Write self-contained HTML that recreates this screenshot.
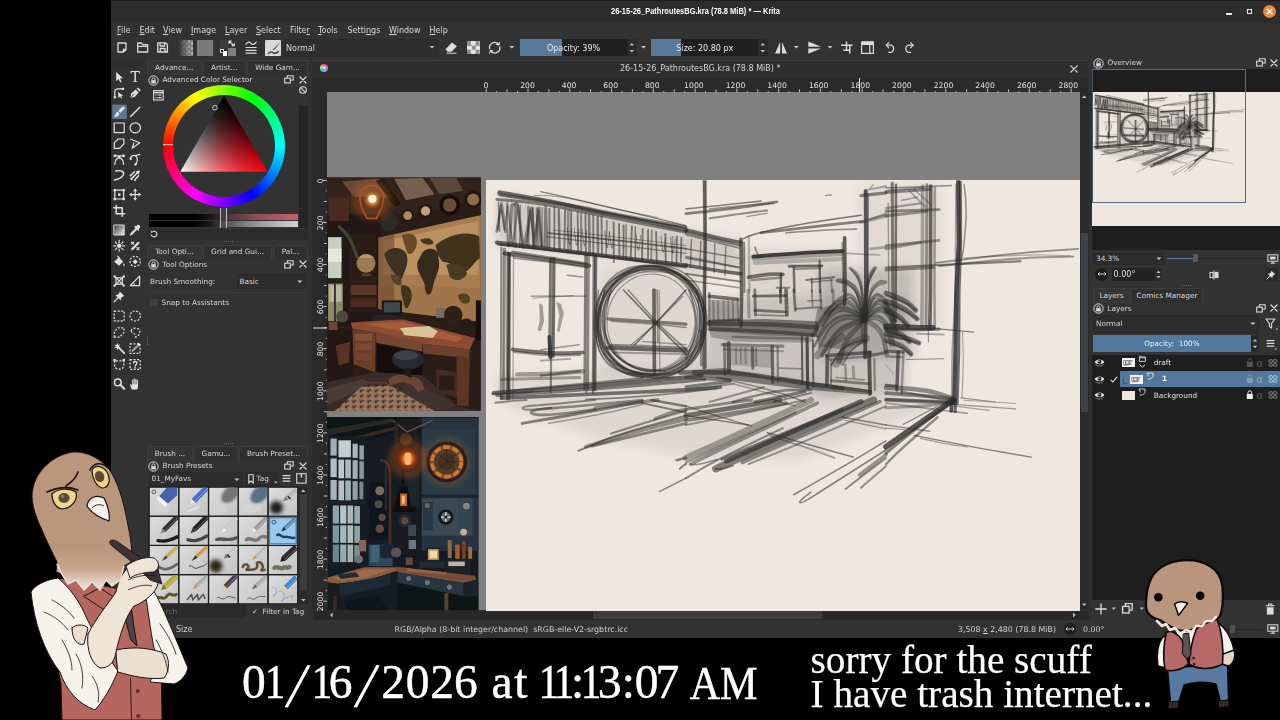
<!DOCTYPE html>
<html lang="en">
<head>
<meta charset="utf-8">
<title>26-15-26_PathroutesBG.kra (78.8 MiB) * — Krita</title>
<style>
*{box-sizing:border-box;margin:0;padding:0}
html,body{width:1280px;height:720px;overflow:hidden;background:#000}
body{position:relative;font-family:"DejaVu Sans","Liberation Sans",sans-serif;font-size:8px;color:#d6d6d6}
.a{position:absolute}
.t{position:absolute;white-space:nowrap;line-height:10px;font-size:8px;color:#d8d8d8}
svg{position:absolute;overflow:visible}
#win{left:0;top:0;width:1280px;height:720px}
.d{font-size:7.3px}
u{text-decoration:underline;text-underline-offset:1px}
</style>
</head>
<body>
<div id="win" class="a">
<div class="a" style="left:111px;top:0;width:1169px;height:638px;background:#323232"></div>
<div class="a" style="left:111px;top:0;width:1169px;height:22.5px;background:#2d2d2d;border-top:1px solid #1a1a1a"></div>
<div class="t" style="left:611.3px;top:6.6px;font-family:'Liberation Sans','DejaVu Sans',sans-serif;font-size:8.2px;font-weight:bold;color:#fff;transform:scaleX(0.915);transform-origin:0 50%">26-15-26_PathroutesBG.kra (78.8 MiB) * — Krita</div>
<!--menu-->
<div class="t" style="left:117px;top:26px"><u>F</u>ile</div>
<div class="t" style="left:139.5px;top:26px"><u>E</u>dit</div>
<div class="t" style="left:163px;top:26px"><u>V</u>iew</div>
<div class="t" style="left:191px;top:26px"><u>I</u>mage</div>
<div class="t" style="left:225px;top:26px"><u>L</u>ayer</div>
<div class="t" style="left:256px;top:26px"><u>S</u>elect</div>
<div class="t" style="left:290px;top:26px">Filte<u>r</u></div>
<div class="t" style="left:318px;top:26px"><u>T</u>ools</div>
<div class="t" style="left:347.5px;top:26px">Setti<u>n</u>gs</div>
<div class="t" style="left:389px;top:26px"><u>W</u>indow</div>
<div class="t" style="left:429.5px;top:26px"><u>H</u>elp</div>
<!-- window buttons -->
<div class="a" style="left:1226px;top:13px;width:6px;height:2px;background:#e8e8e8"></div>
<div class="a" style="left:1247px;top:9px;width:5px;height:5px;border:1.5px solid #e8e8e8"></div>
<div class="a" style="left:1263px;top:5px;width:13px;height:13px;border-radius:50%;background:#e8883a"></div>
<svg style="left:1263px;top:5px" width="13" height="13" viewBox="0 0 13 13"><path d="M4.2 4.2 L8.8 8.8 M8.8 4.2 L4.2 8.8" stroke="#fff" stroke-width="1.5" stroke-linecap="round"/></svg>

<!--toolbar-->
<div class="a" style="left:283px;top:39px;width:155px;height:17.5px;background:#2e2e2e;border:1px solid #2a2a2a;border-radius:2px"></div>
<!-- toolbar icons -->
<svg style="left:111px;top:36px" width="830" height="24" viewBox="111 36 830 24" fill="none" stroke="#dcdcdc" stroke-width="1.3" stroke-linejoin="round" stroke-linecap="round">
  <!-- new -->
  <path d="M118 43 H126 V49.5 L123.5 52 H118 Z M126 49.5 H123.5 V52"/>
  <!-- open -->
  <path d="M137.7 52 V43 H141.5 L142.8 44.6 H147.6 V52 Z M137.7 46.3 H147.6"/>
  <!-- save -->
  <path d="M157.7 42.8 H165.6 L167.4 44.6 V52 H157.7 Z M160 42.8 V46 H164.6 V42.8 M160.2 52 V48.5 H165 V52"/>
  <!-- brush settings -->
  <path d="M246 44.2 C248 41.5 249.5 41.5 251 43.3 S254.5 44.5 256.2 42.2 M246 47.5 H256.2 M246 50.3 H256.2 M246 53.1 H256.2" stroke-width="1.2"/>
  <!-- eraser -->
  <path d="M445.5 49.2 L452 42.6 L456.8 46.2 L451.5 51.8 H447.6 Z" fill="#dcdcdc" stroke="none"/>
  <path d="M447 53.2 H456" stroke-width="1"/>
  <!-- reload -->
  <path d="M489.6 48.6 A5.2 5.2 0 0 1 498.6 44.2 M499.8 46.8 A5.2 5.2 0 0 1 490.8 51.2" stroke-width="1.3"/>
  <path d="M499.6 42.2 L499 45 L496.4 44.4 M489.8 53.2 L490.4 50.4 L493 51" stroke-width="1.1"/>
  <!-- mirror H -->
  <path d="M780.2 42 V53.5 H775 Z M782 42 V53.5 H787 Z" fill="#dcdcdc" stroke="none"/>
  <!-- mirror V -->
  <path d="M808.3 41.6 L821 46.8 H808.3 Z M808.3 48.4 H821 L808.3 53.8 Z" fill="#dcdcdc" stroke="none"/>
  <!-- wrap/crop -->
  <path d="M846.5 41.5 V50.2 M841 45.2 H852.5 M849.8 45.2 V53.6 M843.4 50.2 H849.8" stroke-width="1.4" stroke-linecap="butt"/>
  <!-- table -->
  <path d="M861.6 41.8 H873.4 V53.4 H861.6 Z M861.6 44.4 H873.4 M869.8 44.4 V53.4" stroke-width="1.2"/>
  <path d="M861.6 41.8 H873.4 V44.4 H861.6 Z" fill="#dcdcdc" stroke="none"/>
  <!-- undo -->
  <path d="M886.6 45.2 H890.2 A3.4 3.6 0 0 1 890.2 52.4 H889" stroke-width="1.3"/>
  <path d="M888.8 42.6 L886.2 45.2 L888.8 47.8" stroke-width="1.2"/>
  <!-- redo -->
  <path d="M912.8 45.2 H909.2 A3.4 3.6 0 0 0 909.2 52.4 H910.4" stroke-width="1.3"/>
  <path d="M910.6 42.6 L913.2 45.2 L910.6 47.8" stroke-width="1.2"/>
  <!-- dropdown arrows -->
  <g fill="#c8c8c8" stroke="none">
    <path d="M429.5 46 h5 l-2.5 2.6z"/>
    <path d="M509.3 46 h5 l-2.5 2.6z"/>
    <path d="M641 46 h5 l-2.5 2.6z"/>
    <path d="M793.8 46 h5 l-2.5 2.6z"/>
    <path d="M827.5 46 h5 l-2.5 2.6z"/>
  </g>
</svg>
<!-- pattern (checker fade) -->
<div class="a" style="left:178px;top:39.5px;width:14.5px;height:16px;background:
 linear-gradient(90deg,#2e2e2e 0%,rgba(46,46,46,0.6) 35%,rgba(46,46,46,0) 100%),
 repeating-conic-gradient(#8a8a8a 0% 25%,#b8b8b8 0% 50%) 0 0/5px 5px"></div>
<!-- gradient -->
<div class="a" style="left:196.5px;top:39.5px;width:16px;height:16px;background:#7b7b7b"></div>
<!-- fg/bg -->
<div class="a" style="left:219.5px;top:40px;width:9px;height:8.5px;background:#3c3c3c"></div>
<div class="a" style="left:228px;top:48px;width:7.5px;height:7.5px;background:#7f7f7f"></div>
<div class="a" style="left:222.5px;top:51px;width:4.5px;height:4.5px;background:#fff"></div>
<div class="a" style="left:219.8px;top:48.6px;width:4.6px;height:4.6px;background:#000;border:0.8px solid #ddd"></div>
<svg style="left:228px;top:39px" width="8" height="8" viewBox="0 0 8 8" fill="none" stroke="#e6e6e6" stroke-width="1.1" stroke-linecap="round" stroke-linejoin="round"><path d="M1.2 2.2 L6 7 M1 4.2 V2 H3.2 M4 6.8 H6.2 V4.6"/></svg>
<!-- brush preset thumbnail -->
<div class="a" style="left:265px;top:39.5px;width:16.3px;height:16.2px;background:#d9d9d9;border-radius:1px"></div>
<svg style="left:265px;top:39.5px" width="16.3" height="16.2" viewBox="0 0 16.3 16.2"><path d="M15.8 1.5 L9 8.4 L7.2 10.6 L9.6 9.6 Z" fill="#3a3a3a"/><path d="M3.5 13.4 C5.5 11.4 7 11.8 8 12.6 S11 13.6 13.4 11.6" stroke="#444" stroke-width="1.5" fill="none" stroke-linecap="round"/></svg>
<!-- Normal combobox -->
<div class="t" style="left:286px;top:44px">Normal</div>
<!-- alpha lock checker -->
<div class="a" style="left:467px;top:41px;width:13px;height:13px;background:repeating-conic-gradient(#e6e6e6 0% 25%,#8c8c8c 0% 50%) 0 0/8.67px 8.67px"></div>
<!-- opacity slider -->
<div class="a" style="left:520px;top:39px;width:107px;height:17.3px;background:#1f1f1f"></div>
<div class="a" style="left:520px;top:39px;width:42px;height:17.3px;background:#587a9c"></div>
<div class="t" style="left:520px;top:44px;width:107px;text-align:center;color:#eee">Opacity: 39%</div>
<div class="a" style="left:627px;top:39px;width:9.5px;height:17.3px;background:#2a2a2a"></div>
<svg style="left:627px;top:39px" width="10" height="18" viewBox="0 0 10 18" fill="#bdbdbd"><path d="M2.4 6.6 L4.8 4 L7.2 6.6 Z M2.4 11 L4.8 13.6 L7.2 11 Z"/></svg>
<!-- size slider -->
<div class="a" style="left:651.3px;top:39px;width:107px;height:17.3px;background:#1f1f1f"></div>
<div class="a" style="left:651.3px;top:39px;width:30px;height:17.3px;background:#587a9c"></div>
<div class="t" style="left:651.3px;top:44px;width:107px;text-align:center;color:#eee">Size: 20.80 px</div>
<div class="a" style="left:758.3px;top:39px;width:9.5px;height:17.3px;background:#2a2a2a"></div>
<svg style="left:758.3px;top:39px" width="10" height="18" viewBox="0 0 10 18" fill="#bdbdbd"><path d="M2.4 6.6 L4.8 4 L7.2 6.6 Z M2.4 11 L4.8 13.6 L7.2 11 Z"/></svg>

<!--toolbox-->
<svg style="left:0;top:0" width="160" height="400" viewBox="0 0 160 400" stroke="#e2e2e2" stroke-width="1.2" stroke-linecap="round" stroke-linejoin="round">
<g transform="translate(113.2 71.0)"><path d="M3 1 L3 10.2 L5.4 8 L7 11.4 L8.4 10.8 L6.8 7.4 L9.8 7.2 Z" fill="#e2e2e2" stroke="none"/></g>
<g transform="translate(129.2 71.0)"><text x="6" y="11" text-anchor="middle" font-family="DejaVu Serif,Liberation Serif,serif" font-size="14" fill="#e2e2e2" stroke="none">T</text></g>
<g transform="translate(113.2 87.0)"><path d="M1.6 10 V4.6 C1.6 2.6 3 1.8 5 1.8 H9.6" fill="none"/><rect x="0.6" y="9.2" width="2.2" height="2.2" fill="#e2e2e2" stroke="none"/><rect x="8.6" y="0.8" width="2.2" height="2.2" fill="#e2e2e2" stroke="none"/><path d="M5 5 L5 11 L6.8 9.4 L8 11.6 L9 11 L7.9 9 L10 8.8 Z" fill="#e2e2e2" stroke="none"/></g>
<g transform="translate(129.2 87.0)"><path d="M1 11 L2.2 6.2 L6.4 2.6 L9.4 5.6 L5.8 9.8 Z" fill="#e2e2e2" stroke="none"/><path d="M7.4 1.6 L8.8 0.4 L11.6 3.2 L10.4 4.6 Z" fill="#e2e2e2" stroke="none"/><path d="M1.4 10.6 L5 7" stroke="#323232" stroke-width="0.9"/></g>
<rect x="112.3" y="104.6" width="14.6" height="14.4" fill="#5b7792" stroke="none"/>
<g transform="translate(113.2 105.8)"><path d="M10.8 0.8 C11.8 1.4 11.6 2.6 10.8 3.4 L7 7.2 L5 5.2 L8.8 1.2 C9.4 0.6 10.2 0.4 10.8 0.8 Z" fill="#e2e2e2" stroke="none"/><path d="M4.4 6 L6.2 7.8 C6.2 10 4.2 11.4 0.6 11.2 C2.2 10.2 2 8.6 2.6 7.4 C3 6.6 3.6 6.2 4.4 6 Z" fill="#e2e2e2" stroke="none"/></g>
<g transform="translate(129.2 105.8)"><path d="M1.4 10.6 L10.6 1.4" fill="none" stroke-width="1.4"/></g>
<g transform="translate(113.2 121.8)"><rect x="1" y="1.2" width="10" height="9.6" fill="none"/></g>
<g transform="translate(129.2 121.8)"><ellipse cx="6" cy="6" rx="5.2" ry="5" fill="none"/></g>
<g transform="translate(113.2 137.6)"><path d="M1 10.8 L1.2 5 L5 1.4 L10.8 1.4 L10.6 6.4 L6.4 10.8 Z" fill="none"/></g>
<g transform="translate(129.2 137.6)"><path d="M1.6 1.6 L10.6 5.2 L3 10.6 L4.6 5.4" fill="none"/></g>
<g transform="translate(113.2 153.4)"><path d="M1.6 11 C1.8 6.8 3.4 4.6 6 4.4 C8.6 4.6 10.2 6.8 10.4 11" fill="none"/><path d="M1.6 2.4 H10.4" fill="none"/><rect x="0.4" y="1.2" width="2.4" height="2.4" fill="#e2e2e2" stroke="none"/><rect x="9.2" y="1.2" width="2.4" height="2.4" fill="#e2e2e2" stroke="none"/><circle cx="6" cy="3.6" r="1.3" fill="#e2e2e2" stroke="none"/></g>
<g transform="translate(129.2 153.4)"><path d="M1.4 5.2 C1.4 2.6 4 1.6 6.4 2.2 L10.6 1" fill="none"/><path d="M6.6 2.4 C8.6 4.8 8.4 8 6.4 11.2" fill="none"/><rect x="0.4" y="4.2" width="2.2" height="2.2" fill="#e2e2e2" stroke="none"/><circle cx="6.4" cy="10.8" r="1.2" fill="#e2e2e2" stroke="none"/></g>
<g transform="translate(113.2 169.2)"><path d="M2.4 1.8 C7.6 0.6 11.4 2.4 10.2 5.6 C9 8.6 5 10 1.2 10.8" fill="none" stroke-width="1.4"/></g>
<g transform="translate(129.2 169.2)"><path d="M10.8 1 L6.2 2.2 L9.6 5.6 Z" fill="#e2e2e2" stroke="none"/><path d="M8 3.8 L3.4 8.4 M5.2 2.6 L2.2 5.6 M9.4 6.6 L6.4 9.8" fill="none" stroke-width="1.5"/><circle cx="2.4" cy="9.6" r="1.3" fill="#e2e2e2" stroke="none"/><circle cx="1.4" cy="6.2" r="1" fill="#e2e2e2" stroke="none"/><circle cx="5.8" cy="10.8" r="1" fill="#e2e2e2" stroke="none"/></g>
<g transform="translate(113.2 188.6)"><rect x="1.6" y="1.6" width="8.8" height="8.8" fill="none"/><rect x="0.4" y="0.4" width="2.4" height="2.4" fill="#e2e2e2" stroke="none"/><rect x="9.2" y="0.4" width="2.4" height="2.4" fill="#e2e2e2" stroke="none"/><rect x="0.4" y="9.2" width="2.4" height="2.4" fill="#e2e2e2" stroke="none"/><rect x="9.2" y="9.2" width="2.4" height="2.4" fill="#e2e2e2" stroke="none"/><rect x="4.8" y="4.8" width="2.4" height="2.4" fill="#e2e2e2" stroke="none"/></g>
<g transform="translate(129.2 188.6)"><path d="M6 1 V11 M1 6 H11" fill="none"/><path d="M6 0 L8 2.6 H4 Z M6 12 L8 9.4 H4 Z M0 6 L2.6 4 V8 Z M12 6 L9.4 4 V8 Z" fill="#e2e2e2" stroke="none"/></g>
<g transform="translate(113.2 204.8)"><path d="M3 0.6 V9 H11.4 M0.6 3 H9 V11.4" fill="none" stroke-width="1.5"/></g>
<defs><linearGradient id="tg" x1="0" y1="0" x2="1" y2="1"><stop offset="0" stop-color="#3a3a3a"/><stop offset="1" stop-color="#f0f0f0"/></linearGradient></defs>
<g transform="translate(113.2 224.0)"><rect x="1" y="1" width="10" height="10" fill="url(#tg)" stroke="#d8d8d8" stroke-width="1"/></g>
<g transform="translate(129.2 224.0)"><path d="M8.2 1 C9.4 -0.2 11.8 2.2 10.8 3.6 L9.2 5.2 L6.8 2.6 Z" fill="#e2e2e2" stroke="none"/><path d="M6 2.6 L9.2 6" fill="none" stroke-width="1.6"/><path d="M7 4.4 L2 9.4 L1.2 11 L2.8 10.2 L7.8 5.2" fill="none" stroke-width="1.1"/></g>
<g transform="translate(113.2 239.8)"><circle cx="6" cy="6" r="2.2" fill="#e2e2e2" stroke="none"/><path d="M6 0.6 V2.6 M6 9.4 V11.4 M0.6 6 H2.6 M9.4 6 H11.4 M2.2 2.2 L3.6 3.6 M8.4 8.4 L9.8 9.8 M2.2 9.8 L3.6 8.4 M8.4 3.6 L9.8 2.2" fill="none" stroke-dasharray="1 0.8"/></g>
<g transform="translate(129.2 239.8)"><path d="M1.6 9.2 L9 1.6 L10.6 3.2 L3.2 10.8 Z" fill="#e2e2e2" stroke="none"/><path d="M2.4 2.4 L4.4 4.4 M4.4 2.4 L2.4 4.4 M7.8 7.8 L9.8 9.8 M9.8 7.8 L7.8 9.8" fill="none" stroke-width="1.2"/></g>
<g transform="translate(113.2 255.4)"><path d="M1 6.4 L5.6 1.8 L10 6.2 L5.8 10.4 Z" fill="#e2e2e2" stroke="none"/><path d="M4.4 0.8 L6.4 2.8" fill="none"/><path d="M10.6 7.6 C11.6 9 11.8 10.2 10.8 10.8 C9.8 10.2 9.8 9 10.6 7.6Z" fill="#e2e2e2" stroke="none"/></g>
<g transform="translate(129.2 255.4)"><ellipse cx="6" cy="6" rx="5.2" ry="5" fill="none" stroke-dasharray="2 1.5" stroke-linecap="butt"/><path d="M3.4 6.4 L6 3.8 L8.6 6.4 L6 8.8 Z" fill="#e2e2e2" stroke="none"/></g>
<g transform="translate(113.2 275.0)"><path d="M1.4 1.4 L10.6 10.6 M10.6 1.4 L1.4 10.6" fill="none"/><rect x="2.8" y="2.8" width="6.4" height="6.4" fill="none"/><circle cx="1.4" cy="1.4" r="1.2" fill="#e2e2e2" stroke="none"/><circle cx="10.6" cy="1.4" r="1.2" fill="#e2e2e2" stroke="none"/><circle cx="1.4" cy="10.6" r="1.2" fill="#e2e2e2" stroke="none"/><circle cx="10.6" cy="10.6" r="1.2" fill="#e2e2e2" stroke="none"/></g>
<g transform="translate(129.2 275.0)"><path d="M1 10.6 L10.4 1.2 L10.4 10.6 Z" fill="none"/><path d="M5.4 10.4 A4.4 4.4 0 0 0 4.2 7.6" fill="none" stroke-width="0.9"/></g>
<g transform="translate(113.2 290.6)"><path d="M6.6 0.8 L11.2 5.4 L9.6 5.8 L7.8 7.6 L7.6 10 L2 4.4 L4.4 4.2 L6.2 2.4 Z" fill="#e2e2e2" stroke="none"/><path d="M4.6 7.4 L0.8 11.2" fill="none" stroke-width="1.2"/></g>
<g transform="translate(113.2 310.0)"><rect x="1" y="1.2" width="10" height="9.6" fill="none" stroke-dasharray="2 1.5" stroke-linecap="butt"/></g>
<g transform="translate(129.2 310.0)"><ellipse cx="6" cy="6" rx="5.2" ry="5" fill="none" stroke-dasharray="2 1.5" stroke-linecap="butt"/></g>
<g transform="translate(113.2 326.4)"><path d="M1 10.8 L1.2 5 L5 1.4 L10.8 1.4 L10.6 6.4 L6.4 10.8 Z" fill="none" stroke-dasharray="2 1.5" stroke-linecap="butt"/></g>
<g transform="translate(129.2 326.4)"><path d="M2 4.4 C2.4 1 9.6 0.6 10.4 4.6 C11 8 8.4 10.6 5.4 10.8 M2 4.4 C2 6.6 5 6.4 5.6 8.2" fill="none" stroke-dasharray="2 1.5" stroke-linecap="butt"/></g>
<g transform="translate(113.2 342.2)"><path d="M5 5 L11 11" fill="none" stroke-width="1.7"/><path d="M4 0.4 L4.8 2.8 L7.2 2 L5.6 4 L7.6 5.6 L5 5.6 L4.4 8 L3.4 5.6 L0.8 6 L2.8 4.2 L1.2 2.2 L3.4 2.8 Z" fill="#e2e2e2" stroke="none"/></g>
<g transform="translate(129.2 342.2)"><rect x="0.8" y="1.6" width="10" height="9.6" fill="none" stroke-dasharray="2 1.5" stroke-linecap="butt"/><path d="M8.6 1.2 C9.6 0.2 11.6 2 10.8 3.2 L9.6 4.4 L7.6 2.4 Z" fill="#e2e2e2" stroke="none"/><path d="M7.6 3.6 L3.6 7.6 L3 9 L4.4 8.4 L8.4 4.4" fill="none" stroke-width="1"/></g>
<g transform="translate(113.2 358.4)"><path d="M1.4 2.4 V6.4 C1.4 9.4 3.4 10.8 6 10.8 C8.6 10.8 10.6 9.4 10.6 6.4 V2.4 Z" fill="none" stroke-dasharray="2 1.5" stroke-linecap="butt"/><rect x="0.2" y="0.6" width="2.4" height="2.4" fill="#e2e2e2" stroke="none"/><rect x="9.4" y="0.6" width="2.4" height="2.4" fill="#e2e2e2" stroke="none"/></g>
<g transform="translate(129.2 358.4)"><rect x="0.8" y="1.2" width="10.2" height="9.8" fill="none" stroke-dasharray="2 1.5" stroke-linecap="butt"/><path d="M4.2 4.6 C4.4 2.6 7.8 2.6 7.8 4.6 C7.8 6 6 6 6 7.6" fill="none" stroke-width="1.3"/><circle cx="6" cy="9.4" r="0.8" fill="#e2e2e2" stroke="none"/></g>
<g transform="translate(113.2 377.8)"><circle cx="4.6" cy="4.6" r="3.3" fill="none" stroke-width="1.5"/><path d="M7 7 L11 11" fill="none" stroke-width="2"/></g>
<g transform="translate(129.2 377.8)"><path d="M2.6 11.6 L1 7.6 C0.6 6.6 1.6 6.2 2.2 7 L3 8 V2.4 C3 1.4 4.4 1.4 4.4 2.4 V1.4 C4.4 0.4 5.9 0.4 5.9 1.4 V1.8 C5.9 0.9 7.4 0.9 7.4 1.8 V2.8 C7.4 2 8.8 2 8.8 2.8 V8 C8.8 9.6 8.4 10.6 8 11.6 Z" fill="#e2e2e2" stroke="none"/><path d="M4.4 2.4 V6 M5.9 1.8 V6 M7.4 2.8 V6" stroke="#323232" stroke-width="0.5" fill="none"/></g>
</svg>
<div class="a" style="left:111px;top:59px;width:32px;height:9px;background:#2e2e2e"></div>

<!--leftdock-->
<div class="a" style="left:147.0px;top:60.0px;width:54.5px;height:15.0px;background:#353535;border:1px solid #3d3d3d;border-bottom:none;border-radius:2px 2px 0 0"></div>
<div class="t d" style="left:147.0px;top:63.0px;width:54.5px;text-align:center">Advance...</div>
<div class="a" style="left:202.5px;top:60.0px;width:43.5px;height:15.0px;background:#2f2f2f;border:1px solid #3d3d3d;border-bottom:none;border-radius:2px 2px 0 0"></div>
<div class="t d" style="left:202.5px;top:63.0px;width:43.5px;text-align:center">Artist...</div>
<div class="a" style="left:247.0px;top:60.0px;width:61.0px;height:15.0px;background:#2f2f2f;border:1px solid #3d3d3d;border-bottom:none;border-radius:2px 2px 0 0"></div>
<div class="t d" style="left:247.0px;top:63.0px;width:61.0px;text-align:center">Wide Gam...</div>
<svg style="left:148.0px;top:74.5px" width="11" height="11" viewBox="0 0 11 11" fill="none" stroke="#dcdcdc" stroke-width="1"><circle cx="5.5" cy="5.5" r="4.7"/><rect x="3.2" y="5.2" width="4.6" height="3.2" fill="#dcdcdc" stroke="none"/><path d="M4 5.2 V4.2 A1.5 1.5 0 0 1 7 4.2 V5.2" stroke-width="0.9"/></svg><div class="t d" style="left:162.5px;top:75.0px">Advanced Color Selector</div><svg style="left:284.2px;top:75.0px" width="10" height="9" viewBox="0 0 10 9" fill="none" stroke="#dcdcdc" stroke-width="1.1"><path d="M3.4 3 V0.8 H9.2 V5 H6.4"/><rect x="0.7" y="3.2" width="5.6" height="4.8" fill="#323232"/></svg><svg style="left:298.6px;top:75.5px" width="8" height="8" viewBox="0 0 8 8" fill="none" stroke="#dcdcdc" stroke-width="1.2" stroke-linecap="round"><path d="M1 1 L7 7 M7 1 L1 7"/></svg>
<svg style="left:153px;top:89.6px" width="11" height="11" viewBox="0 0 11 11" fill="none" stroke="#dcdcdc" stroke-width="1.1"><rect x="0.6" y="0.6" width="9.6" height="9.4"/><path d="M0.6 2.6 H10.2" stroke-width="1.6"/><path d="M2.4 5 H3.6 M4.6 5 H8.6 M2.4 7.6 H3.6 M4.6 7.6 H8.6" stroke-width="1.2"/></svg>
<svg style="left:299px;top:86px" width="8" height="8" viewBox="0 0 8 8" fill="none" stroke="#dcdcdc" stroke-width="1.1"><circle cx="4" cy="4" r="3.3"/><path d="M1.7 1.7 L6.3 6.3"/></svg>
<div class="a" style="left:299px;top:104.5px;width:8.5px;height:123px;background:#262626"></div>
<div class="a" style="left:163px;top:85px;width:122px;height:122px;border-radius:50%;background:conic-gradient(from 270deg,#ff0000,#ffff00 60deg,#00ff00 120deg,#00ffff 180deg,#0000ff 240deg,#ff00ff 300deg,#ff0000)"></div>
<div class="a" style="left:173px;top:95px;width:102px;height:102px;border-radius:50%;background:#323232"></div>
<svg style="left:163px;top:85px" width="122" height="122" viewBox="163 85 122 122">
<defs><linearGradient id="tr" gradientUnits="userSpaceOnUse" x1="0" y1="95.5" x2="0" y2="171.8"><stop offset="0" stop-color="#000"/><stop offset="0.25" stop-color="#200002"/><stop offset="0.5" stop-color="#5a0006"/><stop offset="0.75" stop-color="#a6000c"/><stop offset="1" stop-color="#f80014"/></linearGradient>
<linearGradient id="tw" gradientUnits="userSpaceOnUse" x1="245.8" y1="133.65" x2="180.2" y2="171.8"><stop offset="0" stop-color="#000"/><stop offset="0.25" stop-color="#00201e"/><stop offset="0.5" stop-color="#005a56"/><stop offset="0.75" stop-color="#00a6a0"/><stop offset="1" stop-color="#00fff6"/></linearGradient></defs>
<polygon points="224,95.5 267.6,171.8 180.2,171.8" fill="url(#tr)"/>
<polygon points="224,95.5 267.6,171.8 180.2,171.8" fill="url(#tw)" style="mix-blend-mode:screen"/>
<circle cx="214.9" cy="107.7" r="2.3" fill="none" stroke="#e8e8e8" stroke-width="0.8"/>
<path d="M163 144.6 H173" stroke="#e8b0b0" stroke-width="1.2"/>
</svg>
<div class="a" style="left:148.6px;top:214.2px;width:149.6px;height:6.2px;background:linear-gradient(90deg,#000 0%,#000 30%,#1c1618 42%,#4a3438 52%,#8a4e58 72%,#b85c68 92%,#c45e6c 100%)"></div>
<div class="a" style="left:148.6px;top:221px;width:149.6px;height:6.2px;background:linear-gradient(90deg,#000 0%,#000 30%,#1e1e1e 42%,#555 52%,#909090 70%,#c4c4c4 92%,#d2d2d2 100%)"></div>
<div class="a" style="left:220px;top:207.5px;width:7px;height:20.5px;background:rgba(90,90,90,0.35);border-left:1px solid #bdbdbd;border-right:1px solid #bdbdbd"></div>
<div class="a" style="left:148px;top:228.5px;width:159.5px;height:11.5px;background:#2b2b2b"></div>
<svg style="left:149.5px;top:229.5px" width="8" height="8" viewBox="0 0 8 8" fill="none" stroke="#dcdcdc" stroke-width="1.1"><path d="M1.2 4.6 A2.9 2.9 0 1 0 2.4 1.6"/><path d="M0.6 0.6 L2.2 2 L0.8 3.4" stroke-width="0.9"/></svg>
<div class="a" style="left:224px;top:241px;width:10px;height:1px;background:repeating-linear-gradient(90deg,#666 0 1px,transparent 1px 2px)"></div>
<div class="a" style="left:147.0px;top:244.5px;width:55.0px;height:14.5px;background:#353535;border:1px solid #3d3d3d;border-bottom:none;border-radius:2px 2px 0 0"></div>
<div class="t d" style="left:147.0px;top:247.2px;width:55.0px;text-align:center">Tool Opti...</div>
<div class="a" style="left:203.0px;top:244.5px;width:69.0px;height:14.5px;background:#2f2f2f;border:1px solid #3d3d3d;border-bottom:none;border-radius:2px 2px 0 0"></div>
<div class="t d" style="left:203.0px;top:247.2px;width:69.0px;text-align:center">Grid and Gui...</div>
<div class="a" style="left:273.0px;top:244.5px;width:35.0px;height:14.5px;background:#2f2f2f;border:1px solid #3d3d3d;border-bottom:none;border-radius:2px 2px 0 0"></div>
<div class="t d" style="left:273.0px;top:247.2px;width:35.0px;text-align:center">Pal...</div>
<svg style="left:148.0px;top:259.0px" width="11" height="11" viewBox="0 0 11 11" fill="none" stroke="#dcdcdc" stroke-width="1"><circle cx="5.5" cy="5.5" r="4.7"/><rect x="3.2" y="5.2" width="4.6" height="3.2" fill="#dcdcdc" stroke="none"/><path d="M4 5.2 V4.2 A1.5 1.5 0 0 1 7 4.2 V5.2" stroke-width="0.9"/></svg><div class="t d" style="left:162.5px;top:259.5px">Tool Options</div><svg style="left:284.2px;top:259.5px" width="10" height="9" viewBox="0 0 10 9" fill="none" stroke="#dcdcdc" stroke-width="1.1"><path d="M3.4 3 V0.8 H9.2 V5 H6.4"/><rect x="0.7" y="3.2" width="5.6" height="4.8" fill="#323232"/></svg><svg style="left:298.6px;top:260.0px" width="8" height="8" viewBox="0 0 8 8" fill="none" stroke="#dcdcdc" stroke-width="1.2" stroke-linecap="round"><path d="M1 1 L7 7 M7 1 L1 7"/></svg>
<div class="t d" style="left:150px;top:277px">Brush Smoothing:</div>
<div class="a" style="left:236.5px;top:274px;width:69px;height:14.5px;background:#2d2d2d;border:1px solid #2a2a2a;border-radius:2px"></div>
<div class="t d" style="left:239.5px;top:277px">Basic</div>
<svg style="left:296.5px;top:280px" width="6" height="4" viewBox="0 0 6 4" fill="#c8c8c8"><path d="M0.4 0.5 h5 l-2.5 2.6z"/></svg>
<div class="a" style="left:150px;top:292.3px;width:155px;height:1px;background:#3a3a3a"></div>
<div class="a" style="left:150px;top:298.5px;width:7.5px;height:7.5px;background:#3e3e3e;border-radius:1px"></div>
<div class="t d" style="left:161.6px;top:298px">Snap to Assistants</div>
<div class="a" style="left:146.5px;top:335px;width:1px;height:10px;background:repeating-linear-gradient(0deg,#666 0 1px,transparent 1px 2px)"></div>
<div class="a" style="left:310.5px;top:335px;width:1px;height:10px;background:repeating-linear-gradient(0deg,#666 0 1px,transparent 1px 2px)"></div>
<div class="a" style="left:224px;top:442.5px;width:10px;height:1px;background:repeating-linear-gradient(90deg,#666 0 1px,transparent 1px 2px)"></div>
<div class="a" style="left:147.0px;top:446.0px;width:46.0px;height:14.5px;background:#353535;border:1px solid #3d3d3d;border-bottom:none;border-radius:2px 2px 0 0"></div>
<div class="t d" style="left:147.0px;top:448.8px;width:46.0px;text-align:center">Brush ...</div>
<div class="a" style="left:194.0px;top:446.0px;width:44.0px;height:14.5px;background:#2f2f2f;border:1px solid #3d3d3d;border-bottom:none;border-radius:2px 2px 0 0"></div>
<div class="t d" style="left:194.0px;top:448.8px;width:44.0px;text-align:center">Gamu...</div>
<div class="a" style="left:239.0px;top:446.0px;width:69.0px;height:14.5px;background:#2f2f2f;border:1px solid #3d3d3d;border-bottom:none;border-radius:2px 2px 0 0"></div>
<div class="t d" style="left:239.0px;top:448.8px;width:69.0px;text-align:center">Brush Preset...</div>
<svg style="left:148.0px;top:460.5px" width="11" height="11" viewBox="0 0 11 11" fill="none" stroke="#dcdcdc" stroke-width="1"><circle cx="5.5" cy="5.5" r="4.7"/><rect x="3.2" y="5.2" width="4.6" height="3.2" fill="#dcdcdc" stroke="none"/><path d="M4 5.2 V4.2 A1.5 1.5 0 0 1 7 4.2 V5.2" stroke-width="0.9"/></svg><div class="t d" style="left:162.5px;top:461.0px">Brush Presets</div><svg style="left:284.2px;top:461.0px" width="10" height="9" viewBox="0 0 10 9" fill="none" stroke="#dcdcdc" stroke-width="1.1"><path d="M3.4 3 V0.8 H9.2 V5 H6.4"/><rect x="0.7" y="3.2" width="5.6" height="4.8" fill="#323232"/></svg><svg style="left:298.6px;top:461.5px" width="8" height="8" viewBox="0 0 8 8" fill="none" stroke="#dcdcdc" stroke-width="1.2" stroke-linecap="round"><path d="M1 1 L7 7 M7 1 L1 7"/></svg>
<div class="a" style="left:149px;top:471.5px;width:94px;height:14px;background:#2d2d2d;border:1px solid #2a2a2a;border-radius:2px"></div>
<div class="t d" style="left:151.5px;top:474px">01_MyFavs</div>
<svg style="left:233.5px;top:477.5px" width="6" height="4" viewBox="0 0 6 4" fill="#c8c8c8"><path d="M0.4 0.5 h5 l-2.5 2.6z"/></svg>
<div class="a" style="left:245px;top:471.5px;width:33.5px;height:14px;background:#2d2d2d;border:1px solid #2a2a2a;border-radius:2px"></div>
<svg style="left:247.6px;top:473.5px" width="6" height="10" viewBox="0 0 6 10" fill="none" stroke="#dcdcdc" stroke-width="1.1"><path d="M0.8 0.7 H5.2 V9 L3 7 L0.8 9 Z"/></svg>
<div class="t d" style="left:256.5px;top:474px">Tag</div>
<svg style="left:273.5px;top:480.5px" width="4" height="3" viewBox="0 0 4 3" fill="#c8c8c8"><path d="M0.2 0.4 h3.4 l-1.7 2z"/></svg>
<svg style="left:281.5px;top:474px" width="9" height="9" viewBox="0 0 9 9" stroke="#dcdcdc" stroke-width="1.2"><path d="M0.6 1.6 H8.4 M0.6 4.4 H8.4 M0.6 7.2 H8.4"/></svg>
<svg style="left:295.5px;top:473px" width="11" height="11" viewBox="0 0 11 11" fill="none" stroke="#dcdcdc" stroke-width="1.1"><rect x="0.7" y="0.7" width="9.4" height="9.4"/><path d="M5.4 0.7 V4.6" stroke-width="1.3"/></svg>
<svg style="left:149.4px;top:487.4px" width="148.8" height="116.88" viewBox="0 0 148.8 116.88">
<defs><pattern id="pck" width="3" height="3" patternUnits="userSpaceOnUse"><rect width="3" height="3" fill="#fff"/><rect width="1.5" height="1.5" fill="#aaa"/><rect x="1.5" y="1.5" width="1.5" height="1.5" fill="#aaa"/></pattern><filter id="pb0" x="-20%" y="-50%" width="140%" height="200%"><feGaussianBlur stdDeviation="0.7"/></filter><filter id="pb1"><feGaussianBlur stdDeviation="1.2"/></filter><filter id="pb2" x="-50%" y="-50%" width="200%" height="200%"><feGaussianBlur stdDeviation="2.2"/></filter><linearGradient id="pbg" x1="0" y1="0" x2="1" y2="1"><stop offset="0" stop-color="#dcdcdc"/><stop offset="1" stop-color="#c4c4c4"/></linearGradient></defs>
<rect x="-0.5" y="-0.5" width="149.8" height="117.88" fill="#1c1c1c"/>
<svg x="0.60" y="0.60" width="28.56" height="28.02" viewBox="0 0 30 29.4" preserveAspectRatio="none" overflow="hidden" style="position:static;overflow:hidden"><rect width="30" height="30" fill="url(#pbg)"/><rect x="6" y="16" width="14" height="10" fill="url(#pck)" opacity="0.8"/><polygon points="29,0 18,0 10,9 19,17 29,8" fill="#4466a8"/><polygon points="10,9 19,17 16,20 7,12" fill="#f4f4f4"/><circle cx="4.5" cy="4.5" r="2" fill="none" stroke="#333" stroke-width="0.8"/></svg>
<svg x="30.36" y="0.60" width="28.56" height="28.02" viewBox="0 0 30 29.4" preserveAspectRatio="none" overflow="hidden" style="position:static;overflow:hidden"><rect width="30" height="30" fill="url(#pbg)"/><polygon points="26.9,-2.1 12.9,11.9 17.1,16.1 31.1,2.1" fill="#4a6fc4"/><polygon points="12.9,11.9 12.2,16.8 17.1,16.1" fill="#f0f0f0"/><line x1="29.8" y1="0.8" x2="15.8" y2="14.8" stroke="#fff" stroke-opacity="0.35" stroke-width="1"/><path d="M9 25 L21 20" stroke="#f4f4f4" stroke-width="2.2" stroke-dasharray="1.5 1.2"/></svg>
<svg x="60.12" y="0.60" width="28.56" height="28.02" viewBox="0 0 30 29.4" preserveAspectRatio="none" overflow="hidden" style="position:static;overflow:hidden"><rect width="30" height="30" fill="url(#pbg)"/><rect x="5" y="17" width="13" height="9" fill="url(#pck)" opacity="0.8"/><ellipse cx="22" cy="7" rx="11" ry="7" fill="#747474" transform="rotate(-42 22 7)" filter="url(#pb1)"/></svg>
<svg x="89.88" y="0.60" width="28.56" height="28.02" viewBox="0 0 30 29.4" preserveAspectRatio="none" overflow="hidden" style="position:static;overflow:hidden"><rect width="30" height="30" fill="url(#pbg)"/><rect x="5" y="17" width="19" height="9" fill="url(#pck)" opacity="0.8"/><ellipse cx="22" cy="7" rx="11.5" ry="7.5" fill="#5a6e86" transform="rotate(-42 22 7)" filter="url(#pb1)"/></svg>
<svg x="119.64" y="0.60" width="28.56" height="28.02" viewBox="0 0 30 29.4" preserveAspectRatio="none" overflow="hidden" style="position:static;overflow:hidden"><rect width="30" height="30" fill="url(#pbg)"/><circle cx="8" cy="21" r="7" fill="#1a1a1a" filter="url(#pb2)"/><polygon points="27.5,0.3 17.5,9.3 20.5,12.7 30.5,3.7" fill="#b8b8b8"/><polygon points="17.5,9.3 15.3,14.3 20.5,12.7" fill="#777"/><line x1="29.6" y1="2.7" x2="19.6" y2="11.7" stroke="#fff" stroke-opacity="0.35" stroke-width="1"/><path d="M20 9 L23 12" stroke="#222" stroke-width="1.6"/></svg>
<svg x="0.60" y="29.82" width="28.56" height="28.02" viewBox="0 0 30 29.4" preserveAspectRatio="none" overflow="hidden" style="position:static;overflow:hidden"><rect width="30" height="30" fill="url(#pbg)"/><path d="M9 25 C14 26 22 25 29 21" stroke="#1c1c1c" stroke-width="3.6" fill="none" stroke-linecap="round"/><polygon points="27.2,-1.8 13.2,12.2 16.8,15.8 30.8,1.8" fill="#2e2e2e"/><polygon points="13.2,12.2 11.5,17.5 16.8,15.8" fill="#888"/><line x1="29.7" y1="0.7" x2="15.7" y2="14.7" stroke="#fff" stroke-opacity="0.35" stroke-width="1"/></svg>
<svg x="30.36" y="29.82" width="28.56" height="28.02" viewBox="0 0 30 29.4" preserveAspectRatio="none" overflow="hidden" style="position:static;overflow:hidden"><rect width="30" height="30" fill="url(#pbg)"/><path d="M9 24 C14 26 22 25 29 20" stroke="#444" stroke-width="3.4" fill="none" stroke-linecap="round" filter="url(#pb0)"/><polygon points="27.1,-1.9 14.1,11.1 17.9,14.9 30.9,1.9" fill="#222"/><polygon points="14.1,11.1 11.8,17.2 17.9,14.9" fill="#3a3a3a"/><line x1="29.8" y1="0.8" x2="16.8" y2="13.8" stroke="#fff" stroke-opacity="0.35" stroke-width="1"/></svg>
<svg x="60.12" y="29.82" width="28.56" height="28.02" viewBox="0 0 30 29.4" preserveAspectRatio="none" overflow="hidden" style="position:static;overflow:hidden"><rect width="30" height="30" fill="url(#pbg)"/><path d="M8 24 C13 21 18 27 29 22" stroke="#555" stroke-width="3.6" fill="none" stroke-linecap="round" filter="url(#pb0)"/><polygon points="27.4,-0.6 15.4,11.4 18.6,14.6 30.6,2.6" fill="#c9c9c9"/><polygon points="15.4,11.4 13.5,16.5 18.6,14.6" fill="#eee"/><line x1="29.6" y1="1.6" x2="17.6" y2="13.6" stroke="#fff" stroke-opacity="0.35" stroke-width="1"/></svg>
<svg x="89.88" y="29.82" width="28.56" height="28.02" viewBox="0 0 30 29.4" preserveAspectRatio="none" overflow="hidden" style="position:static;overflow:hidden"><rect width="30" height="30" fill="url(#pbg)"/><path d="M8 24 C12 20 16 28 21 23 S26 22 29 21" stroke="#777" stroke-width="3.6" fill="none" stroke-linecap="round" filter="url(#pb0)"/><polygon points="27.4,-0.6 15.4,11.4 18.6,14.6 30.6,2.6" fill="#9a9a9a"/><polygon points="15.4,11.4 13.5,16.5 18.6,14.6" fill="#e4e4e4"/><line x1="29.6" y1="1.6" x2="17.6" y2="13.6" stroke="#fff" stroke-opacity="0.35" stroke-width="1"/></svg>
<svg x="119.64" y="29.82" width="28.56" height="28.02" viewBox="0 0 30 29.4" preserveAspectRatio="none" overflow="hidden" style="position:static;overflow:hidden"><rect width="30" height="30" fill="url(#pbg)"/><rect x="0" y="0" width="30" height="30" fill="#9cc9e8"/><rect x="0.8" y="0.8" width="28.2" height="27.6" fill="none" stroke="#4f80ad" stroke-width="1.6"/><path d="M9 19 C12 17 13 22 17 21 S22 23 27 22" stroke="#1d3f72" stroke-width="2.6" fill="none" stroke-linecap="round"/><polygon points="26.7,0.5 15.7,10.5 18.3,13.5 29.3,3.5" fill="#5f86b8"/><polygon points="15.7,10.5 13.3,15.4 18.3,13.5" fill="#16264a"/><line x1="28.5" y1="2.6" x2="17.5" y2="12.6" stroke="#fff" stroke-opacity="0.35" stroke-width="1"/><circle cx="5.5" cy="5.5" r="2" fill="none" stroke="#234" stroke-width="0.8"/></svg>
<svg x="0.60" y="59.04" width="28.56" height="28.02" viewBox="0 0 30 29.4" preserveAspectRatio="none" overflow="hidden" style="position:static;overflow:hidden"><rect width="30" height="30" fill="url(#pbg)"/><path d="M10 22 C15 26 22 24 29 19" stroke="#666" stroke-width="3" fill="none" stroke-linecap="round" filter="url(#pb0)"/><polygon points="27.8,-0.3 16.8,9.7 19.2,12.3 30.2,2.3" fill="#c9a24a"/><polygon points="16.8,9.7 12.8,15.7 19.2,12.3" fill="#4a3a3a"/><line x1="29.5" y1="1.5" x2="18.5" y2="11.5" stroke="#fff" stroke-opacity="0.35" stroke-width="1"/></svg>
<svg x="30.36" y="59.04" width="28.56" height="28.02" viewBox="0 0 30 29.4" preserveAspectRatio="none" overflow="hidden" style="position:static;overflow:hidden"><rect width="30" height="30" fill="url(#pbg)"/><path d="M10 21 C13 19 15 25 19 23 S25 22 29 18" stroke="#333" stroke-width="0.9" fill="none"/><polygon points="27.9,-0.3 16.9,9.7 19.1,12.3 30.1,2.3" fill="#d98b3a"/><polygon points="16.9,9.7 12.8,15.7 19.1,12.3" fill="#3a2c2c"/><line x1="29.5" y1="1.5" x2="18.5" y2="11.5" stroke="#fff" stroke-opacity="0.35" stroke-width="1"/></svg>
<svg x="60.12" y="59.04" width="28.56" height="28.02" viewBox="0 0 30 29.4" preserveAspectRatio="none" overflow="hidden" style="position:static;overflow:hidden"><rect width="30" height="30" fill="url(#pbg)"/><circle cx="7" cy="21" r="7" fill="#2a2818" filter="url(#pb2)"/><polygon points="27.5,-0.7 17.5,8.3 20.5,11.7 30.5,2.7" fill="#c4c4c4"/><polygon points="17.5,8.3 15.3,13.3 20.5,11.7" fill="#777"/><line x1="29.6" y1="1.7" x2="19.6" y2="10.7" stroke="#fff" stroke-opacity="0.35" stroke-width="1"/><path d="M19 9 L22 12" stroke="#222" stroke-width="1.6"/></svg>
<svg x="89.88" y="59.04" width="28.56" height="28.02" viewBox="0 0 30 29.4" preserveAspectRatio="none" overflow="hidden" style="position:static;overflow:hidden"><rect width="30" height="30" fill="url(#pbg)"/><path d="M4 22 C5 18 11 19 10 22 S5 25 12 25 S20 22 19 19 S24 16 25 21 S20 26 27 25" stroke="#5a5230" stroke-width="2.6" fill="none" stroke-linecap="round"/><polygon points="27.7,-0.4 16.7,9.6 19.3,12.4 30.3,2.4" fill="#b9b9b9"/><polygon points="16.7,9.6 13.6,15.0 19.3,12.4" fill="#c9a030"/><line x1="29.5" y1="1.6" x2="18.5" y2="11.6" stroke="#fff" stroke-opacity="0.35" stroke-width="1"/></svg>
<svg x="119.64" y="59.04" width="28.56" height="28.02" viewBox="0 0 30 29.4" preserveAspectRatio="none" overflow="hidden" style="position:static;overflow:hidden"><rect width="30" height="30" fill="url(#pbg)"/><path d="M6 23 C9 20 12 25 15 23 S20 24 22 22" stroke="#6a6852" stroke-width="4.6" fill="none" stroke-linecap="round" opacity="0.9"/><polygon points="27.0,-1.2 14.0,10.8 18.0,15.2 31.0,3.2" fill="#2a2a2a"/><polygon points="14.0,10.8 12.3,16.4 18.0,15.2" fill="#111"/><line x1="29.8" y1="1.9" x2="16.8" y2="13.9" stroke="#fff" stroke-opacity="0.35" stroke-width="1"/></svg>
<svg x="0.60" y="88.26" width="28.56" height="28.02" viewBox="0 0 30 29.4" preserveAspectRatio="none" overflow="hidden" style="position:static;overflow:hidden"><rect width="30" height="30" fill="url(#pbg)"/><path d="M6 26 C10 19 14 28 18 22 S24 24 28 20" stroke="#5c5626" stroke-width="3.2" fill="none" stroke-linecap="round"/><polygon points="27.0,-2.2 14.0,9.8 18.0,14.2 31.0,2.2" fill="#b5a83c"/><polygon points="14.0,9.8 12.3,15.4 18.0,14.2" fill="#7c7428"/><line x1="29.8" y1="0.9" x2="16.8" y2="12.9" stroke="#fff" stroke-opacity="0.35" stroke-width="1"/></svg>
<svg x="30.36" y="88.26" width="28.56" height="28.02" viewBox="0 0 30 29.4" preserveAspectRatio="none" overflow="hidden" style="position:static;overflow:hidden"><rect width="30" height="30" fill="url(#pbg)"/><path d="M8 26 L13 20 L14 26 L19 20 L20 26 L25 20 L27 25" stroke="#555" stroke-width="1.6" fill="none" stroke-linejoin="round"/><polygon points="27.7,-0.5 16.7,9.5 19.3,12.5 30.3,2.5" fill="#aaa"/><polygon points="16.7,9.5 13.6,15.0 19.3,12.5" fill="#c9a040"/><line x1="29.5" y1="1.6" x2="18.5" y2="11.6" stroke="#fff" stroke-opacity="0.35" stroke-width="1"/></svg>
<svg x="60.12" y="88.26" width="28.56" height="28.02" viewBox="0 0 30 29.4" preserveAspectRatio="none" overflow="hidden" style="position:static;overflow:hidden"><rect width="30" height="30" fill="url(#pbg)"/><path d="M8 24 C11 21 13 27 17 24 S23 23 28 24" stroke="#444" stroke-width="0.9" fill="none"/><polygon points="27.2,-1.8 15.2,10.2 18.8,13.8 30.8,1.8" fill="#48424a"/><polygon points="15.2,10.2 12.8,16.2 18.8,13.8" fill="#e8c9a0"/><line x1="29.7" y1="0.7" x2="17.7" y2="12.7" stroke="#fff" stroke-opacity="0.35" stroke-width="1"/></svg>
<svg x="89.88" y="88.26" width="28.56" height="28.02" viewBox="0 0 30 29.4" preserveAspectRatio="none" overflow="hidden" style="position:static;overflow:hidden"><rect width="30" height="30" fill="url(#pbg)"/><path d="M9 25 C12 22 14 27 18 24 S24 23 28 22" stroke="#555" stroke-width="0.9" fill="none"/><polygon points="27.7,-0.5 16.7,9.5 19.3,12.5 30.3,2.5" fill="#a8a8a8"/><polygon points="16.7,9.5 13.6,15.0 19.3,12.5" fill="#666"/><line x1="29.5" y1="1.6" x2="18.5" y2="11.6" stroke="#fff" stroke-opacity="0.35" stroke-width="1"/></svg>
<svg x="119.64" y="88.26" width="28.56" height="28.02" viewBox="0 0 30 29.4" preserveAspectRatio="none" overflow="hidden" style="position:static;overflow:hidden"><rect width="30" height="30" fill="url(#pbg)"/><path d="M3 14 C8 8 10 20 6 22 S14 10 16 20 S8 28 18 24 S26 20 24 26" stroke="#7fa6dc" stroke-width="0.8" fill="none"/><polygon points="27.1,0.1 16.1,11.1 19.9,14.9 30.9,3.9" fill="#3d86d8"/><polygon points="16.1,11.1 14.1,16.9 19.9,14.9" fill="#e8c9a0"/><line x1="29.8" y1="2.8" x2="18.8" y2="13.8" stroke="#fff" stroke-opacity="0.35" stroke-width="1"/></svg>
</svg>
<div class="a" style="left:299px;top:487px;width:8.5px;height:117px;background:#2a2a2a"></div>
<svg style="left:299px;top:487px" width="9" height="117" viewBox="0 0 9 117" fill="#bdbdbd"><path d="M2 5 L4.3 2.6 L6.6 5 Z M2 112 L4.3 114.4 L6.6 112 Z"/></svg>
<div class="a" style="left:299.5px;top:494px;width:7.5px;height:96px;background:#3c3c3c"></div>
<div class="a" style="left:149px;top:604.5px;width:97px;height:13px;background:#2a2a2a"></div>
<div class="t d" style="left:152px;top:606.5px;color:#6a6a6a">Search</div>
<div class="t d" style="left:252px;top:606.5px"><span style="font-size:7px">✓</span>&nbsp; Filter in Tag</div>

<!--canvas-->
<div class="a" style="left:308px;top:59px;width:4px;height:561px;background:#303030"></div>
<div class="a" style="left:312px;top:59.5px;width:776px;height:18.5px;background:#2e2e2e;border-top:1px solid #3c3c3c"></div>
<div class="t" style="left:620px;top:63.5px;width:158px;text-align:center;color:#d4d4d4">26-15-26_PathroutesBG.kra (78.8 MiB) *</div>
<svg style="left:1070.3px;top:65.2px" width="8" height="8" viewBox="0 0 8 8" fill="none" stroke="#e0e0e0" stroke-width="1.2" stroke-linecap="round"><path d="M0.8 0.8 L7.2 7.2 M7.2 0.8 L0.8 7.2"/></svg>
<div class="a" style="left:320.3px;top:63.5px;width:8px;height:8px;border-radius:50%;background:conic-gradient(from 20deg,#e83a9a,#f06ab0 25%,#38c4d8 40%,#46d0c0 60%,#d0d860 72%,#e83a9a)"></div><div class="a" style="left:323px;top:66px;width:3px;height:3px;border-radius:50%;background:#fff;opacity:.75"></div>
<div class="a" style="left:313px;top:78px;width:775px;height:14.5px;background:#2a2a2a"></div>
<div class="a" style="left:312px;top:78px;width:15px;height:532px;background:#2a2a2a"></div>
<div class="a" style="left:327px;top:92.3px;width:753px;height:518px;background:#808080"></div>
<svg style="left:0;top:0" width="1280" height="720" viewBox="0 0 1280 720" stroke="#cfcfcf" stroke-width="0.9" font-family="DejaVu Sans,Liberation Sans,sans-serif" font-size="7.7">
<path d="M486.2 88.3 V92.3"/>
<path d="M496.6 91.1 V92.3"/>
<path d="M507.1 89.3 V92.3"/>
<path d="M517.5 91.1 V92.3"/>
<path d="M528.0 88.3 V92.3"/>
<path d="M538.4 91.1 V92.3"/>
<path d="M548.9 89.3 V92.3"/>
<path d="M559.3 91.1 V92.3"/>
<path d="M569.8 88.3 V92.3"/>
<path d="M580.2 91.1 V92.3"/>
<path d="M590.6 89.3 V92.3"/>
<path d="M601.1 91.1 V92.3"/>
<path d="M611.5 88.3 V92.3"/>
<path d="M622.0 91.1 V92.3"/>
<path d="M632.4 89.3 V92.3"/>
<path d="M642.9 91.1 V92.3"/>
<path d="M653.3 88.3 V92.3"/>
<path d="M663.8 91.1 V92.3"/>
<path d="M674.2 89.3 V92.3"/>
<path d="M684.7 91.1 V92.3"/>
<path d="M695.1 88.3 V92.3"/>
<path d="M705.5 91.1 V92.3"/>
<path d="M716.0 89.3 V92.3"/>
<path d="M726.4 91.1 V92.3"/>
<path d="M736.9 88.3 V92.3"/>
<path d="M747.3 91.1 V92.3"/>
<path d="M757.8 89.3 V92.3"/>
<path d="M768.2 91.1 V92.3"/>
<path d="M778.7 88.3 V92.3"/>
<path d="M789.1 91.1 V92.3"/>
<path d="M799.5 89.3 V92.3"/>
<path d="M810.0 91.1 V92.3"/>
<path d="M820.4 88.3 V92.3"/>
<path d="M830.9 91.1 V92.3"/>
<path d="M841.3 89.3 V92.3"/>
<path d="M851.8 91.1 V92.3"/>
<path d="M862.2 88.3 V92.3"/>
<path d="M872.7 91.1 V92.3"/>
<path d="M883.1 89.3 V92.3"/>
<path d="M893.6 91.1 V92.3"/>
<path d="M904.0 88.3 V92.3"/>
<path d="M914.4 91.1 V92.3"/>
<path d="M924.9 89.3 V92.3"/>
<path d="M935.3 91.1 V92.3"/>
<path d="M945.8 88.3 V92.3"/>
<path d="M956.2 91.1 V92.3"/>
<path d="M966.7 89.3 V92.3"/>
<path d="M977.1 91.1 V92.3"/>
<path d="M987.6 88.3 V92.3"/>
<path d="M998.0 91.1 V92.3"/>
<path d="M1008.5 89.3 V92.3"/>
<path d="M1018.9 91.1 V92.3"/>
<path d="M1029.3 88.3 V92.3"/>
<path d="M1039.8 91.1 V92.3"/>
<path d="M1050.2 89.3 V92.3"/>
<path d="M1060.7 91.1 V92.3"/>
<path d="M1071.1 88.3 V92.3"/>
<text x="485.9" y="87.6" text-anchor="middle" fill="#e0e0e0" stroke="none">0</text>
<text x="527.5" y="87.6" text-anchor="middle" fill="#e0e0e0" stroke="none">200</text>
<text x="569.1" y="87.6" text-anchor="middle" fill="#e0e0e0" stroke="none">400</text>
<text x="610.7" y="87.6" text-anchor="middle" fill="#e0e0e0" stroke="none">600</text>
<text x="652.3" y="87.6" text-anchor="middle" fill="#e0e0e0" stroke="none">800</text>
<text x="693.9" y="87.6" text-anchor="middle" fill="#e0e0e0" stroke="none">1000</text>
<text x="735.5" y="87.6" text-anchor="middle" fill="#e0e0e0" stroke="none">1200</text>
<text x="777.1" y="87.6" text-anchor="middle" fill="#e0e0e0" stroke="none">1400</text>
<text x="818.7" y="87.6" text-anchor="middle" fill="#e0e0e0" stroke="none">1600</text>
<text x="860.3" y="87.6" text-anchor="middle" fill="#e0e0e0" stroke="none">1800</text>
<text x="901.9" y="87.6" text-anchor="middle" fill="#e0e0e0" stroke="none">2000</text>
<text x="943.5" y="87.6" text-anchor="middle" fill="#e0e0e0" stroke="none">2200</text>
<text x="985.1" y="87.6" text-anchor="middle" fill="#e0e0e0" stroke="none">2400</text>
<text x="1026.7" y="87.6" text-anchor="middle" fill="#e0e0e0" stroke="none">2600</text>
<text x="1068.3" y="87.6" text-anchor="middle" fill="#e0e0e0" stroke="none">2800</text>
<path d="M323.0 180.4 H327"/>
<path d="M325.8 190.9 H327"/>
<path d="M324.0 201.4 H327"/>
<path d="M325.8 212.0 H327"/>
<path d="M323.0 222.5 H327"/>
<path d="M325.8 233.0 H327"/>
<path d="M324.0 243.5 H327"/>
<path d="M325.8 254.0 H327"/>
<path d="M323.0 264.6 H327"/>
<path d="M325.8 275.1 H327"/>
<path d="M324.0 285.6 H327"/>
<path d="M325.8 296.1 H327"/>
<path d="M323.0 306.6 H327"/>
<path d="M325.8 317.2 H327"/>
<path d="M324.0 327.7 H327"/>
<path d="M325.8 338.2 H327"/>
<path d="M323.0 348.7 H327"/>
<path d="M325.8 359.2 H327"/>
<path d="M324.0 369.8 H327"/>
<path d="M325.8 380.3 H327"/>
<path d="M323.0 390.8 H327"/>
<path d="M325.8 401.3 H327"/>
<path d="M324.0 411.8 H327"/>
<path d="M325.8 422.4 H327"/>
<path d="M323.0 432.9 H327"/>
<path d="M325.8 443.4 H327"/>
<path d="M324.0 453.9 H327"/>
<path d="M325.8 464.4 H327"/>
<path d="M323.0 475.0 H327"/>
<path d="M325.8 485.5 H327"/>
<path d="M324.0 496.0 H327"/>
<path d="M325.8 506.5 H327"/>
<path d="M323.0 517.0 H327"/>
<path d="M325.8 527.6 H327"/>
<path d="M324.0 538.1 H327"/>
<path d="M325.8 548.6 H327"/>
<path d="M323.0 559.1 H327"/>
<path d="M325.8 569.6 H327"/>
<path d="M324.0 580.2 H327"/>
<path d="M325.8 590.7 H327"/>
<path d="M323.0 601.2 H327"/>
<text transform="translate(322.8 180.7) rotate(-90)" text-anchor="middle" fill="#e0e0e0" stroke="none">0</text>
<text transform="translate(322.8 222.8) rotate(-90)" text-anchor="middle" fill="#e0e0e0" stroke="none">200</text>
<text transform="translate(322.8 264.9) rotate(-90)" text-anchor="middle" fill="#e0e0e0" stroke="none">400</text>
<text transform="translate(322.8 306.9) rotate(-90)" text-anchor="middle" fill="#e0e0e0" stroke="none">600</text>
<text transform="translate(322.8 349.0) rotate(-90)" text-anchor="middle" fill="#e0e0e0" stroke="none">800</text>
<text transform="translate(322.8 391.1) rotate(-90)" text-anchor="middle" fill="#e0e0e0" stroke="none">1000</text>
<text transform="translate(322.8 433.2) rotate(-90)" text-anchor="middle" fill="#e0e0e0" stroke="none">1200</text>
<text transform="translate(322.8 475.3) rotate(-90)" text-anchor="middle" fill="#e0e0e0" stroke="none">1400</text>
<text transform="translate(322.8 517.3) rotate(-90)" text-anchor="middle" fill="#e0e0e0" stroke="none">1600</text>
<text transform="translate(322.8 559.4) rotate(-90)" text-anchor="middle" fill="#e0e0e0" stroke="none">1800</text>
<text transform="translate(322.8 601.5) rotate(-90)" text-anchor="middle" fill="#e0e0e0" stroke="none">2000</text>
<path d="M859.5 78 V92.3" stroke="#e6e6e6" stroke-width="1"/>
<path d="M313 328 H327" stroke="#e6e6e6" stroke-width="1"/>
</svg>
<div class="a" style="left:1080px;top:92.3px;width:8.5px;height:518px;background:#2a2a2a"></div>
<div class="a" style="left:1080.5px;top:233px;width:7.5px;height:178.5px;background:#3d4349"></div>
<svg style="left:1080px;top:92px" width="9" height="528" viewBox="0 0 9 528" fill="#bdbdbd"><path d="M1.8 6 L4.2 3.4 L6.6 6 Z M1.8 511.4 L4.2 514 L6.6 511.4 Z"/></svg>
<div class="a" style="left:313px;top:610.8px;width:775.5px;height:9.2px;background:#282828"></div>
<div class="a" style="left:593px;top:611.3px;width:229px;height:8px;background:#3c3c3c"></div>
<svg style="left:327px;top:610px" width="760" height="10" viewBox="0 0 760 10" fill="#bdbdbd"><path d="M5.6 2.6 L3 5 L5.6 7.4 Z M746 2.6 L748.6 5 L746 7.4 Z"/></svg>
<div class="a" style="left:486.3px;top:180.2px;width:593.7px;height:430.6px;background:#efe8e0"></div>
<svg style="left:0;top:0" width="1280" height="720" viewBox="0 0 1280 720">
<defs>
<filter id="rb1" x="-5%" y="-5%" width="110%" height="110%"><feGaussianBlur stdDeviation="1.6"/></filter>
<filter id="rb2" x="-5%" y="-5%" width="110%" height="110%"><feGaussianBlur stdDeviation="3.5"/></filter>
<filter id="rb3" x="-50%" y="-50%" width="200%" height="200%"><feGaussianBlur stdDeviation="9"/></filter>
<clipPath id="rc1"><rect x="14" y="10" width="459" height="695"/></clipPath>
<clipPath id="rc2"><rect x="18" y="18" width="535" height="683"/></clipPath>
<radialGradient id="lampg"><stop offset="0" stop-color="#fff0c8"/><stop offset="0.35" stop-color="#f0a050"/><stop offset="1" stop-color="#a04818" stop-opacity="0"/></radialGradient>
<radialGradient id="lampg2"><stop offset="0" stop-color="#ffd090"/><stop offset="0.4" stop-color="#f07830"/><stop offset="1" stop-color="#902808" stop-opacity="0"/></radialGradient>
<pattern id="rug" width="22" height="16" patternUnits="userSpaceOnUse"><rect width="22" height="16" fill="#94705a"/><circle cx="6" cy="5" r="4" fill="#3c2c28"/><circle cx="17" cy="12" r="4" fill="#a08058"/><rect x="10" y="0" width="4" height="4" fill="#2c2424"/></pattern>
</defs>
<!-- ===== image 1 (study with world map) ===== -->
<g transform="translate(322 174) scale(0.33602)" clip-path="url(#rc1)">
<rect x="14" y="10" width="459" height="695" fill="#2a1c17"/>
<g filter="url(#rb1)">
<!-- ceiling -->
<polygon points="14,10 473,10 473,70 330,110 230,120 160,150 14,120" fill="#33231b"/>
<polygon points="60,22 170,14 200,70 95,68" fill="#6a4a38"/>
<polygon points="215,14 300,12 335,60 250,78" fill="#75604e"/>
<polygon points="320,12 400,12 420,50 350,60" fill="#5c4a3c"/>
<polygon points="160,20 215,95 235,90 185,14" fill="#1c1410"/>
<!-- back wall / shelves left -->
<rect x="14" y="120" width="160" height="330" fill="#241812"/>
<rect x="20" y="70" width="60" height="70" fill="#4a2c1e"/>
<rect x="82" y="180" width="80" height="230" fill="#2c1d16"/>
<rect x="86" y="330" width="76" height="30" fill="#5a3626"/>
<rect x="86" y="370" width="76" height="26" fill="#4a2c20"/>
<!-- window -->
<rect x="14" y="178" width="56" height="268" fill="#1e1a16"/>
<rect x="18" y="188" width="40" height="122" fill="#c9cfc0"/>
<rect x="18" y="222" width="40" height="40" fill="#e6e8dc"/>
<rect x="18" y="326" width="44" height="112" fill="#8d8a6c"/>
<rect x="22" y="330" width="36" height="50" fill="#b8b89c"/>
<rect x="14" y="312" width="56" height="12" fill="#2a211a"/>
<rect x="36" y="326" width="5" height="112" fill="#2a211a"/>
<!-- plant -->
<path d="M50 150 C80 170 95 200 110 250 L100 252 C90 210 72 180 46 160 Z" fill="#3c4630"/>
<!-- map -->
<polygon points="168,190 473,122 473,440 168,402" fill="#a87c50"/>
<polygon points="180,200 465,140 465,300 180,300" fill="#bd9060"/>
<polygon points="168,330 473,340 473,440 168,402" fill="#a07448"/><polygon points="168,190 215,180 215,400 168,402" fill="#6a4a30" opacity="0.6"/>
<!-- continents -->
<path d="M185 240 C200 215 235 215 250 235 C262 262 246 292 232 322 C222 300 200 282 185 240 Z" fill="#3c3020"/>
<path d="M238 182 C262 172 286 178 282 210 C276 236 258 250 250 226 C246 208 240 196 238 182 Z" fill="#6a4828"/>
<path d="M236 332 C256 326 272 346 266 372 C260 396 250 412 244 388 C240 366 232 350 236 332 Z" fill="#40321e"/>
<path d="M300 232 C320 212 352 226 346 250 C356 282 336 302 330 336 C322 372 306 362 306 330 C296 300 280 290 284 262 Z" fill="#35291c"/>
<path d="M338 212 C372 182 432 166 468 186 L470 250 C452 262 440 290 420 292 C400 282 384 262 360 262 C348 250 340 230 338 212 Z" fill="#40331f"/>
<path d="M404 360 C424 350 444 356 440 380 C428 392 408 386 404 360 Z" fill="#54401f"/>
<path d="M370 270 C392 262 420 272 432 296 C420 318 394 322 380 306 Z" fill="#4a3a22"/><path d="M292 196 C310 186 330 192 332 206 C318 214 300 212 292 196 Z" fill="#4a3822"/><path d="M205 300 C225 296 240 312 236 330 C220 336 206 322 205 300 Z" fill="#5a4226"/>
<!-- top shelf globes -->
<rect x="230" y="128" width="243" height="14" fill="#2c1c14" transform="rotate(-9 350 135)"/>
<circle cx="200" cy="142" r="26" fill="#2e2a26"/>
<circle cx="255" cy="124" r="19" fill="#1e1612"/><circle cx="255" cy="124" r="13" fill="#b08c60"/>
<circle cx="308" cy="110" r="21" fill="#1e1612"/><circle cx="308" cy="110" r="14" fill="#bfa078"/>
<circle cx="380" cy="92" r="31" fill="#17110e"/><circle cx="380" cy="92" r="20" fill="#6a5036"/>
<circle cx="450" cy="76" r="26" fill="#1c1410"/><circle cx="450" cy="76" r="18" fill="#8a6c4a"/>
<!-- globe on shelf -->
<circle cx="131" cy="266" r="28" fill="#9c7c54"/><path d="M110 250 a28 28 0 0 1 45 0 z" fill="#b89868"/>
<rect x="118" y="296" width="28" height="8" fill="#5a3a26"/>
<!-- monitor -->
<rect x="178" y="376" width="60" height="46" fill="#16181a"/><rect x="184" y="382" width="48" height="30" fill="#3c4a48"/>
<!-- items on desk -->
<rect x="150" y="420" width="70" height="28" fill="#2a2420"/>
<rect x="170" y="440" width="70" height="22" fill="#4a4844"/>
<circle cx="390" cy="420" r="28" fill="#2a2018"/><circle cx="430" cy="450" r="20" fill="#241a14"/>
<rect x="340" y="398" width="24" height="30" fill="#7a6c60"/>
<rect x="458" y="376" width="15" height="120" fill="#17110f"/>
<!-- desk top -->
<polygon points="86,442 240,432 455,488 440,522 300,505 160,472 90,460" fill="#8c4c32"/>
<polygon points="120,446 240,440 420,486 400,500 250,470" fill="#a85c3a"/>
<polygon points="232,458 318,452 344,468 330,488 246,480" fill="#d8c498"/>
<!-- desk front -->
<polygon points="90,460 160,472 158,590 94,566" fill="#6a3c28"/>
<rect x="98" y="476" width="52" height="20" fill="#83513a"/><rect x="98" y="504" width="52" height="20" fill="#7a4832"/><rect x="98" y="532" width="52" height="24" fill="#704230"/>
<polygon points="160,472 300,500 298,528 162,502" fill="#744630"/>
<polygon points="300,505 440,522 438,548 302,534" fill="#6c402c"/>
<polygon points="400,540 440,548 436,690 402,690" fill="#5a3424"/>
<polygon points="340,580 402,590 402,665 342,650" fill="#4a2c20"/>
<rect x="348" y="600" width="46" height="44" fill="#2c1c16"/>
<!-- under desk dark -->
<polygon points="162,505 300,530 300,600 162,590" fill="#17100e"/>
<!-- left cabinet -->
<polygon points="14,470 90,462 92,600 14,620" fill="#241512"/>
<polygon points="40,510 84,500 80,560 50,570" fill="#5a3020"/>
<rect x="20" y="440" width="26" height="24" fill="#6a4630"/>
<circle cx="60" cy="424" r="18" fill="#4a4a40"/>
<!-- floor -->
<polygon points="14,620 160,590 300,600 402,690 473,705 14,705" fill="#3a2c29"/>
<polygon points="14,640 120,610 150,625 14,690" fill="#4a3a36"/>
<polygon points="260,610 400,690 330,705 230,650" fill="#40322e"/>
<!-- chair -->
<ellipse cx="255" cy="552" rx="46" ry="30" fill="#262b2e"/>
<ellipse cx="250" cy="540" rx="36" ry="14" fill="#3a4246"/>
<rect x="244" y="578" width="20" height="30" fill="#1c1a1a"/>
<path d="M196 612 C220 592 250 596 262 606 C280 600 300 612 304 640 L284 650 C276 630 262 622 254 624 C240 616 222 622 204 630 Z" fill="#6e4430"/>
<!-- rug -->
<polygon points="132,620 186,620 335,705 38,705" fill="url(#rug)"/>
<polygon points="132,620 186,620 200,630 118,634" fill="#2c2222" opacity="0.7"/>
</g>
<!-- lamp -->
<circle cx="148" cy="78" r="60" fill="#c06020" opacity="0.35" filter="url(#rb3)"/>
<g filter="url(#rb1)">
<path d="M112 70 a36 36 0 0 1 72 0 l-6 30 l-16 32 l-28 0 l-16 -32 z" fill="none" stroke="#a85428" stroke-width="5"/>
<circle cx="150" cy="76" r="30" fill="url(#lampg)"/>
<circle cx="150" cy="74" r="12" fill="#fff4d8"/>
</g>
</g>
<!-- ===== image 2 (steampunk workshop) ===== -->
<g transform="translate(322 412) scale(0.28325)" clip-path="url(#rc2)">
<rect x="18" y="18" width="535" height="683" fill="#141a20"/>
<g filter="url(#rb1)">
<!-- ceiling -->
<polygon points="18,18 553,18 553,40 350,40 260,70 160,100 18,80" fill="#0e1216"/>
<polygon points="18,60 250,22 262,34 18,84" fill="#2c2824"/>
<polygon points="100,90 262,50 266,62 110,100" fill="#3a2c24"/>
<!-- back wall right: steel panels -->
<rect x="345" y="20" width="208" height="470" fill="#27333d"/>
<rect x="350" y="60" width="190" height="230" fill="#2c3a45"/>
<rect x="350" y="305" width="182" height="132" fill="#384854"/>
<rect x="352" y="440" width="190" height="50" fill="#26323c"/>
<rect x="345" y="292" width="208" height="10" fill="#1a242c"/>
<rect x="340" y="20" width="12" height="470" fill="#141c22"/>
<!-- panel details -->
<rect x="356" y="318" width="36" height="100" fill="#2a3844"/><rect x="480" y="312" width="46" height="110" fill="#34444f"/>
<circle cx="510" cy="332" r="12" fill="#8a8478"/><circle cx="372" cy="330" r="9" fill="#7a6050"/>
<circle cx="437" cy="371" r="27" fill="#12181c"/><circle cx="437" cy="371" r="17" fill="#586a70"/><path d="M437 354 V388 M420 371 H454" stroke="#dfe6e0" stroke-width="5"/><circle cx="437" cy="371" r="6" fill="#1a2024"/>
<!-- mid wall -->
<rect x="150" y="100" width="195" height="400" fill="#181c21"/>
<rect x="166" y="250" width="70" height="200" fill="#10161a"/>
<circle cx="204" cy="278" r="16" fill="#7a6a58"/><circle cx="200" cy="326" r="14" fill="#4a4844"/><circle cx="212" cy="372" r="13" fill="#5a4a40"/><circle cx="204" cy="412" r="15" fill="#6a4a38"/>
<path d="M205 170 C232 170 240 190 240 230 V470" fill="none" stroke="#4e2e22" stroke-width="9"/>
<path d="M225 190 V350" stroke="#2a3036" stroke-width="6"/>
<rect x="300" y="210" width="44" height="120" fill="#1e262c"/>
<rect x="304" y="398" width="28" height="40" fill="#3a4852"/><rect x="306" y="452" width="26" height="32" fill="#6a7a84"/>
<circle cx="292" cy="384" r="22" fill="#2a2a2c"/><circle cx="292" cy="384" r="12" fill="#5c5048"/>
<!-- window -->
<rect x="22" y="86" width="134" height="460" fill="#161e22"/>
<rect x="30" y="94" width="22" height="60" fill="#9fb0b4"/><rect x="58" y="100" width="44" height="60" fill="#c4ced0"/><rect x="108" y="112" width="18" height="50" fill="#a8b6ba"/><rect x="132" y="118" width="16" height="50" fill="#8fa0a6"/>
<rect x="30" y="164" width="22" height="66" fill="#b2c0c2"/><rect x="58" y="168" width="20" height="66" fill="#bcc8ca"/><rect x="82" y="168" width="20" height="66" fill="#aab8bc"/><rect x="108" y="170" width="18" height="66" fill="#a0aeb2"/><rect x="132" y="174" width="16" height="62" fill="#86979d"/>
<rect x="30" y="240" width="22" height="70" fill="#a6b4b6"/><rect x="58" y="242" width="20" height="70" fill="#b4c0c2"/><rect x="82" y="242" width="20" height="70" fill="#9eb0b4"/><rect x="108" y="244" width="18" height="66" fill="#92a2a8"/><rect x="132" y="246" width="14" height="62" fill="#74868c"/>
<rect x="38" y="330" width="22" height="64" fill="#8fa4aa"/><rect x="64" y="330" width="22" height="64" fill="#b6c4c4"/><rect x="90" y="330" width="20" height="64" fill="#a8b8b8"/><rect x="114" y="332" width="20" height="62" fill="#98a8aa"/>
<rect x="38" y="400" width="22" height="62" fill="#7c98a2"/><rect x="64" y="400" width="22" height="62" fill="#a4b8ba"/><rect x="90" y="400" width="20" height="62" fill="#b0bebe"/><rect x="114" y="402" width="20" height="60" fill="#8ea0a2"/>
<rect x="38" y="468" width="22" height="62" fill="#6a8690"/><rect x="64" y="468" width="22" height="62" fill="#98acae"/><rect x="90" y="468" width="20" height="62" fill="#a2b2b2"/><rect x="114" y="470" width="20" height="58" fill="#7c9092"/>
<rect x="22" y="314" width="134" height="12" fill="#1a2428"/>
<!-- top machinery -->
<rect x="262" y="24" width="80" height="100" fill="#1c1a1a"/>
<circle cx="296" cy="96" r="22" fill="#4a3028"/>
<path d="M250 30 L300 70 L390 30" fill="none" stroke="#5a5450" stroke-width="5"/>
<rect x="256" y="34" width="12" height="100" fill="#2e2420"/>
<!-- hanging lamp lower -->
<rect x="282" y="200" width="8" height="60" fill="#0c0e10"/>
<polygon points="272,262 302,262 316,340 256,340" fill="#0e1012"/>
<rect x="250" y="338" width="80" height="14" fill="#0a0c0e"/>
<rect x="276" y="288" width="24" height="44" fill="#c86428"/><rect x="282" y="296" width="10" height="28" fill="#ffc070"/>
<circle cx="292" cy="386" r="0" fill="none"/>
<!-- clock -->
<circle cx="440" cy="176" r="72" fill="#0d1114"/>
<circle cx="440" cy="176" r="62" fill="#3a2c24"/>
<circle cx="440" cy="176" r="52" fill="none" stroke="#e08a40" stroke-width="13" stroke-dasharray="24 9"/>
<circle cx="440" cy="176" r="52" fill="none" stroke="#b86428" stroke-width="13" stroke-opacity="0.45"/>
<circle cx="440" cy="176" r="44" fill="#3c322c"/>
<circle cx="440" cy="176" r="30" fill="#2a2420"/>
<path d="M440 176 L440 130 M440 176 L476 176 M412 148 L468 204 M468 148 L412 204" stroke="#14100e" stroke-width="3"/>
<!-- things on desk -->
<rect x="165" y="468" width="84" height="76" fill="#2e4a58"/><rect x="172" y="470" width="30" height="60" fill="#3f6274"/><rect x="205" y="466" width="44" height="50" fill="#1c2830"/>
<circle cx="262" cy="496" r="18" fill="#5a5454"/>
<rect x="130" y="452" width="26" height="40" fill="#8a6458"/><circle cx="130" cy="520" r="14" fill="#6a7478"/>
<rect x="368" y="478" width="50" height="58" fill="#1a2026"/><rect x="374" y="484" width="38" height="38" fill="#c49a64"/><rect x="380" y="490" width="26" height="26" fill="#ecd8a8"/>
<rect x="344" y="528" width="90" height="22" fill="#222a30"/>
<rect x="436" y="520" width="88" height="62" fill="#1d2226"/><rect x="446" y="528" width="58" height="16" fill="#b8b4a8"/>
<rect x="444" y="452" width="14" height="64" fill="#8a6a48"/><rect x="470" y="468" width="16" height="50" fill="#a85c28"/><rect x="494" y="456" width="14" height="62" fill="#7a3c20"/><rect x="516" y="476" width="14" height="42" fill="#9a7040"/>
<circle cx="500" cy="424" r="12" fill="#c8b090"/>
<rect x="296" y="514" width="24" height="26" fill="#6a4a3c"/>
<!-- desk tops -->
<polygon points="20,584 150,548 262,548 268,560 170,592 58,606 20,602" fill="#8a5a40"/>
<polygon points="40,584 150,556 240,556 160,584 70,596" fill="#a06c4a"/>
<polygon points="262,546 540,578 545,592 500,604 266,566" fill="#7a4e38"/>
<polygon points="300,552 440,566 438,574 300,562" fill="#966246"/>
<polygon points="54,574 120,566 132,582 66,590" fill="#222a30"/>
<!-- desk fronts -->
<polygon points="20,602 58,606 170,592 268,562 268,700 20,700" fill="#121a20"/>
<polygon points="60,610 240,574 244,612 64,650" fill="#1e2a34"/>
<polygon points="266,566 500,604 500,650 266,602" fill="#26343f"/>
<circle cx="306" cy="588" r="9" fill="#6c7478"/><circle cx="372" cy="602" r="9" fill="#6c7478"/><circle cx="450" cy="618" r="9" fill="#6c7478"/>
<polygon points="266,604 500,652 553,640 553,700 266,700" fill="#0d1216"/>
<polygon points="500,604 545,592 553,600 553,650 500,652" fill="#1a242c"/>
<rect x="432" y="640" width="14" height="60" fill="#5a4030"/>
<rect x="40" y="650" width="12" height="50" fill="#3a2c24"/>
<polygon points="80,670 200,650 230,700 90,700" fill="#10161a"/>
</g>
<!-- main lamp glow -->
<circle cx="303" cy="165" r="70" fill="#d05818" opacity="0.3" filter="url(#rb3)"/>
<circle cx="440" cy="176" r="90" fill="#d07028" opacity="0.16" filter="url(#rb3)"/>
<g filter="url(#rb1)">
<circle cx="303" cy="165" r="40" fill="#6a2c14"/>
<circle cx="303" cy="165" r="37" fill="url(#lampg2)"/>
<rect x="292" y="144" width="22" height="42" rx="7" fill="#ffb868"/>
</g>
</g>
</svg>

<svg id="sk" style="left:0;top:0" width="1280" height="720" viewBox="0 0 1280 720"><defs><filter id="skb" x="-20%" y="-20%" width="140%" height="140%"><feGaussianBlur stdDeviation="5"/></filter><clipPath id="skc"><rect x="486.3" y="180.2" width="593.7" height="430"/></clipPath></defs><g fill="none" stroke="#2c2c2c" stroke-linecap="round" stroke-linejoin="round" clip-path="url(#skc)">
<path d="M498.0 196.0 L600.0 212.0 L740.0 242.0 L742.0 272.0 L600.0 256.0 L498.0 244.0 Z" fill="#303030" fill-opacity="0.16" stroke="none" filter="url(#skb)"/>
<path d="M704.0 300.0 L820.0 296.0 L905.0 300.0 L905.0 392.0 L830.0 398.0 L704.0 372.0 Z" fill="#303030" fill-opacity="0.20" stroke="none" filter="url(#skb)"/>
<path d="M820.0 270.0 L912.0 268.0 L915.0 356.0 L820.0 360.0 Z" fill="#303030" fill-opacity="0.18" stroke="none" filter="url(#skb)"/>
<path d="M598.0 268.0 L704.0 268.0 L704.0 376.0 L598.0 376.0 Z" fill="#303030" fill-opacity="0.07" stroke="none" filter="url(#skb)"/>
<path d="M496.0 376.0 L700.0 366.0 L900.0 392.0 L955.0 400.0 L800.0 460.0 L700.0 458.0 L600.0 440.0 L520.0 412.0 L494.0 398.0 Z" fill="#303030" fill-opacity="0.07" stroke="none" filter="url(#skb)"/>
<path d="M860.0 186.0 L940.0 186.0 L940.0 328.0 L860.0 328.0 Z" fill="#303030" fill-opacity="0.08" stroke="none" filter="url(#skb)"/>
<path d="M745.0 250.0 L846.0 250.0 L846.0 300.0 L745.0 300.0 Z" fill="#303030" fill-opacity="0.10" stroke="none" filter="url(#skb)"/>
<path d="M499.3 192.2 Q548.5 200.3 567.2 205.0 Q586.0 209.7 614.1 215.2 Q642.2 220.6 664.1 225.3 L686.0 230.0" stroke-width="3.90" stroke-opacity="0.67"/>
<path d="M496.9 199.5 Q532.9 201.9 556.3 206.6 Q579.8 211.2 611.0 217.5 Q642.2 223.8 664.1 228.0 L686.0 232.3" stroke-width="2.93" stroke-opacity="0.56"/>
<path d="M500.1 195.6 Q564.1 205.0 595.4 211.2 Q626.6 217.5 656.3 222.6 L686.0 227.7" stroke-width="1.95" stroke-opacity="0.56"/>
<path d="M540.7 191.7 Q579.8 200.3 603.2 205.8 Q626.6 211.2 656.3 218.4 L686.0 225.6" stroke-width="1.22" stroke-opacity="0.56"/>
<path d="M534.4 195.6 Q551.6 194.1 581.3 201.1 Q611.0 208.1 634.4 212.8 L657.9 217.5" stroke-width="0.98" stroke-opacity="0.45"/>
<path d="M496.9 242.5 Q548.5 248.8 579.8 252.7 Q611.0 256.6 648.5 260.9 L686.0 265.2" stroke-width="4.15" stroke-opacity="0.69"/>
<path d="M500.1 244.8 Q579.8 253.4 632.9 260.5 L686.0 267.5" stroke-width="1.95" stroke-opacity="0.56"/>
<path d="M548.5 233.1 Q611.0 239.4 648.5 244.1 L686.0 248.8" stroke-width="1.95" stroke-opacity="0.62"/>
<path d="M546.9 236.6 Q611.0 244.1 648.5 248.8 L686.0 253.4" stroke-width="1.34" stroke-opacity="0.50"/>
<path d="M553.2 230.0 Q626.6 238.1 656.3 241.9 L686.0 245.6" stroke-width="0.98" stroke-opacity="0.45"/>
<path d="M496.6 231.6 L501.6 203.4 L505.5 231.6" stroke-width="2.68" stroke-opacity="0.45"/>
<path d="M509.4 245.6 L511.8 205.0 L517.2 203.4 L523.5 247.2" stroke-width="2.93" stroke-opacity="0.47"/>
<path d="M525.1 242.5 L531.3 208.1 L534.8 247.2 L539.1 208.1 L541.0 245.6" stroke-width="3.17" stroke-opacity="0.47"/>
<path d="M544.6 246.4 L545.7 206.6 L547.2 247.2" stroke-width="2.68" stroke-opacity="0.50"/>
<path d="M554.5 206.6 L554.3 248.8" stroke-width="1.83" stroke-opacity="0.56"/>
<path d="M565.1 209.7 L564.4 248.8" stroke-width="1.83" stroke-opacity="0.56"/>
<path d="M571.2 211.2 L571.0 250.3" stroke-width="1.83" stroke-opacity="0.56"/>
<path d="M577.6 212.0 L578.2 252.2" stroke-width="1.83" stroke-opacity="0.56"/>
<path d="M585.4 213.6 L585.9 252.7" stroke-width="1.83" stroke-opacity="0.56"/>
<path d="M593.3 215.2 L593.3 253.4" stroke-width="1.83" stroke-opacity="0.56"/>
<path d="M601.5 216.7 L602.0 254.2" stroke-width="1.83" stroke-opacity="0.56"/>
<path d="M613.7 222.2 L613.8 262.0" stroke-width="1.83" stroke-opacity="0.56"/>
<path d="M619.0 223.8 L619.4 258.1" stroke-width="1.83" stroke-opacity="0.56"/>
<path d="M623.6 225.3 L623.4 258.1" stroke-width="1.83" stroke-opacity="0.56"/>
<path d="M631.9 226.1 L630.7 258.9" stroke-width="1.83" stroke-opacity="0.56"/>
<path d="M642.7 228.8 L642.0 260.0" stroke-width="1.83" stroke-opacity="0.56"/>
<path d="M648.1 230.0 L648.0 258.1" stroke-width="1.83" stroke-opacity="0.56"/>
<path d="M656.1 231.9 L656.7 261.6" stroke-width="1.83" stroke-opacity="0.56"/>
<path d="M665.3 233.9 L665.8 262.8" stroke-width="1.83" stroke-opacity="0.56"/>
<path d="M676.8 236.6 L676.5 263.1" stroke-width="1.83" stroke-opacity="0.56"/>
<path d="M681.4 237.8 L680.8 261.2" stroke-width="1.83" stroke-opacity="0.56"/>
<path d="M567.2 227.2 Q569.4 252.9 570.7 240.8 L571.9 228.8" stroke-width="1.10" stroke-opacity="0.45"/>
<path d="M574.3 227.9 Q576.5 253.4 577.7 241.4 L579.0 229.5" stroke-width="1.10" stroke-opacity="0.45"/>
<path d="M582.1 228.7 Q584.3 253.9 585.5 242.1 L586.8 230.2" stroke-width="1.10" stroke-opacity="0.45"/>
<path d="M604.8 230.9 Q606.9 255.5 608.2 244.0 L609.4 232.5" stroke-width="1.10" stroke-opacity="0.45"/>
<path d="M609.4 231.4 Q611.6 255.8 612.9 244.4 L614.1 233.0" stroke-width="1.10" stroke-opacity="0.45"/>
<path d="M636.0 234.1 Q638.2 257.7 639.4 246.7 L640.7 235.6" stroke-width="1.10" stroke-opacity="0.45"/>
<path d="M661.0 236.6 Q663.2 259.4 664.4 248.8 L665.7 238.1" stroke-width="1.10" stroke-opacity="0.45"/>
<path d="M670.4 237.5 Q672.6 260.1 673.8 249.6 L675.1 239.1" stroke-width="1.10" stroke-opacity="0.45"/>
<path d="M504.8 253.4 Q548.5 259.7 568.8 262.7 L589.1 265.6" stroke-width="4.39" stroke-opacity="0.67"/>
<path d="M512.6 251.9 Q551.6 258.1 568.8 260.9 L586.0 263.6" stroke-width="2.93" stroke-opacity="0.50"/>
<path d="M514.1 258.1 Q551.6 262.0 569.6 264.8 L587.6 267.5" stroke-width="1.95" stroke-opacity="0.45"/>
<path d="M501.3 247.2 L501.0 336.2 L500.7 398.8" stroke-width="1.95" stroke-opacity="0.50"/>
<path d="M503.2 248.8 L502.9 336.2 L502.6 398.8" stroke-width="1.46" stroke-opacity="0.45"/>
<path d="M508.2 253.4 L507.9 336.2 L507.6 398.8" stroke-width="3.17" stroke-opacity="0.67"/>
<path d="M510.2 253.4 L509.9 336.2 L509.6 398.8" stroke-width="1.71" stroke-opacity="0.56"/>
<path d="M513.5 255.0 L513.2 336.2 L512.9 398.8" stroke-width="1.22" stroke-opacity="0.39"/>
<path d="M550.1 258.1 L549.1 356.6" stroke-width="1.95" stroke-opacity="0.56"/>
<path d="M554.1 258.1 L553.2 356.6" stroke-width="2.93" stroke-opacity="0.67"/>
<path d="M585.4 255.0 L584.8 336.2 L584.4 389.4" stroke-width="2.20" stroke-opacity="0.56"/>
<path d="M589.1 255.0 L588.5 336.2 L588.2 389.4" stroke-width="1.71" stroke-opacity="0.50"/>
<path d="M595.7 255.0 L595.1 336.2 L594.8 389.4" stroke-width="3.17" stroke-opacity="0.69"/>
<path d="M567.2 275.3 L582.9 276.9" stroke-width="1.46" stroke-opacity="0.45"/>
<path d="M498.6 202.7 L499.6 231.4" stroke-width="1.85" stroke-opacity="0.49"/>
<path d="M507.0 202.9 L507.6 246.1" stroke-width="1.76" stroke-opacity="0.49"/>
<path d="M514.9 204.4 L515.3 246.7" stroke-width="2.66" stroke-opacity="0.41"/>
<path d="M520.2 205.6 L519.8 247.2" stroke-width="1.51" stroke-opacity="0.50"/>
<path d="M528.3 206.7 L528.5 246.7" stroke-width="2.31" stroke-opacity="0.49"/>
<path d="M533.0 208.0 L533.4 248.3" stroke-width="2.04" stroke-opacity="0.50"/>
<path d="M536.9 208.6 L537.8 247.6" stroke-width="2.47" stroke-opacity="0.44"/>
<path d="M542.4 207.8 L541.8 246.3" stroke-width="1.67" stroke-opacity="0.41"/>
<path d="M549.4 208.8 L549.5 247.3" stroke-width="1.94" stroke-opacity="0.54"/>
<path d="M558.8 209.6 L559.5 249.7" stroke-width="2.46" stroke-opacity="0.54"/>
<path d="M568.2 211.0 L568.3 250.5" stroke-width="2.63" stroke-opacity="0.42"/>
<path d="M581.1 212.9 L581.2 251.8" stroke-width="2.18" stroke-opacity="0.44"/>
<path d="M589.1 215.0 L589.7 253.3" stroke-width="2.63" stroke-opacity="0.51"/>
<path d="M597.7 217.0 L598.0 252.6" stroke-width="2.56" stroke-opacity="0.52"/>
<path d="M606.9 220.6 L606.1 256.3" stroke-width="1.59" stroke-opacity="0.50"/>
<path d="M625.9 225.0 L626.2 257.3" stroke-width="1.88" stroke-opacity="0.40"/>
<path d="M635.2 226.8 L635.4 258.6" stroke-width="1.50" stroke-opacity="0.54"/>
<path d="M651.8 230.4 L651.2 260.1" stroke-width="1.91" stroke-opacity="0.41"/>
<path d="M672.5 236.7 L671.9 262.8" stroke-width="1.57" stroke-opacity="0.41"/>
<path d="M497.7 230.0 L500.8 205.0 L504.4 230.0 L507.9 205.8 L512.6 245.6 L518.0 205.0 L522.2 246.4" stroke-width="1.95" stroke-opacity="0.45"/>
<path d="M526.6 245.6 L530.5 209.7 L533.7 245.6 L538.3 209.7 L542.2 246.4" stroke-width="1.95" stroke-opacity="0.45"/>
<path d="M498.5 194.1 Q564.1 203.4 595.4 209.7 Q626.6 215.9 656.3 221.4 L686.0 226.9" stroke-width="2.68" stroke-opacity="0.50"/>
<path d="M497.7 244.1 Q564.1 251.1 595.4 255.0 Q626.6 258.9 656.3 262.6 L686.0 266.2" stroke-width="2.68" stroke-opacity="0.50"/>
<ellipse cx="651.0" cy="321.0" rx="52.0" ry="54.0" stroke-width="1.60" stroke-opacity="0.50" transform="rotate(20.0 651.0 321.0)"/>
<ellipse cx="652.0" cy="320.0" rx="49.0" ry="52.0" stroke-width="1.40" stroke-opacity="0.45" transform="rotate(-18.0 652.0 320.0)"/>
<ellipse cx="650.0" cy="322.0" rx="54.0" ry="56.0" stroke-width="1.20" stroke-opacity="0.40" transform="rotate(-30.0 650.0 322.0)"/>
<path d="M504.8 248.8 L504.3 336.2 L504.0 392.5" stroke-width="2.20" stroke-opacity="0.50"/>
<path d="M509.1 253.4 L508.7 336.2 L508.3 392.5" stroke-width="2.44" stroke-opacity="0.56"/>
<path d="M551.6 258.1 L551.2 336.2 L550.8 392.5" stroke-width="2.20" stroke-opacity="0.50"/>
<path d="M587.2 255.0 L586.8 336.2 L586.5 392.5" stroke-width="2.20" stroke-opacity="0.50"/>
<path d="M593.8 255.0 L593.3 336.2 L593.0 392.5" stroke-width="2.44" stroke-opacity="0.56"/>
<path d="M704.4 180.0 L705.1 242.5 L704.4 292.0 L704.1 368.1" stroke-width="3.42" stroke-opacity="0.69"/>
<path d="M706.0 180.0 L705.4 292.0 L706.3 368.1" stroke-width="1.46" stroke-opacity="0.45"/>
<path d="M686.0 208.9 Q725.1 205.0 743.0 203.0 L761.0 201.1" stroke-width="1.71" stroke-opacity="0.56"/>
<path d="M686.0 213.6 Q732.9 208.9 754.8 205.4 L776.6 201.9" stroke-width="2.93" stroke-opacity="0.56"/>
<path d="M709.4 218.3 Q740.7 213.6 754.0 212.0 L767.2 210.5" stroke-width="1.95" stroke-opacity="0.50"/>
<path d="M709.4 208.9 Q748.5 205.0 761.0 204.2 L773.5 203.4" stroke-width="1.46" stroke-opacity="0.45"/>
<path d="M746.9 216.7 L767.2 213.1" stroke-width="1.22" stroke-opacity="0.45"/>
<path d="M686.0 230.0 Q717.2 237.8 729.0 240.2 L740.7 242.5" stroke-width="3.66" stroke-opacity="0.67"/>
<path d="M686.0 232.3 Q717.2 240.2 729.0 242.9 L740.7 245.6" stroke-width="2.44" stroke-opacity="0.56"/>
<path d="M686.0 234.7 Q714.1 241.7 726.6 244.8 L739.1 248.0" stroke-width="1.71" stroke-opacity="0.50"/>
<path d="M686.0 248.8 L739.1 258.1" stroke-width="1.46" stroke-opacity="0.50"/>
<path d="M686.0 265.2 Q717.2 270.6 729.0 272.2 L740.7 273.8" stroke-width="3.42" stroke-opacity="0.67"/>
<path d="M686.0 258.1 L739.1 267.5" stroke-width="1.71" stroke-opacity="0.50"/>
<path d="M686.0 273.8 L740.7 281.6" stroke-width="1.95" stroke-opacity="0.56"/>
<path d="M686.0 280.0 L739.1 287.8" stroke-width="1.46" stroke-opacity="0.45"/>
<path d="M691.5 239.4 L690.5 267.5" stroke-width="1.46" stroke-opacity="0.50"/>
<path d="M700.8 241.2 L699.9 267.5" stroke-width="1.46" stroke-opacity="0.50"/>
<path d="M714.9 244.1 L714.0 272.2" stroke-width="1.46" stroke-opacity="0.50"/>
<path d="M725.8 246.4 L724.9 275.3" stroke-width="1.46" stroke-opacity="0.50"/>
<path d="M741.0 239.4 L741.6 292.0 L741.0 325.9" stroke-width="3.66" stroke-opacity="0.69"/>
<path d="M744.1 242.5 L744.4 292.0" stroke-width="1.95" stroke-opacity="0.56"/>
<path d="M748.8 236.2 L749.4 292.0" stroke-width="2.44" stroke-opacity="0.28"/>
<path d="M754.8 247.2 L757.9 255.0" stroke-width="1.71" stroke-opacity="0.50"/>
<path d="M743.8 238.6 Q751.6 233.9 781.3 228.0 Q811.0 222.2 836.0 218.7 L861.0 215.2" stroke-width="1.59" stroke-opacity="0.62"/>
<path d="M761.0 232.8 Q811.0 226.9 836.8 224.1 L862.6 221.4" stroke-width="2.68" stroke-opacity="0.56"/>
<path d="M786.0 232.8 Q826.6 229.7 841.5 229.5 L856.3 229.2" stroke-width="1.71" stroke-opacity="0.50"/>
<path d="M861.0 222.2 L886.0 215.9" stroke-width="3.17" stroke-opacity="0.39"/>
<path d="M870.4 219.1 L886.0 213.6" stroke-width="2.44" stroke-opacity="0.39"/>
<path d="M753.2 256.6 Q795.4 253.1 818.8 252.1 L842.2 251.1" stroke-width="3.90" stroke-opacity="0.90"/>
<path d="M753.2 258.9 L842.2 254.2" stroke-width="3.66" stroke-opacity="0.34"/>
<path d="M754.8 262.8 L842.2 258.9" stroke-width="4.15" stroke-opacity="0.25"/>
<path d="M844.6 237.8 L845.1 292.0 L844.4 304.1" stroke-width="3.66" stroke-opacity="0.73"/>
<path d="M842.2 242.5 L842.9 292.0" stroke-width="1.46" stroke-opacity="0.45"/>
<path d="M846.9 253.4 L879.8 255.0" stroke-width="1.71" stroke-opacity="0.34"/>
<path d="M870.4 248.8 L886.0 247.2" stroke-width="2.68" stroke-opacity="0.34"/>
<path d="M865.7 190.9 L866.0 292.0 L865.1 357.2" stroke-width="3.90" stroke-opacity="0.76"/>
<path d="M868.2 194.1 L867.9 292.0" stroke-width="1.71" stroke-opacity="0.50"/>
<path d="M861.0 195.6 L886.0 192.8" stroke-width="3.17" stroke-opacity="0.56"/>
<path d="M870.4 189.4 L886.0 186.2" stroke-width="1.95" stroke-opacity="0.39"/>
<path d="M864.1 194.1 L873.5 184.7" stroke-width="1.22" stroke-opacity="0.39"/>
<path d="M789.1 266.2 L821.9 265.9" stroke-width="2.93" stroke-opacity="0.67"/>
<path d="M795.4 269.1 L820.4 268.3" stroke-width="1.95" stroke-opacity="0.45"/>
<path d="M793.8 267.5 L794.4 292.0" stroke-width="2.44" stroke-opacity="0.62"/>
<path d="M819.6 261.2 L820.1 292.0" stroke-width="2.44" stroke-opacity="0.62"/>
<path d="M748.5 277.2 Q767.2 273.8 775.1 274.1 L782.9 274.4" stroke-width="3.66" stroke-opacity="0.62"/>
<path d="M751.6 280.0 L779.8 277.7" stroke-width="2.44" stroke-opacity="0.45"/>
<path d="M781.0 273.8 L780.7 292.0" stroke-width="2.44" stroke-opacity="0.67"/>
<path d="M806.3 280.0 L834.4 277.2" stroke-width="1.95" stroke-opacity="0.56"/>
<path d="M811.0 282.3 L832.9 280.0" stroke-width="1.46" stroke-opacity="0.45"/>
<path d="M811.8 278.4 L811.9 292.0" stroke-width="1.71" stroke-opacity="0.50"/>
<path d="M831.3 280.0 L831.9 292.0" stroke-width="1.95" stroke-opacity="0.39"/>
<path d="M776.6 287.8 L789.1 287.8" stroke-width="1.95" stroke-opacity="0.50"/>
<path d="M825.4 195.5 L831.3 194.8" stroke-width="1.22" stroke-opacity="0.56"/>
<path d="M686.0 256.6 Q717.2 262.8 728.2 265.2 L739.1 267.5" stroke-width="1.71" stroke-opacity="0.45"/>
<path d="M892.2 183.1 L892.9 292.0 L893.2 321.4" stroke-width="3.17" stroke-opacity="0.56"/>
<path d="M896.0 184.7 L895.7 292.0 L895.7 321.4" stroke-width="2.44" stroke-opacity="0.62"/>
<path d="M888.2 203.4 L888.8 292.0" stroke-width="1.46" stroke-opacity="0.39"/>
<path d="M922.7 186.2 L922.2 292.0 L921.9 326.9" stroke-width="3.66" stroke-opacity="0.34"/>
<path d="M926.9 184.7 L926.3 292.0 L926.0 326.9" stroke-width="2.93" stroke-opacity="0.45"/>
<path d="M930.7 186.2 L930.4 292.0 L929.8 328.4" stroke-width="3.66" stroke-opacity="0.69"/>
<path d="M934.8 187.8 L934.4 292.0 L934.8 326.1" stroke-width="2.68" stroke-opacity="0.39"/>
<path d="M886.0 187.8 Q917.2 186.9 934.4 186.2 L951.6 185.5" stroke-width="1.46" stroke-opacity="0.50"/>
<path d="M886.0 192.5 L929.8 189.1" stroke-width="3.17" stroke-opacity="0.50"/>
<path d="M886.0 190.6 L923.5 187.8" stroke-width="1.95" stroke-opacity="0.45"/>
<path d="M909.4 190.9 L925.1 206.6" stroke-width="1.71" stroke-opacity="0.34"/>
<path d="M914.1 189.4 L931.3 205.0" stroke-width="1.46" stroke-opacity="0.34"/>
<path d="M886.0 211.2 L939.1 209.7" stroke-width="2.68" stroke-opacity="0.50"/>
<path d="M886.0 215.9 L926.6 211.2" stroke-width="3.17" stroke-opacity="0.45"/>
<path d="M886.0 208.1 L920.4 203.4" stroke-width="2.44" stroke-opacity="0.39"/>
<path d="M901.6 200.3 L917.2 197.2" stroke-width="1.46" stroke-opacity="0.39"/>
<path d="M886.0 245.6 L939.1 240.3" stroke-width="2.68" stroke-opacity="0.45"/>
<path d="M886.0 248.8 L920.4 242.5" stroke-width="2.93" stroke-opacity="0.39"/>
<path d="M886.0 267.5 Q948.5 264.4 984.4 262.8 L1020.4 261.2" stroke-width="2.20" stroke-opacity="0.56"/>
<path d="M886.0 269.8 L932.9 267.5" stroke-width="3.17" stroke-opacity="0.50"/>
<path d="M936.0 262.8 Q1011.0 253.4 1044.6 251.1 L1078.2 248.8" stroke-width="1.71" stroke-opacity="0.50"/>
<path d="M939.1 266.2 Q1011.0 258.1 1042.2 257.3 L1073.5 256.6" stroke-width="1.95" stroke-opacity="0.45"/>
<path d="M964.1 258.1 Q1026.6 254.2 1048.5 255.0 L1070.4 255.8" stroke-width="1.22" stroke-opacity="0.34"/>
<path d="M958.2 181.6 L958.8 242.5 L956.3 292.0 L955.4 351.9 L954.1 403.4" stroke-width="4.15" stroke-opacity="0.84"/>
<path d="M960.4 182.2 L960.7 242.5 L959.1 292.0 L958.8 351.9 L957.2 403.4" stroke-width="2.93" stroke-opacity="0.67"/>
<path d="M964.1 184.7 Q967.2 205.0 965.5 226.9 Q963.8 248.8 962.4 255.0 L961.0 261.2" stroke-width="1.46" stroke-opacity="0.50"/>
<path d="M956.0 184.7 L955.4 292.0 L952.2 351.9 L951.6 403.4" stroke-width="1.71" stroke-opacity="0.39"/>
<path d="M531.3 296.2 L586.0 296.2" stroke-width="1.22" stroke-opacity="0.50"/>
<path d="M532.9 298.1 L573.5 295.6" stroke-width="0.98" stroke-opacity="0.39"/>
<path d="M539.1 303.3 L542.6 304.8 L544.1 321.2 L541.0 330.9 L537.6 330.6 L539.8 319.7 Z" fill="#555" fill-opacity="0.5" stroke="none"/>
<path d="M556.3 301.7 L561.0 304.1 L563.8 313.4 L559.4 332.2 L557.1 330.9 L559.4 315.0 Z" fill="#555" fill-opacity="0.5" stroke="none"/>
<path d="M512.6 349.4 Q548.5 353.8 565.7 353.1 L582.9 352.5" stroke-width="3.66" stroke-opacity="0.62"/>
<path d="M514.1 351.7 Q548.5 355.6 564.1 355.2 L579.8 354.8" stroke-width="2.44" stroke-opacity="0.45"/>
<path d="M540.7 349.7 L579.1 344.7" stroke-width="1.46" stroke-opacity="0.45"/>
<path d="M540.7 360.6 L570.4 358.8" stroke-width="1.71" stroke-opacity="0.39"/>
<path d="M549.3 336.9 L550.4 357.2" stroke-width="3.90" stroke-opacity="0.78"/>
<path d="M517.2 374.4 Q548.5 374.4 565.7 372.8 L582.9 371.2" stroke-width="4.39" stroke-opacity="0.39"/>
<path d="M501.6 379.4 L579.8 377.5" stroke-width="3.17" stroke-opacity="0.39"/>
<path d="M540.7 375.6 L579.8 371.2" stroke-width="2.44" stroke-opacity="0.50"/>
<path d="M493.8 393.1 Q579.8 386.9 632.9 382.2 Q686.0 377.5 693.8 376.6 L701.6 375.6" stroke-width="4.39" stroke-opacity="0.67"/>
<path d="M496.9 395.5 Q586.0 390.0 636.0 385.7 Q686.0 381.4 695.4 380.4 L704.8 379.4" stroke-width="3.17" stroke-opacity="0.56"/>
<path d="M501.6 398.1 Q595.4 393.9 640.7 392.0 Q686.0 390.0 703.2 388.6 L720.4 387.2" stroke-width="3.66" stroke-opacity="0.62"/>
<path d="M511.0 390.8 Q586.0 383.8 614.1 381.0 L642.2 378.3" stroke-width="2.44" stroke-opacity="0.50"/>
<path d="M492.2 393.9 L532.9 391.6" stroke-width="1.71" stroke-opacity="0.45"/>
<path d="M586.0 399.4 Q626.6 397.8 656.3 395.1 Q686.0 392.3 701.6 390.4 L717.2 388.4" stroke-width="1.95" stroke-opacity="0.50"/>
<ellipse cx="651.0" cy="321.0" rx="53.0" ry="55.0" stroke-width="1.80" stroke-opacity="0.60" transform="rotate(0.0 651.0 321.0)"/>
<ellipse cx="650.0" cy="320.0" rx="50.0" ry="54.0" stroke-width="1.50" stroke-opacity="0.55" transform="rotate(8.0 650.0 320.0)"/>
<ellipse cx="652.0" cy="322.0" rx="55.0" ry="53.0" stroke-width="1.40" stroke-opacity="0.50" transform="rotate(-6.0 652.0 322.0)"/>
<ellipse cx="651.0" cy="320.0" rx="47.0" ry="51.0" stroke-width="1.40" stroke-opacity="0.50" transform="rotate(0.0 651.0 320.0)"/>
<ellipse cx="650.0" cy="322.0" rx="56.0" ry="57.0" stroke-width="1.20" stroke-opacity="0.40" transform="rotate(12.0 650.0 322.0)"/>
<ellipse cx="653.0" cy="321.0" rx="51.0" ry="50.0" stroke-width="1.20" stroke-opacity="0.45" transform="rotate(-12.0 653.0 321.0)"/>
<ellipse cx="651.0" cy="322.0" rx="44.0" ry="48.0" stroke-width="1.10" stroke-opacity="0.40" transform="rotate(4.0 651.0 322.0)"/>
<rect x="598" y="266" width="106" height="110" rx="44" stroke-width="1.6" stroke-opacity="0.5"/>
<rect x="601" y="270" width="100" height="104" rx="38" stroke-width="1.3" stroke-opacity="0.45"/>
<rect x="604" y="268" width="98" height="110" rx="46" stroke-width="1.2" stroke-opacity="0.4"/>
<rect x="596" y="272" width="108" height="102" rx="40" stroke-width="1.1" stroke-opacity="0.4"/>
<path d="M604.8 290.0 Q595.4 321.2 598.5 338.4 Q601.6 355.6 614.1 363.4 Q626.6 371.2 642.2 372.8 L657.9 374.4" stroke-width="1.71" stroke-opacity="0.56"/>
<path d="M611.0 290.0 Q602.4 321.2 605.9 336.9 Q609.4 352.5 621.9 360.3 Q634.4 368.1 650.1 369.7 L665.7 371.2" stroke-width="1.46" stroke-opacity="0.56"/>
<path d="M598.5 290.0 Q593.8 336.9 599.3 350.9 Q604.8 365.0 619.6 371.2 Q634.4 377.5 654.0 377.5 L673.5 377.5" stroke-width="1.46" stroke-opacity="0.50"/>
<path d="M654.0 290.0 L654.4 371.2" stroke-width="3.66" stroke-opacity="0.67"/>
<path d="M657.2 290.0 L657.9 341.6" stroke-width="1.71" stroke-opacity="0.50"/>
<path d="M659.4 290.0 L659.8 371.2" stroke-width="1.22" stroke-opacity="0.39"/>
<path d="M607.9 318.9 Q642.2 321.2 664.1 322.7 L686.0 324.1" stroke-width="3.17" stroke-opacity="0.56"/>
<path d="M611.0 321.2 Q650.1 323.6 668.0 325.5 L686.0 327.5" stroke-width="1.46" stroke-opacity="0.45"/>
<path d="M623.5 290.0 L655.5 323.6 L686.0 354.1" stroke-width="1.71" stroke-opacity="0.62"/>
<path d="M628.2 290.0 L657.9 323.6 L686.0 349.4" stroke-width="1.46" stroke-opacity="0.50"/>
<path d="M686.0 290.0 L655.5 323.6 L634.4 345.0" stroke-width="1.71" stroke-opacity="0.62"/>
<path d="M682.9 296.2 L653.2 325.9 L631.3 344.7" stroke-width="1.22" stroke-opacity="0.45"/>
<path d="M607.9 347.8 Q642.2 349.4 664.1 350.0 L686.0 350.6" stroke-width="4.15" stroke-opacity="0.67"/>
<path d="M611.0 345.0 Q657.9 346.6 671.9 347.3 L686.0 348.1" stroke-width="2.44" stroke-opacity="0.50"/>
<path d="M614.1 352.5 L686.0 354.1" stroke-width="1.95" stroke-opacity="0.39"/>
<path d="M642.2 341.6 L686.0 344.7" stroke-width="1.46" stroke-opacity="0.39"/>
<path d="M701.0 330.6 L701.3 365.0" stroke-width="2.44" stroke-opacity="0.45"/>
<path d="M689.1 290.0 Q696.9 313.4 696.2 325.2 Q695.4 336.9 690.7 347.8 L686.0 358.8" stroke-width="1.95" stroke-opacity="0.56"/>
<path d="M696.9 290.0 Q701.6 321.2 698.5 335.3 Q695.4 349.4 690.7 357.2 L686.0 365.0" stroke-width="1.46" stroke-opacity="0.50"/>
<path d="M709.4 296.2 L737.6 299.4" stroke-width="3.66" stroke-opacity="0.62"/>
<path d="M709.4 321.2 L739.1 319.7" stroke-width="2.93" stroke-opacity="0.56"/>
<path d="M711.0 299.4 L737.6 301.7 L737.6 320.5 L711.0 320.5 Z" fill="#3a3a3a" fill-opacity="0.28" stroke="none"/>
<path d="M713.3 300.9 L713.7 319.7" stroke-width="1.95" stroke-opacity="0.34"/>
<path d="M718.0 300.9 L718.3 319.7" stroke-width="1.95" stroke-opacity="0.34"/>
<path d="M723.5 300.9 L723.8 319.7" stroke-width="1.95" stroke-opacity="0.34"/>
<path d="M728.2 300.9 L728.5 319.7" stroke-width="1.95" stroke-opacity="0.34"/>
<path d="M732.9 300.9 L733.2 319.7" stroke-width="1.95" stroke-opacity="0.34"/>
<path d="M737.6 299.4 L738.2 321.2" stroke-width="1.95" stroke-opacity="0.45"/>
<path d="M709.4 293.1 L709.4 325.9" stroke-width="2.44" stroke-opacity="0.50"/>
<path d="M753.2 296.2 L786.0 295.6" stroke-width="2.68" stroke-opacity="0.62"/>
<path d="M754.8 310.3 L786.0 311.9" stroke-width="2.93" stroke-opacity="0.56"/>
<path d="M756.3 315.0 L786.0 315.8" stroke-width="1.71" stroke-opacity="0.45"/>
<path d="M754.8 290.0 L755.4 315.0" stroke-width="2.93" stroke-opacity="0.56"/>
<path d="M786.0 290.0 L786.9 315.0" stroke-width="3.66" stroke-opacity="0.62"/>
<path d="M780.4 290.0 L780.7 302.5" stroke-width="2.44" stroke-opacity="0.67"/>
<path d="M748.2 290.0 L749.1 316.6" stroke-width="3.17" stroke-opacity="0.34"/>
<path d="M793.8 290.0 L795.4 310.3" stroke-width="2.68" stroke-opacity="0.56"/>
<path d="M795.4 308.8 L820.4 307.2" stroke-width="2.20" stroke-opacity="0.45"/>
<path d="M811.8 290.0 L812.6 305.6" stroke-width="1.71" stroke-opacity="0.45"/>
<path d="M820.4 290.0 L821.3 308.8" stroke-width="2.20" stroke-opacity="0.50"/>
<path d="M807.9 300.9 L821.9 300.3" stroke-width="1.46" stroke-opacity="0.45"/>
<path d="M832.9 290.0 L833.5 302.5" stroke-width="2.93" stroke-opacity="0.34"/>
<path d="M707.9 320.6 L764.1 319.1 L817.2 321.2 L818.8 330.9 L814.1 336.9 L764.1 335.6 L709.4 330.9 Z" fill="#2c2c2c" fill-opacity="0.55" stroke="none"/>
<path d="M709.4 330.9 L764.1 335.6 L814.1 336.9 L811.0 342.5 L732.9 341.6 L711.0 336.9 Z" fill="#2c2c2c" fill-opacity="0.3" stroke="none"/>
<path d="M707.9 323.6 Q764.1 323.6 790.7 325.5 L817.2 327.5" stroke-width="4.39" stroke-opacity="0.56"/>
<path d="M709.4 329.1 Q764.1 330.9 789.9 333.1 L815.7 335.3" stroke-width="3.66" stroke-opacity="0.56"/>
<path d="M732.9 336.9 L804.8 338.8" stroke-width="2.44" stroke-opacity="0.39"/>
<path d="M722.2 344.7 L782.9 346.2" stroke-width="3.17" stroke-opacity="0.45"/>
<path d="M723.5 349.4 L782.9 351.2" stroke-width="1.95" stroke-opacity="0.34"/>
<path d="M724.4 343.9 L724.9 374.4" stroke-width="2.68" stroke-opacity="0.50"/>
<path d="M728.5 343.1 L729.0 371.2" stroke-width="4.15" stroke-opacity="0.67"/>
<path d="M752.4 348.1 L752.9 368.1" stroke-width="3.17" stroke-opacity="0.56"/>
<path d="M756.0 348.1 L756.5 365.0" stroke-width="1.95" stroke-opacity="0.39"/>
<path d="M772.2 346.2 L772.7 382.2" stroke-width="3.17" stroke-opacity="0.62"/>
<path d="M777.6 347.0 L778.0 382.2" stroke-width="2.20" stroke-opacity="0.45"/>
<path d="M801.9 336.9 L802.4 383.8" stroke-width="2.20" stroke-opacity="0.67"/>
<path d="M807.1 338.4 L807.6 387.7" stroke-width="3.17" stroke-opacity="0.78"/>
<path d="M812.9 340.0 L813.3 386.9" stroke-width="1.95" stroke-opacity="0.62"/>
<path d="M729.8 346.2 L771.9 348.1 L771.9 368.1 L729.8 365.0 Z" fill="#2c2c2c" fill-opacity="0.22" stroke="none"/>
<path d="M736.0 347.8 L736.3 363.4" stroke-width="1.71" stroke-opacity="0.34"/>
<path d="M740.7 347.8 L741.0 363.4" stroke-width="1.71" stroke-opacity="0.34"/>
<path d="M745.4 347.8 L745.7 363.4" stroke-width="1.71" stroke-opacity="0.34"/>
<path d="M779.8 368.1 L801.6 368.9" stroke-width="1.95" stroke-opacity="0.39"/>
<path d="M779.8 377.5 L801.6 380.6" stroke-width="1.95" stroke-opacity="0.45"/>
<path d="M692.2 370.0 L723.5 368.1 L773.5 377.5 L826.6 383.8 L870.4 390.0 L870.4 394.7 L811.0 390.0 L748.5 382.2 L692.2 375.6 Z" fill="#2a2a2a" fill-opacity="0.5" stroke="none"/>
<path d="M679.8 372.5 Q732.9 371.2 764.1 376.7 Q795.4 382.2 818.8 385.3 L842.2 388.4" stroke-width="4.39" stroke-opacity="0.62"/>
<path d="M686.0 377.5 L729.8 379.8" stroke-width="3.66" stroke-opacity="0.50"/>
<path d="M686.0 386.9 L729.8 381.4" stroke-width="3.17" stroke-opacity="0.56"/>
<path d="M686.0 390.0 L732.9 383.8" stroke-width="1.95" stroke-opacity="0.45"/>
<path d="M732.9 402.0 Q773.5 390.0 792.2 390.0 L811.0 390.0" stroke-width="2.44" stroke-opacity="0.50"/>
<path d="M709.4 402.0 L764.1 386.9" stroke-width="1.95" stroke-opacity="0.45"/>
<path d="M754.8 402.0 L804.8 391.6" stroke-width="3.17" stroke-opacity="0.56"/>
<path d="M773.5 402.0 L811.0 393.1" stroke-width="1.95" stroke-opacity="0.50"/>
<path d="M717.2 377.5 Q773.5 390.0 789.1 396.0 L804.8 402.0" stroke-width="1.71" stroke-opacity="0.45"/>
<path d="M732.9 383.8 L786.0 397.8" stroke-width="1.46" stroke-opacity="0.39"/>
<path d="M864.1 319.7 Q854.8 293.1 847.7 294.7 Q840.7 296.2 832.9 304.8 L825.1 313.4" stroke-width="3.19" stroke-opacity="0.44"/>
<path d="M864.1 321.9 Q854.8 296.2 848.3 298.0 Q841.9 299.7 835.4 307.3 L829.0 315.0" stroke-width="2.27" stroke-opacity="0.45"/>
<path d="M864.1 319.7 Q851.6 297.8 842.2 300.2 Q832.9 302.5 825.1 313.4 L817.2 324.4" stroke-width="2.92" stroke-opacity="0.41"/>
<path d="M864.1 321.9 Q851.6 300.9 843.0 303.4 Q834.4 305.9 828.2 315.9 L821.9 325.9" stroke-width="2.39" stroke-opacity="0.45"/>
<path d="M864.1 319.7 Q850.1 305.6 839.1 308.0 Q828.2 310.3 820.4 322.8 L812.6 335.3" stroke-width="3.46" stroke-opacity="0.43"/>
<path d="M864.1 321.9 Q850.1 308.8 840.0 311.2 Q830.0 313.8 823.9 325.3 L817.7 336.9" stroke-width="1.99" stroke-opacity="0.45"/>
<path d="M864.1 319.7 Q851.6 313.4 840.7 316.6 Q829.8 319.7 821.9 333.0 L814.1 346.2" stroke-width="2.72" stroke-opacity="0.49"/>
<path d="M864.1 321.9 Q851.6 316.6 841.5 319.8 Q831.5 323.1 825.3 335.5 L819.1 347.8" stroke-width="2.42" stroke-opacity="0.45"/>
<path d="M864.1 319.7 Q854.8 321.2 845.4 325.9 Q836.0 330.6 829.0 343.1 L821.9 355.6" stroke-width="3.95" stroke-opacity="0.51"/>
<path d="M864.1 321.9 Q854.8 324.4 846.1 329.2 Q837.4 334.1 831.8 345.6 L826.2 357.2" stroke-width="1.72" stroke-opacity="0.45"/>
<path d="M864.1 319.7 Q857.9 325.9 851.6 332.2 Q845.4 338.4 841.5 350.2 L837.6 361.9" stroke-width="3.22" stroke-opacity="0.43"/>
<path d="M864.1 321.9 Q857.9 329.1 852.1 335.5 Q846.3 341.9 843.3 352.7 L840.2 363.4" stroke-width="2.22" stroke-opacity="0.45"/>
<path d="M864.1 319.7 Q871.9 293.1 877.4 294.7 Q882.9 296.2 886.8 303.3 L890.7 310.3" stroke-width="3.46" stroke-opacity="0.53"/>
<path d="M864.1 321.9 Q871.9 296.2 876.9 298.0 Q881.9 299.7 885.0 305.8 L888.0 311.9" stroke-width="1.79" stroke-opacity="0.45"/>
<path d="M864.1 319.7 Q875.1 297.8 881.3 300.9 Q887.6 304.1 891.5 312.7 L895.4 321.2" stroke-width="3.01" stroke-opacity="0.53"/>
<path d="M864.1 321.9 Q875.1 300.9 880.7 304.2 Q886.4 307.5 889.3 315.2 L892.2 322.8" stroke-width="2.43" stroke-opacity="0.45"/>
<path d="M864.1 319.7 Q876.6 305.6 883.7 308.8 Q890.7 311.9 893.8 322.8 L896.9 333.8" stroke-width="3.93" stroke-opacity="0.53"/>
<path d="M864.1 321.9 Q876.6 308.8 883.0 312.0 Q889.4 315.3 891.5 325.3 L893.7 335.3" stroke-width="2.26" stroke-opacity="0.45"/>
<path d="M864.1 319.7 Q875.1 313.4 881.3 318.1 Q887.6 322.8 890.7 333.8 L893.8 344.7" stroke-width="3.77" stroke-opacity="0.44"/>
<path d="M864.1 321.9 Q875.1 316.6 880.7 321.4 Q886.4 326.2 888.6 336.2 L890.8 346.2" stroke-width="1.97" stroke-opacity="0.45"/>
<path d="M864.1 319.7 Q871.9 321.2 877.4 326.7 Q882.9 332.2 885.2 343.1 L887.6 354.1" stroke-width="3.20" stroke-opacity="0.41"/>
<path d="M864.1 321.9 Q871.9 324.4 876.9 330.0 Q881.9 335.6 883.6 345.6 L885.2 355.6" stroke-width="1.49" stroke-opacity="0.45"/>
<path d="M864.1 319.7 Q862.6 288.4 860.2 281.4 Q857.9 274.4 854.0 271.2 L850.1 268.1" stroke-width="3.09" stroke-opacity="0.44"/>
<path d="M864.1 321.9 Q862.6 291.6 860.4 284.7 Q858.2 277.8 854.8 273.8 L851.5 269.7" stroke-width="2.14" stroke-opacity="0.45"/>
<path d="M864.1 319.7 Q865.7 288.4 868.0 281.4 Q870.4 274.4 872.7 271.2 L875.1 268.1" stroke-width="4.08" stroke-opacity="0.47"/>
<path d="M864.1 321.9 Q865.7 291.6 867.9 284.7 Q870.1 277.8 872.0 273.8 L874.0 269.7" stroke-width="2.38" stroke-opacity="0.45"/>
<path d="M864.1 319.7 Q859.4 291.6 853.2 286.1 Q846.9 280.6 842.2 280.6 L837.6 280.6" stroke-width="4.13" stroke-opacity="0.55"/>
<path d="M864.1 321.9 Q859.4 294.7 853.6 289.4 Q847.8 284.1 844.0 283.1 L840.2 282.2" stroke-width="1.82" stroke-opacity="0.45"/>
<path d="M864.1 319.7 Q868.8 291.6 874.3 286.1 Q879.8 280.6 882.9 281.4 L886.0 282.2" stroke-width="3.01" stroke-opacity="0.44"/>
<path d="M864.1 321.9 Q868.8 294.7 873.9 289.4 Q879.0 284.1 881.4 283.9 L883.8 283.8" stroke-width="1.66" stroke-opacity="0.45"/>
<path d="M861.0 308.8 L862.2 341.6" stroke-width="2.44" stroke-opacity="0.45"/>
<path d="M817.2 308.8 L842.2 302.5 L864.1 315.0 L864.1 341.6 L842.2 349.4 L818.8 346.2 L814.1 327.5 Z" fill="#2a2a2a" fill-opacity="0.35" stroke="none"/>
<path d="M865.7 338.4 Q850.1 343.1 843.0 353.3 L836.0 363.4" stroke-width="8.54" stroke-opacity="0.34"/>
<path d="M842.2 336.9 Q826.6 346.2 821.9 350.9 L817.2 355.6" stroke-width="7.32" stroke-opacity="0.34"/>
<path d="M867.2 340.0 Q854.8 344.7 848.5 354.8 L842.2 365.0" stroke-width="1.71" stroke-opacity="0.56"/>
<path d="M864.1 340.0 Q845.4 343.1 838.3 354.1 L831.3 365.0" stroke-width="1.71" stroke-opacity="0.56"/>
<path d="M826.6 355.6 L870.4 352.5" stroke-width="3.66" stroke-opacity="0.62"/>
<path d="M829.8 359.5 L868.8 356.4" stroke-width="2.44" stroke-opacity="0.45"/>
<path d="M827.4 357.2 L826.9 385.3" stroke-width="3.90" stroke-opacity="0.67"/>
<path d="M831.3 360.3 L831.0 383.8" stroke-width="1.95" stroke-opacity="0.45"/>
<path d="M869.1 352.5 L870.1 393.9" stroke-width="3.90" stroke-opacity="0.73"/>
<path d="M874.3 358.8 L874.8 390.0" stroke-width="2.20" stroke-opacity="0.45"/>
<path d="M870.4 355.6 L886.0 352.5" stroke-width="3.17" stroke-opacity="0.56"/>
<path d="M831.3 380.6 L868.8 383.8" stroke-width="2.93" stroke-opacity="0.50"/>
<path d="M832.9 386.9 L870.4 391.6" stroke-width="3.17" stroke-opacity="0.50"/>
<path d="M845.4 365.0 L846.0 380.6" stroke-width="2.44" stroke-opacity="0.39"/>
<path d="M853.2 366.6 L853.8 377.5" stroke-width="2.93" stroke-opacity="0.34"/>
<path d="M836.0 377.5 L864.1 379.8" stroke-width="1.71" stroke-opacity="0.39"/>
<path d="M962.6 332.2 Q963.8 355.6 962.9 376.7 L961.9 397.8" stroke-width="0.98" stroke-opacity="0.45"/>
<path d="M928.2 327.5 L928.5 341.6" stroke-width="1.22" stroke-opacity="0.45"/>
<path d="M886.0 326.2 Q909.4 327.5 921.2 327.7 L932.9 327.8" stroke-width="5.61" stroke-opacity="0.78"/>
<path d="M886.0 329.1 Q917.2 329.8 928.2 329.5 L939.1 329.1" stroke-width="3.17" stroke-opacity="0.50"/>
<path d="M917.2 333.8 L943.8 334.5" stroke-width="1.95" stroke-opacity="0.34"/>
<path d="M932.9 328.3 L973.5 332.2" stroke-width="1.22" stroke-opacity="0.56"/>
<path d="M886.0 293.1 Q904.8 299.4 910.2 304.8 L915.7 310.3" stroke-width="4.88" stroke-opacity="0.56"/>
<path d="M886.0 295.3 Q904.8 301.6 910.2 305.9 L915.7 310.3" stroke-width="2.44" stroke-opacity="0.45"/>
<path d="M886.0 300.9 Q903.2 307.2 910.2 313.0 L917.2 318.9" stroke-width="4.88" stroke-opacity="0.56"/>
<path d="M886.0 303.1 Q903.2 309.4 910.2 314.1 L917.2 318.9" stroke-width="2.44" stroke-opacity="0.45"/>
<path d="M886.0 310.3 Q898.5 315.0 903.2 320.5 L907.9 325.9" stroke-width="4.88" stroke-opacity="0.56"/>
<path d="M886.0 312.5 Q898.5 317.2 903.2 321.6 L907.9 325.9" stroke-width="2.44" stroke-opacity="0.45"/>
<path d="M886.0 333.8 Q904.8 336.9 911.8 340.0 L918.8 343.1" stroke-width="4.88" stroke-opacity="0.56"/>
<path d="M886.0 335.9 Q904.8 339.1 911.8 341.1 L918.8 343.1" stroke-width="2.44" stroke-opacity="0.45"/>
<path d="M886.0 340.0 Q901.6 344.7 906.3 349.4 L911.0 354.1" stroke-width="4.88" stroke-opacity="0.56"/>
<path d="M886.0 342.2 Q901.6 346.9 906.3 350.5 L911.0 354.1" stroke-width="2.44" stroke-opacity="0.45"/>
<path d="M886.0 329.1 Q900.1 332.2 904.8 336.9 L909.4 341.6" stroke-width="4.88" stroke-opacity="0.56"/>
<path d="M886.0 331.2 Q900.1 334.4 904.8 338.0 L909.4 341.6" stroke-width="2.44" stroke-opacity="0.45"/>
<path d="M886.0 351.2 L903.2 351.9" stroke-width="3.17" stroke-opacity="0.56"/>
<path d="M886.0 356.4 L901.6 357.2" stroke-width="2.20" stroke-opacity="0.45"/>
<path d="M898.2 352.5 L896.9 390.0" stroke-width="3.42" stroke-opacity="0.67"/>
<path d="M903.5 352.5 L901.6 393.1" stroke-width="2.44" stroke-opacity="0.39"/>
<path d="M886.0 385.3 L896.9 386.1" stroke-width="2.93" stroke-opacity="0.62"/>
<path d="M906.3 359.5 L943.8 358.8" stroke-width="0.98" stroke-opacity="0.50"/>
<path d="M886.0 365.0 L893.8 374.4" stroke-width="0.98" stroke-opacity="0.34"/>
<path d="M886.0 387.7 Q921.9 388.4 936.8 393.1 L951.6 397.8" stroke-width="4.39" stroke-opacity="0.50"/>
<path d="M886.0 393.1 Q932.9 396.2 943.8 397.8 L954.8 399.4" stroke-width="3.66" stroke-opacity="0.56"/>
<path d="M901.6 391.6 L948.5 400.2" stroke-width="2.44" stroke-opacity="0.45"/>
<path d="M886.0 399.4 L951.6 402.0" stroke-width="3.17" stroke-opacity="0.56"/>
<path d="M961.0 397.8 L995.4 402.0" stroke-width="1.22" stroke-opacity="0.45"/>
<path d="M495.4 402.8 Q507.9 401.2 517.2 400.6 L526.6 400.0" stroke-width="1.95" stroke-opacity="0.50"/>
<path d="M522.2 423.4 Q564.1 416.4 603.2 409.0 L642.2 401.6" stroke-width="2.93" stroke-opacity="0.56"/>
<path d="M548.5 423.4 Q595.4 415.6 618.8 410.2 L642.2 404.7" stroke-width="1.22" stroke-opacity="0.45"/>
<path d="M642.2 400.0 Q579.8 406.2 556.3 407.8 Q532.9 409.4 531.3 411.7 Q529.8 414.1 539.1 414.8 Q548.5 415.6 571.9 412.5 L595.4 409.4" stroke-width="2.68" stroke-opacity="0.50"/>
<path d="M595.4 400.0 Q548.5 404.7 535.2 405.5 Q521.9 406.2 522.7 408.4 Q523.5 410.6 537.6 409.2 L551.6 407.8" stroke-width="1.95" stroke-opacity="0.50"/>
<path d="M657.9 400.0 L595.4 407.8" stroke-width="3.66" stroke-opacity="0.45"/>
<path d="M578.2 450.9 Q611.0 435.9 648.5 425.8 L686.0 415.6" stroke-width="1.71" stroke-opacity="0.56"/>
<path d="M586.0 446.9 Q626.6 433.6 656.3 426.2 L686.0 418.8" stroke-width="4.15" stroke-opacity="0.45"/>
<path d="M592.2 446.1 Q634.4 435.9 660.2 429.7 L686.0 423.4" stroke-width="2.93" stroke-opacity="0.50"/>
<path d="M611.0 433.6 Q657.9 418.8 671.9 414.8 L686.0 410.9" stroke-width="1.95" stroke-opacity="0.50"/>
<path d="M654.8 418.8 Q670.4 412.5 678.2 410.9 L686.0 409.4" stroke-width="3.17" stroke-opacity="0.45"/>
<path d="M642.2 403.1 L686.0 412.5" stroke-width="1.95" stroke-opacity="0.56"/>
<path d="M651.6 400.0 L686.0 406.2" stroke-width="2.44" stroke-opacity="0.56"/>
<path d="M659.4 491.6 L686.0 478.1" stroke-width="1.46" stroke-opacity="0.56"/>
<path d="M679.8 468.8 Q682.9 465.6 684.4 464.8 L686.0 464.1" stroke-width="1.95" stroke-opacity="0.56"/>
<path d="M676.6 460.2 L686.0 457.8" stroke-width="2.44" stroke-opacity="0.56"/>
<path d="M686.0 415.6 Q732.9 407.8 756.3 403.9 L779.8 400.0" stroke-width="4.88" stroke-opacity="0.62"/>
<path d="M686.0 420.3 Q732.9 413.3 759.4 408.2 L786.0 403.1" stroke-width="3.66" stroke-opacity="0.50"/>
<path d="M686.0 409.4 Q726.6 403.1 739.1 401.6 L751.6 400.0" stroke-width="2.93" stroke-opacity="0.50"/>
<path d="M686.0 425.0 Q748.5 412.5 776.6 406.2 L804.8 400.0" stroke-width="1.95" stroke-opacity="0.45"/>
<path d="M873.5 400.0 Q795.4 432.8 755.5 450.8 L715.7 468.8" stroke-width="7.32" stroke-opacity="0.56"/>
<path d="M861.0 401.6 Q786.0 434.4 756.3 447.7 L726.6 460.9" stroke-width="4.88" stroke-opacity="0.67"/>
<path d="M879.8 401.6 Q804.8 434.4 773.5 448.4 L742.2 462.5" stroke-width="3.66" stroke-opacity="0.50"/>
<path d="M842.2 409.4 Q773.5 437.5 747.7 448.4 L721.9 459.4" stroke-width="2.93" stroke-opacity="0.56"/>
<path d="M886.0 406.2 Q811.0 439.1 779.8 451.6 L748.5 464.1" stroke-width="1.95" stroke-opacity="0.45"/>
<path d="M811.0 400.0 Q748.5 429.7 717.2 443.8 L686.0 457.8" stroke-width="6.10" stroke-opacity="0.39"/>
<path d="M817.2 403.1 Q751.6 434.4 721.2 449.2 L690.7 464.1" stroke-width="3.66" stroke-opacity="0.45"/>
<path d="M795.4 412.5 Q732.9 440.6 709.4 451.6 L686.0 462.5" stroke-width="2.44" stroke-opacity="0.45"/>
<path d="M782.9 428.1 Q717.2 459.4 701.6 468.8 L686.0 478.1" stroke-width="1.95" stroke-opacity="0.50"/>
<path d="M715.7 468.8 Q719.6 470.0 726.2 467.8 L732.9 465.6" stroke-width="1.71" stroke-opacity="0.56"/>
<path d="M690.7 464.1 Q695.4 465.6 706.3 462.5 L717.2 459.4" stroke-width="1.46" stroke-opacity="0.50"/>
<path d="M686.0 415.6 L748.5 425.0" stroke-width="1.46" stroke-opacity="0.56"/>
<path d="M686.0 406.2 Q720.4 417.2 736.0 421.5 L751.6 425.8" stroke-width="1.22" stroke-opacity="0.50"/>
<path d="M767.2 432.8 Q811.0 445.3 832.1 451.2 L853.2 457.0" stroke-width="1.46" stroke-opacity="0.56"/>
<path d="M770.4 435.9 Q804.8 446.9 819.6 452.3 L834.4 457.8" stroke-width="1.95" stroke-opacity="0.39"/>
<path d="M842.2 417.2 L886.0 425.0" stroke-width="1.71" stroke-opacity="0.50"/>
<path d="M845.4 420.3 L886.0 428.9" stroke-width="1.22" stroke-opacity="0.45"/>
<path d="M773.5 400.0 L795.4 406.2" stroke-width="1.22" stroke-opacity="0.45"/>
<path d="M793.8 494.7 Q842.2 467.2 864.1 454.1 L886.0 440.9" stroke-width="1.59" stroke-opacity="0.56"/>
<path d="M886.0 450.0 Q826.6 487.5 814.1 495.7 Q801.6 503.9 800.1 502.7 Q798.5 501.6 804.8 496.9 L811.0 492.2" stroke-width="1.59" stroke-opacity="0.56"/>
<path d="M845.4 489.1 Q865.7 473.4 875.8 465.8 L886.0 458.1" stroke-width="1.71" stroke-opacity="0.56"/>
<path d="M861.0 487.8 Q873.5 476.6 879.8 471.4 L886.0 466.2" stroke-width="1.95" stroke-opacity="0.50"/>
<path d="M859.4 475.0 L886.0 454.7" stroke-width="3.66" stroke-opacity="0.45"/>
<path d="M951.6 400.0 L951.3 410.9" stroke-width="3.66" stroke-opacity="0.78"/>
<path d="M955.4 400.0 L955.1 411.7" stroke-width="3.17" stroke-opacity="0.67"/>
<path d="M953.2 400.0 Q917.2 425.0 901.6 435.9 L886.0 446.9" stroke-width="5.61" stroke-opacity="0.78"/>
<path d="M948.5 404.7 Q914.1 429.7 900.1 441.4 L886.0 453.1" stroke-width="3.17" stroke-opacity="0.56"/>
<path d="M937.6 417.2 Q904.8 445.3 895.4 454.7 L886.0 464.1" stroke-width="2.44" stroke-opacity="0.50"/>
<path d="M914.1 435.3 Q971.9 446.9 1001.6 452.0 L1031.3 457.2" stroke-width="1.34" stroke-opacity="0.56"/>
<path d="M920.4 438.3 Q948.5 444.5 957.9 445.7 L967.2 446.9" stroke-width="1.22" stroke-opacity="0.39"/>
<path d="M956.3 404.7 L1015.7 408.8" stroke-width="1.22" stroke-opacity="0.45"/>
<path d="M964.1 400.3 L1015.7 403.4" stroke-width="0.98" stroke-opacity="0.39"/>
<path d="M954.8 406.2 L989.1 410.3" stroke-width="1.22" stroke-opacity="0.39"/>
<path d="M886.0 425.0 L929.8 431.2" stroke-width="1.46" stroke-opacity="0.45"/>
<path d="M886.0 428.1 L904.8 429.7" stroke-width="1.22" stroke-opacity="0.39"/>
<path d="M903.2 424.4 L937.6 406.2" stroke-width="1.22" stroke-opacity="0.50"/>
<path d="M886.0 403.1 Q948.5 410.9 957.9 412.1 L967.2 413.3" stroke-width="1.71" stroke-opacity="0.39"/>
<path d="M886.0 407.8 Q932.9 406.2 942.2 403.9 L951.6 401.6" stroke-width="2.93" stroke-opacity="0.39"/>
<path d="M886.0 400.0 L951.6 403.1" stroke-width="3.66" stroke-opacity="0.45"/>
</g></svg>

<!--rightdock-->
<div class="a" style="left:1088.5px;top:59px;width:3.5px;height:561px;background:#313131"></div>
<svg style="left:1093.0px;top:57.5px" width="11" height="11" viewBox="0 0 11 11" fill="none" stroke="#dcdcdc" stroke-width="1"><circle cx="5.5" cy="5.5" r="4.7"/><rect x="3.2" y="5.2" width="4.6" height="3.2" fill="#dcdcdc" stroke="none"/><path d="M4 5.2 V4.2 A1.5 1.5 0 0 1 7 4.2 V5.2" stroke-width="0.9"/></svg><div class="t d" style="left:1107.5px;top:58.0px">Overview</div><svg style="left:1256.0px;top:58.0px" width="10" height="9" viewBox="0 0 10 9" fill="none" stroke="#dcdcdc" stroke-width="1.1"><path d="M3.4 3 V0.8 H9.2 V5 H6.4"/><rect x="0.7" y="3.2" width="5.6" height="4.8" fill="#323232"/></svg><svg style="left:1270.3px;top:58.5px" width="8" height="8" viewBox="0 0 8 8" fill="none" stroke="#dcdcdc" stroke-width="1.2" stroke-linecap="round"><path d="M1 1 L7 7 M7 1 L1 7"/></svg>
<div class="a" style="left:1092px;top:68.8px;width:188px;height:181.5px;background:#1e1e1e"></div>
<div class="a" style="left:1092px;top:92px;width:188px;height:134px;background:#efe8e0;overflow:hidden"><svg style="left:0;top:0" width="188" height="134" viewBox="0 0 188 134"><g transform="scale(0.2578) translate(-486 -180)" fill="none" stroke="#2c2c2c" stroke-linecap="round" stroke-linejoin="round">
<path d="M498.0 196.0 L600.0 212.0 L740.0 242.0 L742.0 272.0 L600.0 256.0 L498.0 244.0 Z" fill="#303030" fill-opacity="0.16" stroke="none" filter="url(#skb)"/>
<path d="M704.0 300.0 L820.0 296.0 L905.0 300.0 L905.0 392.0 L830.0 398.0 L704.0 372.0 Z" fill="#303030" fill-opacity="0.20" stroke="none" filter="url(#skb)"/>
<path d="M820.0 270.0 L912.0 268.0 L915.0 356.0 L820.0 360.0 Z" fill="#303030" fill-opacity="0.18" stroke="none" filter="url(#skb)"/>
<path d="M598.0 268.0 L704.0 268.0 L704.0 376.0 L598.0 376.0 Z" fill="#303030" fill-opacity="0.07" stroke="none" filter="url(#skb)"/>
<path d="M496.0 376.0 L700.0 366.0 L900.0 392.0 L955.0 400.0 L800.0 460.0 L700.0 458.0 L600.0 440.0 L520.0 412.0 L494.0 398.0 Z" fill="#303030" fill-opacity="0.07" stroke="none" filter="url(#skb)"/>
<path d="M860.0 186.0 L940.0 186.0 L940.0 328.0 L860.0 328.0 Z" fill="#303030" fill-opacity="0.08" stroke="none" filter="url(#skb)"/>
<path d="M745.0 250.0 L846.0 250.0 L846.0 300.0 L745.0 300.0 Z" fill="#303030" fill-opacity="0.10" stroke="none" filter="url(#skb)"/>
<path d="M499.3 192.2 Q548.5 200.3 567.2 205.0 Q586.0 209.7 614.1 215.2 Q642.2 220.6 664.1 225.3 L686.0 230.0" stroke-width="5.27" stroke-opacity="0.67"/>
<path d="M496.9 199.5 Q532.9 201.9 556.3 206.6 Q579.8 211.2 611.0 217.5 Q642.2 223.8 664.1 228.0 L686.0 232.3" stroke-width="3.96" stroke-opacity="0.56"/>
<path d="M500.1 195.6 Q564.1 205.0 595.4 211.2 Q626.6 217.5 656.3 222.6 L686.0 227.7" stroke-width="2.63" stroke-opacity="0.56"/>
<path d="M540.7 191.7 Q579.8 200.3 603.2 205.8 Q626.6 211.2 656.3 218.4 L686.0 225.6" stroke-width="1.65" stroke-opacity="0.56"/>
<path d="M534.4 195.6 Q551.6 194.1 581.3 201.1 Q611.0 208.1 634.4 212.8 L657.9 217.5" stroke-width="1.32" stroke-opacity="0.45"/>
<path d="M496.9 242.5 Q548.5 248.8 579.8 252.7 Q611.0 256.6 648.5 260.9 L686.0 265.2" stroke-width="5.60" stroke-opacity="0.69"/>
<path d="M500.1 244.8 Q579.8 253.4 632.9 260.5 L686.0 267.5" stroke-width="2.63" stroke-opacity="0.56"/>
<path d="M548.5 233.1 Q611.0 239.4 648.5 244.1 L686.0 248.8" stroke-width="2.63" stroke-opacity="0.62"/>
<path d="M546.9 236.6 Q611.0 244.1 648.5 248.8 L686.0 253.4" stroke-width="1.81" stroke-opacity="0.50"/>
<path d="M553.2 230.0 Q626.6 238.1 656.3 241.9 L686.0 245.6" stroke-width="1.32" stroke-opacity="0.45"/>
<path d="M496.6 231.6 L501.6 203.4 L505.5 231.6" stroke-width="3.62" stroke-opacity="0.45"/>
<path d="M509.4 245.6 L511.8 205.0 L517.2 203.4 L523.5 247.2" stroke-width="3.96" stroke-opacity="0.47"/>
<path d="M525.1 242.5 L531.3 208.1 L534.8 247.2 L539.1 208.1 L541.0 245.6" stroke-width="4.28" stroke-opacity="0.47"/>
<path d="M544.6 246.4 L545.7 206.6 L547.2 247.2" stroke-width="3.62" stroke-opacity="0.50"/>
<path d="M554.5 206.6 L554.3 248.8" stroke-width="2.47" stroke-opacity="0.56"/>
<path d="M565.1 209.7 L564.4 248.8" stroke-width="2.47" stroke-opacity="0.56"/>
<path d="M571.2 211.2 L571.0 250.3" stroke-width="2.47" stroke-opacity="0.56"/>
<path d="M577.6 212.0 L578.2 252.2" stroke-width="2.47" stroke-opacity="0.56"/>
<path d="M585.4 213.6 L585.9 252.7" stroke-width="2.47" stroke-opacity="0.56"/>
<path d="M593.3 215.2 L593.3 253.4" stroke-width="2.47" stroke-opacity="0.56"/>
<path d="M601.5 216.7 L602.0 254.2" stroke-width="2.47" stroke-opacity="0.56"/>
<path d="M613.7 222.2 L613.8 262.0" stroke-width="2.47" stroke-opacity="0.56"/>
<path d="M619.0 223.8 L619.4 258.1" stroke-width="2.47" stroke-opacity="0.56"/>
<path d="M623.6 225.3 L623.4 258.1" stroke-width="2.47" stroke-opacity="0.56"/>
<path d="M631.9 226.1 L630.7 258.9" stroke-width="2.47" stroke-opacity="0.56"/>
<path d="M642.7 228.8 L642.0 260.0" stroke-width="2.47" stroke-opacity="0.56"/>
<path d="M648.1 230.0 L648.0 258.1" stroke-width="2.47" stroke-opacity="0.56"/>
<path d="M656.1 231.9 L656.7 261.6" stroke-width="2.47" stroke-opacity="0.56"/>
<path d="M665.3 233.9 L665.8 262.8" stroke-width="2.47" stroke-opacity="0.56"/>
<path d="M676.8 236.6 L676.5 263.1" stroke-width="2.47" stroke-opacity="0.56"/>
<path d="M681.4 237.8 L680.8 261.2" stroke-width="2.47" stroke-opacity="0.56"/>
<path d="M567.2 227.2 Q569.4 252.9 570.7 240.8 L571.9 228.8" stroke-width="1.49" stroke-opacity="0.45"/>
<path d="M574.3 227.9 Q576.5 253.4 577.7 241.4 L579.0 229.5" stroke-width="1.49" stroke-opacity="0.45"/>
<path d="M582.1 228.7 Q584.3 253.9 585.5 242.1 L586.8 230.2" stroke-width="1.49" stroke-opacity="0.45"/>
<path d="M604.8 230.9 Q606.9 255.5 608.2 244.0 L609.4 232.5" stroke-width="1.49" stroke-opacity="0.45"/>
<path d="M609.4 231.4 Q611.6 255.8 612.9 244.4 L614.1 233.0" stroke-width="1.49" stroke-opacity="0.45"/>
<path d="M636.0 234.1 Q638.2 257.7 639.4 246.7 L640.7 235.6" stroke-width="1.49" stroke-opacity="0.45"/>
<path d="M661.0 236.6 Q663.2 259.4 664.4 248.8 L665.7 238.1" stroke-width="1.49" stroke-opacity="0.45"/>
<path d="M670.4 237.5 Q672.6 260.1 673.8 249.6 L675.1 239.1" stroke-width="1.49" stroke-opacity="0.45"/>
<path d="M504.8 253.4 Q548.5 259.7 568.8 262.7 L589.1 265.6" stroke-width="5.93" stroke-opacity="0.67"/>
<path d="M512.6 251.9 Q551.6 258.1 568.8 260.9 L586.0 263.6" stroke-width="3.96" stroke-opacity="0.50"/>
<path d="M514.1 258.1 Q551.6 262.0 569.6 264.8 L587.6 267.5" stroke-width="2.63" stroke-opacity="0.45"/>
<path d="M501.3 247.2 L501.0 336.2 L500.7 398.8" stroke-width="2.63" stroke-opacity="0.50"/>
<path d="M503.2 248.8 L502.9 336.2 L502.6 398.8" stroke-width="1.97" stroke-opacity="0.45"/>
<path d="M508.2 253.4 L507.9 336.2 L507.6 398.8" stroke-width="4.28" stroke-opacity="0.67"/>
<path d="M510.2 253.4 L509.9 336.2 L509.6 398.8" stroke-width="2.31" stroke-opacity="0.56"/>
<path d="M513.5 255.0 L513.2 336.2 L512.9 398.8" stroke-width="1.65" stroke-opacity="0.39"/>
<path d="M550.1 258.1 L549.1 356.6" stroke-width="2.63" stroke-opacity="0.56"/>
<path d="M554.1 258.1 L553.2 356.6" stroke-width="3.96" stroke-opacity="0.67"/>
<path d="M585.4 255.0 L584.8 336.2 L584.4 389.4" stroke-width="2.97" stroke-opacity="0.56"/>
<path d="M589.1 255.0 L588.5 336.2 L588.2 389.4" stroke-width="2.31" stroke-opacity="0.50"/>
<path d="M595.7 255.0 L595.1 336.2 L594.8 389.4" stroke-width="4.28" stroke-opacity="0.69"/>
<path d="M567.2 275.3 L582.9 276.9" stroke-width="1.97" stroke-opacity="0.45"/>
<path d="M498.6 202.7 L499.6 231.4" stroke-width="2.50" stroke-opacity="0.49"/>
<path d="M507.0 202.9 L507.6 246.1" stroke-width="2.38" stroke-opacity="0.49"/>
<path d="M514.9 204.4 L515.3 246.7" stroke-width="3.59" stroke-opacity="0.41"/>
<path d="M520.2 205.6 L519.8 247.2" stroke-width="2.04" stroke-opacity="0.50"/>
<path d="M528.3 206.7 L528.5 246.7" stroke-width="3.12" stroke-opacity="0.49"/>
<path d="M533.0 208.0 L533.4 248.3" stroke-width="2.75" stroke-opacity="0.50"/>
<path d="M536.9 208.6 L537.8 247.6" stroke-width="3.33" stroke-opacity="0.44"/>
<path d="M542.4 207.8 L541.8 246.3" stroke-width="2.25" stroke-opacity="0.41"/>
<path d="M549.4 208.8 L549.5 247.3" stroke-width="2.62" stroke-opacity="0.54"/>
<path d="M558.8 209.6 L559.5 249.7" stroke-width="3.32" stroke-opacity="0.54"/>
<path d="M568.2 211.0 L568.3 250.5" stroke-width="3.55" stroke-opacity="0.42"/>
<path d="M581.1 212.9 L581.2 251.8" stroke-width="2.94" stroke-opacity="0.44"/>
<path d="M589.1 215.0 L589.7 253.3" stroke-width="3.55" stroke-opacity="0.51"/>
<path d="M597.7 217.0 L598.0 252.6" stroke-width="3.46" stroke-opacity="0.52"/>
<path d="M606.9 220.6 L606.1 256.3" stroke-width="2.15" stroke-opacity="0.50"/>
<path d="M625.9 225.0 L626.2 257.3" stroke-width="2.54" stroke-opacity="0.40"/>
<path d="M635.2 226.8 L635.4 258.6" stroke-width="2.03" stroke-opacity="0.54"/>
<path d="M651.8 230.4 L651.2 260.1" stroke-width="2.58" stroke-opacity="0.41"/>
<path d="M672.5 236.7 L671.9 262.8" stroke-width="2.12" stroke-opacity="0.41"/>
<path d="M497.7 230.0 L500.8 205.0 L504.4 230.0 L507.9 205.8 L512.6 245.6 L518.0 205.0 L522.2 246.4" stroke-width="2.63" stroke-opacity="0.45"/>
<path d="M526.6 245.6 L530.5 209.7 L533.7 245.6 L538.3 209.7 L542.2 246.4" stroke-width="2.63" stroke-opacity="0.45"/>
<path d="M498.5 194.1 Q564.1 203.4 595.4 209.7 Q626.6 215.9 656.3 221.4 L686.0 226.9" stroke-width="3.62" stroke-opacity="0.50"/>
<path d="M497.7 244.1 Q564.1 251.1 595.4 255.0 Q626.6 258.9 656.3 262.6 L686.0 266.2" stroke-width="3.62" stroke-opacity="0.50"/>
<ellipse cx="651.0" cy="321.0" rx="52.0" ry="54.0" stroke-width="2.16" stroke-opacity="0.50" transform="rotate(20.0 651.0 321.0)"/>
<ellipse cx="652.0" cy="320.0" rx="49.0" ry="52.0" stroke-width="1.89" stroke-opacity="0.45" transform="rotate(-18.0 652.0 320.0)"/>
<ellipse cx="650.0" cy="322.0" rx="54.0" ry="56.0" stroke-width="1.62" stroke-opacity="0.40" transform="rotate(-30.0 650.0 322.0)"/>
<path d="M504.8 248.8 L504.3 336.2 L504.0 392.5" stroke-width="2.97" stroke-opacity="0.50"/>
<path d="M509.1 253.4 L508.7 336.2 L508.3 392.5" stroke-width="3.29" stroke-opacity="0.56"/>
<path d="M551.6 258.1 L551.2 336.2 L550.8 392.5" stroke-width="2.97" stroke-opacity="0.50"/>
<path d="M587.2 255.0 L586.8 336.2 L586.5 392.5" stroke-width="2.97" stroke-opacity="0.50"/>
<path d="M593.8 255.0 L593.3 336.2 L593.0 392.5" stroke-width="3.29" stroke-opacity="0.56"/>
<path d="M704.4 180.0 L705.1 242.5 L704.4 292.0 L704.1 368.1" stroke-width="4.62" stroke-opacity="0.69"/>
<path d="M706.0 180.0 L705.4 292.0 L706.3 368.1" stroke-width="1.97" stroke-opacity="0.45"/>
<path d="M686.0 208.9 Q725.1 205.0 743.0 203.0 L761.0 201.1" stroke-width="2.31" stroke-opacity="0.56"/>
<path d="M686.0 213.6 Q732.9 208.9 754.8 205.4 L776.6 201.9" stroke-width="3.96" stroke-opacity="0.56"/>
<path d="M709.4 218.3 Q740.7 213.6 754.0 212.0 L767.2 210.5" stroke-width="2.63" stroke-opacity="0.50"/>
<path d="M709.4 208.9 Q748.5 205.0 761.0 204.2 L773.5 203.4" stroke-width="1.97" stroke-opacity="0.45"/>
<path d="M746.9 216.7 L767.2 213.1" stroke-width="1.65" stroke-opacity="0.45"/>
<path d="M686.0 230.0 Q717.2 237.8 729.0 240.2 L740.7 242.5" stroke-width="4.94" stroke-opacity="0.67"/>
<path d="M686.0 232.3 Q717.2 240.2 729.0 242.9 L740.7 245.6" stroke-width="3.29" stroke-opacity="0.56"/>
<path d="M686.0 234.7 Q714.1 241.7 726.6 244.8 L739.1 248.0" stroke-width="2.31" stroke-opacity="0.50"/>
<path d="M686.0 248.8 L739.1 258.1" stroke-width="1.97" stroke-opacity="0.50"/>
<path d="M686.0 265.2 Q717.2 270.6 729.0 272.2 L740.7 273.8" stroke-width="4.62" stroke-opacity="0.67"/>
<path d="M686.0 258.1 L739.1 267.5" stroke-width="2.31" stroke-opacity="0.50"/>
<path d="M686.0 273.8 L740.7 281.6" stroke-width="2.63" stroke-opacity="0.56"/>
<path d="M686.0 280.0 L739.1 287.8" stroke-width="1.97" stroke-opacity="0.45"/>
<path d="M691.5 239.4 L690.5 267.5" stroke-width="1.97" stroke-opacity="0.50"/>
<path d="M700.8 241.2 L699.9 267.5" stroke-width="1.97" stroke-opacity="0.50"/>
<path d="M714.9 244.1 L714.0 272.2" stroke-width="1.97" stroke-opacity="0.50"/>
<path d="M725.8 246.4 L724.9 275.3" stroke-width="1.97" stroke-opacity="0.50"/>
<path d="M741.0 239.4 L741.6 292.0 L741.0 325.9" stroke-width="4.94" stroke-opacity="0.69"/>
<path d="M744.1 242.5 L744.4 292.0" stroke-width="2.63" stroke-opacity="0.56"/>
<path d="M748.8 236.2 L749.4 292.0" stroke-width="3.29" stroke-opacity="0.28"/>
<path d="M754.8 247.2 L757.9 255.0" stroke-width="2.31" stroke-opacity="0.50"/>
<path d="M743.8 238.6 Q751.6 233.9 781.3 228.0 Q811.0 222.2 836.0 218.7 L861.0 215.2" stroke-width="2.15" stroke-opacity="0.62"/>
<path d="M761.0 232.8 Q811.0 226.9 836.8 224.1 L862.6 221.4" stroke-width="3.62" stroke-opacity="0.56"/>
<path d="M786.0 232.8 Q826.6 229.7 841.5 229.5 L856.3 229.2" stroke-width="2.31" stroke-opacity="0.50"/>
<path d="M861.0 222.2 L886.0 215.9" stroke-width="4.28" stroke-opacity="0.39"/>
<path d="M870.4 219.1 L886.0 213.6" stroke-width="3.29" stroke-opacity="0.39"/>
<path d="M753.2 256.6 Q795.4 253.1 818.8 252.1 L842.2 251.1" stroke-width="5.27" stroke-opacity="0.90"/>
<path d="M753.2 258.9 L842.2 254.2" stroke-width="4.94" stroke-opacity="0.34"/>
<path d="M754.8 262.8 L842.2 258.9" stroke-width="5.60" stroke-opacity="0.25"/>
<path d="M844.6 237.8 L845.1 292.0 L844.4 304.1" stroke-width="4.94" stroke-opacity="0.73"/>
<path d="M842.2 242.5 L842.9 292.0" stroke-width="1.97" stroke-opacity="0.45"/>
<path d="M846.9 253.4 L879.8 255.0" stroke-width="2.31" stroke-opacity="0.34"/>
<path d="M870.4 248.8 L886.0 247.2" stroke-width="3.62" stroke-opacity="0.34"/>
<path d="M865.7 190.9 L866.0 292.0 L865.1 357.2" stroke-width="5.27" stroke-opacity="0.76"/>
<path d="M868.2 194.1 L867.9 292.0" stroke-width="2.31" stroke-opacity="0.50"/>
<path d="M861.0 195.6 L886.0 192.8" stroke-width="4.28" stroke-opacity="0.56"/>
<path d="M870.4 189.4 L886.0 186.2" stroke-width="2.63" stroke-opacity="0.39"/>
<path d="M864.1 194.1 L873.5 184.7" stroke-width="1.65" stroke-opacity="0.39"/>
<path d="M789.1 266.2 L821.9 265.9" stroke-width="3.96" stroke-opacity="0.67"/>
<path d="M795.4 269.1 L820.4 268.3" stroke-width="2.63" stroke-opacity="0.45"/>
<path d="M793.8 267.5 L794.4 292.0" stroke-width="3.29" stroke-opacity="0.62"/>
<path d="M819.6 261.2 L820.1 292.0" stroke-width="3.29" stroke-opacity="0.62"/>
<path d="M748.5 277.2 Q767.2 273.8 775.1 274.1 L782.9 274.4" stroke-width="4.94" stroke-opacity="0.62"/>
<path d="M751.6 280.0 L779.8 277.7" stroke-width="3.29" stroke-opacity="0.45"/>
<path d="M781.0 273.8 L780.7 292.0" stroke-width="3.29" stroke-opacity="0.67"/>
<path d="M806.3 280.0 L834.4 277.2" stroke-width="2.63" stroke-opacity="0.56"/>
<path d="M811.0 282.3 L832.9 280.0" stroke-width="1.97" stroke-opacity="0.45"/>
<path d="M811.8 278.4 L811.9 292.0" stroke-width="2.31" stroke-opacity="0.50"/>
<path d="M831.3 280.0 L831.9 292.0" stroke-width="2.63" stroke-opacity="0.39"/>
<path d="M776.6 287.8 L789.1 287.8" stroke-width="2.63" stroke-opacity="0.50"/>
<path d="M825.4 195.5 L831.3 194.8" stroke-width="1.65" stroke-opacity="0.56"/>
<path d="M686.0 256.6 Q717.2 262.8 728.2 265.2 L739.1 267.5" stroke-width="2.31" stroke-opacity="0.45"/>
<path d="M892.2 183.1 L892.9 292.0 L893.2 321.4" stroke-width="4.28" stroke-opacity="0.56"/>
<path d="M896.0 184.7 L895.7 292.0 L895.7 321.4" stroke-width="3.29" stroke-opacity="0.62"/>
<path d="M888.2 203.4 L888.8 292.0" stroke-width="1.97" stroke-opacity="0.39"/>
<path d="M922.7 186.2 L922.2 292.0 L921.9 326.9" stroke-width="4.94" stroke-opacity="0.34"/>
<path d="M926.9 184.7 L926.3 292.0 L926.0 326.9" stroke-width="3.96" stroke-opacity="0.45"/>
<path d="M930.7 186.2 L930.4 292.0 L929.8 328.4" stroke-width="4.94" stroke-opacity="0.69"/>
<path d="M934.8 187.8 L934.4 292.0 L934.8 326.1" stroke-width="3.62" stroke-opacity="0.39"/>
<path d="M886.0 187.8 Q917.2 186.9 934.4 186.2 L951.6 185.5" stroke-width="1.97" stroke-opacity="0.50"/>
<path d="M886.0 192.5 L929.8 189.1" stroke-width="4.28" stroke-opacity="0.50"/>
<path d="M886.0 190.6 L923.5 187.8" stroke-width="2.63" stroke-opacity="0.45"/>
<path d="M909.4 190.9 L925.1 206.6" stroke-width="2.31" stroke-opacity="0.34"/>
<path d="M914.1 189.4 L931.3 205.0" stroke-width="1.97" stroke-opacity="0.34"/>
<path d="M886.0 211.2 L939.1 209.7" stroke-width="3.62" stroke-opacity="0.50"/>
<path d="M886.0 215.9 L926.6 211.2" stroke-width="4.28" stroke-opacity="0.45"/>
<path d="M886.0 208.1 L920.4 203.4" stroke-width="3.29" stroke-opacity="0.39"/>
<path d="M901.6 200.3 L917.2 197.2" stroke-width="1.97" stroke-opacity="0.39"/>
<path d="M886.0 245.6 L939.1 240.3" stroke-width="3.62" stroke-opacity="0.45"/>
<path d="M886.0 248.8 L920.4 242.5" stroke-width="3.96" stroke-opacity="0.39"/>
<path d="M886.0 267.5 Q948.5 264.4 984.4 262.8 L1020.4 261.2" stroke-width="2.97" stroke-opacity="0.56"/>
<path d="M886.0 269.8 L932.9 267.5" stroke-width="4.28" stroke-opacity="0.50"/>
<path d="M936.0 262.8 Q1011.0 253.4 1044.6 251.1 L1078.2 248.8" stroke-width="2.31" stroke-opacity="0.50"/>
<path d="M939.1 266.2 Q1011.0 258.1 1042.2 257.3 L1073.5 256.6" stroke-width="2.63" stroke-opacity="0.45"/>
<path d="M964.1 258.1 Q1026.6 254.2 1048.5 255.0 L1070.4 255.8" stroke-width="1.65" stroke-opacity="0.34"/>
<path d="M958.2 181.6 L958.8 242.5 L956.3 292.0 L955.4 351.9 L954.1 403.4" stroke-width="5.60" stroke-opacity="0.84"/>
<path d="M960.4 182.2 L960.7 242.5 L959.1 292.0 L958.8 351.9 L957.2 403.4" stroke-width="3.96" stroke-opacity="0.67"/>
<path d="M964.1 184.7 Q967.2 205.0 965.5 226.9 Q963.8 248.8 962.4 255.0 L961.0 261.2" stroke-width="1.97" stroke-opacity="0.50"/>
<path d="M956.0 184.7 L955.4 292.0 L952.2 351.9 L951.6 403.4" stroke-width="2.31" stroke-opacity="0.39"/>
<path d="M531.3 296.2 L586.0 296.2" stroke-width="1.65" stroke-opacity="0.50"/>
<path d="M532.9 298.1 L573.5 295.6" stroke-width="1.32" stroke-opacity="0.39"/>
<path d="M539.1 303.3 L542.6 304.8 L544.1 321.2 L541.0 330.9 L537.6 330.6 L539.8 319.7 Z" fill="#555" fill-opacity="0.5" stroke="none"/>
<path d="M556.3 301.7 L561.0 304.1 L563.8 313.4 L559.4 332.2 L557.1 330.9 L559.4 315.0 Z" fill="#555" fill-opacity="0.5" stroke="none"/>
<path d="M512.6 349.4 Q548.5 353.8 565.7 353.1 L582.9 352.5" stroke-width="4.94" stroke-opacity="0.62"/>
<path d="M514.1 351.7 Q548.5 355.6 564.1 355.2 L579.8 354.8" stroke-width="3.29" stroke-opacity="0.45"/>
<path d="M540.7 349.7 L579.1 344.7" stroke-width="1.97" stroke-opacity="0.45"/>
<path d="M540.7 360.6 L570.4 358.8" stroke-width="2.31" stroke-opacity="0.39"/>
<path d="M549.3 336.9 L550.4 357.2" stroke-width="5.27" stroke-opacity="0.78"/>
<path d="M517.2 374.4 Q548.5 374.4 565.7 372.8 L582.9 371.2" stroke-width="5.93" stroke-opacity="0.39"/>
<path d="M501.6 379.4 L579.8 377.5" stroke-width="4.28" stroke-opacity="0.39"/>
<path d="M540.7 375.6 L579.8 371.2" stroke-width="3.29" stroke-opacity="0.50"/>
<path d="M493.8 393.1 Q579.8 386.9 632.9 382.2 Q686.0 377.5 693.8 376.6 L701.6 375.6" stroke-width="5.93" stroke-opacity="0.67"/>
<path d="M496.9 395.5 Q586.0 390.0 636.0 385.7 Q686.0 381.4 695.4 380.4 L704.8 379.4" stroke-width="4.28" stroke-opacity="0.56"/>
<path d="M501.6 398.1 Q595.4 393.9 640.7 392.0 Q686.0 390.0 703.2 388.6 L720.4 387.2" stroke-width="4.94" stroke-opacity="0.62"/>
<path d="M511.0 390.8 Q586.0 383.8 614.1 381.0 L642.2 378.3" stroke-width="3.29" stroke-opacity="0.50"/>
<path d="M492.2 393.9 L532.9 391.6" stroke-width="2.31" stroke-opacity="0.45"/>
<path d="M586.0 399.4 Q626.6 397.8 656.3 395.1 Q686.0 392.3 701.6 390.4 L717.2 388.4" stroke-width="2.63" stroke-opacity="0.50"/>
<ellipse cx="651.0" cy="321.0" rx="53.0" ry="55.0" stroke-width="2.43" stroke-opacity="0.60" transform="rotate(0.0 651.0 321.0)"/>
<ellipse cx="650.0" cy="320.0" rx="50.0" ry="54.0" stroke-width="2.03" stroke-opacity="0.55" transform="rotate(8.0 650.0 320.0)"/>
<ellipse cx="652.0" cy="322.0" rx="55.0" ry="53.0" stroke-width="1.89" stroke-opacity="0.50" transform="rotate(-6.0 652.0 322.0)"/>
<ellipse cx="651.0" cy="320.0" rx="47.0" ry="51.0" stroke-width="1.89" stroke-opacity="0.50" transform="rotate(0.0 651.0 320.0)"/>
<ellipse cx="650.0" cy="322.0" rx="56.0" ry="57.0" stroke-width="1.62" stroke-opacity="0.40" transform="rotate(12.0 650.0 322.0)"/>
<ellipse cx="653.0" cy="321.0" rx="51.0" ry="50.0" stroke-width="1.62" stroke-opacity="0.45" transform="rotate(-12.0 653.0 321.0)"/>
<ellipse cx="651.0" cy="322.0" rx="44.0" ry="48.0" stroke-width="1.49" stroke-opacity="0.40" transform="rotate(4.0 651.0 322.0)"/>
<rect x="598" y="266" width="106" height="110" rx="44" stroke-width="2.16" stroke-opacity="0.5"/>
<rect x="601" y="270" width="100" height="104" rx="38" stroke-width="1.76" stroke-opacity="0.45"/>
<rect x="604" y="268" width="98" height="110" rx="46" stroke-width="1.62" stroke-opacity="0.4"/>
<rect x="596" y="272" width="108" height="102" rx="40" stroke-width="1.49" stroke-opacity="0.4"/>
<path d="M604.8 290.0 Q595.4 321.2 598.5 338.4 Q601.6 355.6 614.1 363.4 Q626.6 371.2 642.2 372.8 L657.9 374.4" stroke-width="2.31" stroke-opacity="0.56"/>
<path d="M611.0 290.0 Q602.4 321.2 605.9 336.9 Q609.4 352.5 621.9 360.3 Q634.4 368.1 650.1 369.7 L665.7 371.2" stroke-width="1.97" stroke-opacity="0.56"/>
<path d="M598.5 290.0 Q593.8 336.9 599.3 350.9 Q604.8 365.0 619.6 371.2 Q634.4 377.5 654.0 377.5 L673.5 377.5" stroke-width="1.97" stroke-opacity="0.50"/>
<path d="M654.0 290.0 L654.4 371.2" stroke-width="4.94" stroke-opacity="0.67"/>
<path d="M657.2 290.0 L657.9 341.6" stroke-width="2.31" stroke-opacity="0.50"/>
<path d="M659.4 290.0 L659.8 371.2" stroke-width="1.65" stroke-opacity="0.39"/>
<path d="M607.9 318.9 Q642.2 321.2 664.1 322.7 L686.0 324.1" stroke-width="4.28" stroke-opacity="0.56"/>
<path d="M611.0 321.2 Q650.1 323.6 668.0 325.5 L686.0 327.5" stroke-width="1.97" stroke-opacity="0.45"/>
<path d="M623.5 290.0 L655.5 323.6 L686.0 354.1" stroke-width="2.31" stroke-opacity="0.62"/>
<path d="M628.2 290.0 L657.9 323.6 L686.0 349.4" stroke-width="1.97" stroke-opacity="0.50"/>
<path d="M686.0 290.0 L655.5 323.6 L634.4 345.0" stroke-width="2.31" stroke-opacity="0.62"/>
<path d="M682.9 296.2 L653.2 325.9 L631.3 344.7" stroke-width="1.65" stroke-opacity="0.45"/>
<path d="M607.9 347.8 Q642.2 349.4 664.1 350.0 L686.0 350.6" stroke-width="5.60" stroke-opacity="0.67"/>
<path d="M611.0 345.0 Q657.9 346.6 671.9 347.3 L686.0 348.1" stroke-width="3.29" stroke-opacity="0.50"/>
<path d="M614.1 352.5 L686.0 354.1" stroke-width="2.63" stroke-opacity="0.39"/>
<path d="M642.2 341.6 L686.0 344.7" stroke-width="1.97" stroke-opacity="0.39"/>
<path d="M701.0 330.6 L701.3 365.0" stroke-width="3.29" stroke-opacity="0.45"/>
<path d="M689.1 290.0 Q696.9 313.4 696.2 325.2 Q695.4 336.9 690.7 347.8 L686.0 358.8" stroke-width="2.63" stroke-opacity="0.56"/>
<path d="M696.9 290.0 Q701.6 321.2 698.5 335.3 Q695.4 349.4 690.7 357.2 L686.0 365.0" stroke-width="1.97" stroke-opacity="0.50"/>
<path d="M709.4 296.2 L737.6 299.4" stroke-width="4.94" stroke-opacity="0.62"/>
<path d="M709.4 321.2 L739.1 319.7" stroke-width="3.96" stroke-opacity="0.56"/>
<path d="M711.0 299.4 L737.6 301.7 L737.6 320.5 L711.0 320.5 Z" fill="#3a3a3a" fill-opacity="0.28" stroke="none"/>
<path d="M713.3 300.9 L713.7 319.7" stroke-width="2.63" stroke-opacity="0.34"/>
<path d="M718.0 300.9 L718.3 319.7" stroke-width="2.63" stroke-opacity="0.34"/>
<path d="M723.5 300.9 L723.8 319.7" stroke-width="2.63" stroke-opacity="0.34"/>
<path d="M728.2 300.9 L728.5 319.7" stroke-width="2.63" stroke-opacity="0.34"/>
<path d="M732.9 300.9 L733.2 319.7" stroke-width="2.63" stroke-opacity="0.34"/>
<path d="M737.6 299.4 L738.2 321.2" stroke-width="2.63" stroke-opacity="0.45"/>
<path d="M709.4 293.1 L709.4 325.9" stroke-width="3.29" stroke-opacity="0.50"/>
<path d="M753.2 296.2 L786.0 295.6" stroke-width="3.62" stroke-opacity="0.62"/>
<path d="M754.8 310.3 L786.0 311.9" stroke-width="3.96" stroke-opacity="0.56"/>
<path d="M756.3 315.0 L786.0 315.8" stroke-width="2.31" stroke-opacity="0.45"/>
<path d="M754.8 290.0 L755.4 315.0" stroke-width="3.96" stroke-opacity="0.56"/>
<path d="M786.0 290.0 L786.9 315.0" stroke-width="4.94" stroke-opacity="0.62"/>
<path d="M780.4 290.0 L780.7 302.5" stroke-width="3.29" stroke-opacity="0.67"/>
<path d="M748.2 290.0 L749.1 316.6" stroke-width="4.28" stroke-opacity="0.34"/>
<path d="M793.8 290.0 L795.4 310.3" stroke-width="3.62" stroke-opacity="0.56"/>
<path d="M795.4 308.8 L820.4 307.2" stroke-width="2.97" stroke-opacity="0.45"/>
<path d="M811.8 290.0 L812.6 305.6" stroke-width="2.31" stroke-opacity="0.45"/>
<path d="M820.4 290.0 L821.3 308.8" stroke-width="2.97" stroke-opacity="0.50"/>
<path d="M807.9 300.9 L821.9 300.3" stroke-width="1.97" stroke-opacity="0.45"/>
<path d="M832.9 290.0 L833.5 302.5" stroke-width="3.96" stroke-opacity="0.34"/>
<path d="M707.9 320.6 L764.1 319.1 L817.2 321.2 L818.8 330.9 L814.1 336.9 L764.1 335.6 L709.4 330.9 Z" fill="#2c2c2c" fill-opacity="0.55" stroke="none"/>
<path d="M709.4 330.9 L764.1 335.6 L814.1 336.9 L811.0 342.5 L732.9 341.6 L711.0 336.9 Z" fill="#2c2c2c" fill-opacity="0.3" stroke="none"/>
<path d="M707.9 323.6 Q764.1 323.6 790.7 325.5 L817.2 327.5" stroke-width="5.93" stroke-opacity="0.56"/>
<path d="M709.4 329.1 Q764.1 330.9 789.9 333.1 L815.7 335.3" stroke-width="4.94" stroke-opacity="0.56"/>
<path d="M732.9 336.9 L804.8 338.8" stroke-width="3.29" stroke-opacity="0.39"/>
<path d="M722.2 344.7 L782.9 346.2" stroke-width="4.28" stroke-opacity="0.45"/>
<path d="M723.5 349.4 L782.9 351.2" stroke-width="2.63" stroke-opacity="0.34"/>
<path d="M724.4 343.9 L724.9 374.4" stroke-width="3.62" stroke-opacity="0.50"/>
<path d="M728.5 343.1 L729.0 371.2" stroke-width="5.60" stroke-opacity="0.67"/>
<path d="M752.4 348.1 L752.9 368.1" stroke-width="4.28" stroke-opacity="0.56"/>
<path d="M756.0 348.1 L756.5 365.0" stroke-width="2.63" stroke-opacity="0.39"/>
<path d="M772.2 346.2 L772.7 382.2" stroke-width="4.28" stroke-opacity="0.62"/>
<path d="M777.6 347.0 L778.0 382.2" stroke-width="2.97" stroke-opacity="0.45"/>
<path d="M801.9 336.9 L802.4 383.8" stroke-width="2.97" stroke-opacity="0.67"/>
<path d="M807.1 338.4 L807.6 387.7" stroke-width="4.28" stroke-opacity="0.78"/>
<path d="M812.9 340.0 L813.3 386.9" stroke-width="2.63" stroke-opacity="0.62"/>
<path d="M729.8 346.2 L771.9 348.1 L771.9 368.1 L729.8 365.0 Z" fill="#2c2c2c" fill-opacity="0.22" stroke="none"/>
<path d="M736.0 347.8 L736.3 363.4" stroke-width="2.31" stroke-opacity="0.34"/>
<path d="M740.7 347.8 L741.0 363.4" stroke-width="2.31" stroke-opacity="0.34"/>
<path d="M745.4 347.8 L745.7 363.4" stroke-width="2.31" stroke-opacity="0.34"/>
<path d="M779.8 368.1 L801.6 368.9" stroke-width="2.63" stroke-opacity="0.39"/>
<path d="M779.8 377.5 L801.6 380.6" stroke-width="2.63" stroke-opacity="0.45"/>
<path d="M692.2 370.0 L723.5 368.1 L773.5 377.5 L826.6 383.8 L870.4 390.0 L870.4 394.7 L811.0 390.0 L748.5 382.2 L692.2 375.6 Z" fill="#2a2a2a" fill-opacity="0.5" stroke="none"/>
<path d="M679.8 372.5 Q732.9 371.2 764.1 376.7 Q795.4 382.2 818.8 385.3 L842.2 388.4" stroke-width="5.93" stroke-opacity="0.62"/>
<path d="M686.0 377.5 L729.8 379.8" stroke-width="4.94" stroke-opacity="0.50"/>
<path d="M686.0 386.9 L729.8 381.4" stroke-width="4.28" stroke-opacity="0.56"/>
<path d="M686.0 390.0 L732.9 383.8" stroke-width="2.63" stroke-opacity="0.45"/>
<path d="M732.9 402.0 Q773.5 390.0 792.2 390.0 L811.0 390.0" stroke-width="3.29" stroke-opacity="0.50"/>
<path d="M709.4 402.0 L764.1 386.9" stroke-width="2.63" stroke-opacity="0.45"/>
<path d="M754.8 402.0 L804.8 391.6" stroke-width="4.28" stroke-opacity="0.56"/>
<path d="M773.5 402.0 L811.0 393.1" stroke-width="2.63" stroke-opacity="0.50"/>
<path d="M717.2 377.5 Q773.5 390.0 789.1 396.0 L804.8 402.0" stroke-width="2.31" stroke-opacity="0.45"/>
<path d="M732.9 383.8 L786.0 397.8" stroke-width="1.97" stroke-opacity="0.39"/>
<path d="M864.1 319.7 Q854.8 293.1 847.7 294.7 Q840.7 296.2 832.9 304.8 L825.1 313.4" stroke-width="4.31" stroke-opacity="0.44"/>
<path d="M864.1 321.9 Q854.8 296.2 848.3 298.0 Q841.9 299.7 835.4 307.3 L829.0 315.0" stroke-width="3.06" stroke-opacity="0.45"/>
<path d="M864.1 319.7 Q851.6 297.8 842.2 300.2 Q832.9 302.5 825.1 313.4 L817.2 324.4" stroke-width="3.94" stroke-opacity="0.41"/>
<path d="M864.1 321.9 Q851.6 300.9 843.0 303.4 Q834.4 305.9 828.2 315.9 L821.9 325.9" stroke-width="3.23" stroke-opacity="0.45"/>
<path d="M864.1 319.7 Q850.1 305.6 839.1 308.0 Q828.2 310.3 820.4 322.8 L812.6 335.3" stroke-width="4.67" stroke-opacity="0.43"/>
<path d="M864.1 321.9 Q850.1 308.8 840.0 311.2 Q830.0 313.8 823.9 325.3 L817.7 336.9" stroke-width="2.69" stroke-opacity="0.45"/>
<path d="M864.1 319.7 Q851.6 313.4 840.7 316.6 Q829.8 319.7 821.9 333.0 L814.1 346.2" stroke-width="3.67" stroke-opacity="0.49"/>
<path d="M864.1 321.9 Q851.6 316.6 841.5 319.8 Q831.5 323.1 825.3 335.5 L819.1 347.8" stroke-width="3.27" stroke-opacity="0.45"/>
<path d="M864.1 319.7 Q854.8 321.2 845.4 325.9 Q836.0 330.6 829.0 343.1 L821.9 355.6" stroke-width="5.33" stroke-opacity="0.51"/>
<path d="M864.1 321.9 Q854.8 324.4 846.1 329.2 Q837.4 334.1 831.8 345.6 L826.2 357.2" stroke-width="2.32" stroke-opacity="0.45"/>
<path d="M864.1 319.7 Q857.9 325.9 851.6 332.2 Q845.4 338.4 841.5 350.2 L837.6 361.9" stroke-width="4.35" stroke-opacity="0.43"/>
<path d="M864.1 321.9 Q857.9 329.1 852.1 335.5 Q846.3 341.9 843.3 352.7 L840.2 363.4" stroke-width="3.00" stroke-opacity="0.45"/>
<path d="M864.1 319.7 Q871.9 293.1 877.4 294.7 Q882.9 296.2 886.8 303.3 L890.7 310.3" stroke-width="4.67" stroke-opacity="0.53"/>
<path d="M864.1 321.9 Q871.9 296.2 876.9 298.0 Q881.9 299.7 885.0 305.8 L888.0 311.9" stroke-width="2.42" stroke-opacity="0.45"/>
<path d="M864.1 319.7 Q875.1 297.8 881.3 300.9 Q887.6 304.1 891.5 312.7 L895.4 321.2" stroke-width="4.06" stroke-opacity="0.53"/>
<path d="M864.1 321.9 Q875.1 300.9 880.7 304.2 Q886.4 307.5 889.3 315.2 L892.2 322.8" stroke-width="3.28" stroke-opacity="0.45"/>
<path d="M864.1 319.7 Q876.6 305.6 883.7 308.8 Q890.7 311.9 893.8 322.8 L896.9 333.8" stroke-width="5.31" stroke-opacity="0.53"/>
<path d="M864.1 321.9 Q876.6 308.8 883.0 312.0 Q889.4 315.3 891.5 325.3 L893.7 335.3" stroke-width="3.05" stroke-opacity="0.45"/>
<path d="M864.1 319.7 Q875.1 313.4 881.3 318.1 Q887.6 322.8 890.7 333.8 L893.8 344.7" stroke-width="5.09" stroke-opacity="0.44"/>
<path d="M864.1 321.9 Q875.1 316.6 880.7 321.4 Q886.4 326.2 888.6 336.2 L890.8 346.2" stroke-width="2.66" stroke-opacity="0.45"/>
<path d="M864.1 319.7 Q871.9 321.2 877.4 326.7 Q882.9 332.2 885.2 343.1 L887.6 354.1" stroke-width="4.32" stroke-opacity="0.41"/>
<path d="M864.1 321.9 Q871.9 324.4 876.9 330.0 Q881.9 335.6 883.6 345.6 L885.2 355.6" stroke-width="2.01" stroke-opacity="0.45"/>
<path d="M864.1 319.7 Q862.6 288.4 860.2 281.4 Q857.9 274.4 854.0 271.2 L850.1 268.1" stroke-width="4.17" stroke-opacity="0.44"/>
<path d="M864.1 321.9 Q862.6 291.6 860.4 284.7 Q858.2 277.8 854.8 273.8 L851.5 269.7" stroke-width="2.89" stroke-opacity="0.45"/>
<path d="M864.1 319.7 Q865.7 288.4 868.0 281.4 Q870.4 274.4 872.7 271.2 L875.1 268.1" stroke-width="5.51" stroke-opacity="0.47"/>
<path d="M864.1 321.9 Q865.7 291.6 867.9 284.7 Q870.1 277.8 872.0 273.8 L874.0 269.7" stroke-width="3.21" stroke-opacity="0.45"/>
<path d="M864.1 319.7 Q859.4 291.6 853.2 286.1 Q846.9 280.6 842.2 280.6 L837.6 280.6" stroke-width="5.58" stroke-opacity="0.55"/>
<path d="M864.1 321.9 Q859.4 294.7 853.6 289.4 Q847.8 284.1 844.0 283.1 L840.2 282.2" stroke-width="2.46" stroke-opacity="0.45"/>
<path d="M864.1 319.7 Q868.8 291.6 874.3 286.1 Q879.8 280.6 882.9 281.4 L886.0 282.2" stroke-width="4.06" stroke-opacity="0.44"/>
<path d="M864.1 321.9 Q868.8 294.7 873.9 289.4 Q879.0 284.1 881.4 283.9 L883.8 283.8" stroke-width="2.24" stroke-opacity="0.45"/>
<path d="M861.0 308.8 L862.2 341.6" stroke-width="3.29" stroke-opacity="0.45"/>
<path d="M817.2 308.8 L842.2 302.5 L864.1 315.0 L864.1 341.6 L842.2 349.4 L818.8 346.2 L814.1 327.5 Z" fill="#2a2a2a" fill-opacity="0.35" stroke="none"/>
<path d="M865.7 338.4 Q850.1 343.1 843.0 353.3 L836.0 363.4" stroke-width="11.53" stroke-opacity="0.34"/>
<path d="M842.2 336.9 Q826.6 346.2 821.9 350.9 L817.2 355.6" stroke-width="9.88" stroke-opacity="0.34"/>
<path d="M867.2 340.0 Q854.8 344.7 848.5 354.8 L842.2 365.0" stroke-width="2.31" stroke-opacity="0.56"/>
<path d="M864.1 340.0 Q845.4 343.1 838.3 354.1 L831.3 365.0" stroke-width="2.31" stroke-opacity="0.56"/>
<path d="M826.6 355.6 L870.4 352.5" stroke-width="4.94" stroke-opacity="0.62"/>
<path d="M829.8 359.5 L868.8 356.4" stroke-width="3.29" stroke-opacity="0.45"/>
<path d="M827.4 357.2 L826.9 385.3" stroke-width="5.27" stroke-opacity="0.67"/>
<path d="M831.3 360.3 L831.0 383.8" stroke-width="2.63" stroke-opacity="0.45"/>
<path d="M869.1 352.5 L870.1 393.9" stroke-width="5.27" stroke-opacity="0.73"/>
<path d="M874.3 358.8 L874.8 390.0" stroke-width="2.97" stroke-opacity="0.45"/>
<path d="M870.4 355.6 L886.0 352.5" stroke-width="4.28" stroke-opacity="0.56"/>
<path d="M831.3 380.6 L868.8 383.8" stroke-width="3.96" stroke-opacity="0.50"/>
<path d="M832.9 386.9 L870.4 391.6" stroke-width="4.28" stroke-opacity="0.50"/>
<path d="M845.4 365.0 L846.0 380.6" stroke-width="3.29" stroke-opacity="0.39"/>
<path d="M853.2 366.6 L853.8 377.5" stroke-width="3.96" stroke-opacity="0.34"/>
<path d="M836.0 377.5 L864.1 379.8" stroke-width="2.31" stroke-opacity="0.39"/>
<path d="M962.6 332.2 Q963.8 355.6 962.9 376.7 L961.9 397.8" stroke-width="1.32" stroke-opacity="0.45"/>
<path d="M928.2 327.5 L928.5 341.6" stroke-width="1.65" stroke-opacity="0.45"/>
<path d="M886.0 326.2 Q909.4 327.5 921.2 327.7 L932.9 327.8" stroke-width="7.57" stroke-opacity="0.78"/>
<path d="M886.0 329.1 Q917.2 329.8 928.2 329.5 L939.1 329.1" stroke-width="4.28" stroke-opacity="0.50"/>
<path d="M917.2 333.8 L943.8 334.5" stroke-width="2.63" stroke-opacity="0.34"/>
<path d="M932.9 328.3 L973.5 332.2" stroke-width="1.65" stroke-opacity="0.56"/>
<path d="M886.0 293.1 Q904.8 299.4 910.2 304.8 L915.7 310.3" stroke-width="6.59" stroke-opacity="0.56"/>
<path d="M886.0 295.3 Q904.8 301.6 910.2 305.9 L915.7 310.3" stroke-width="3.29" stroke-opacity="0.45"/>
<path d="M886.0 300.9 Q903.2 307.2 910.2 313.0 L917.2 318.9" stroke-width="6.59" stroke-opacity="0.56"/>
<path d="M886.0 303.1 Q903.2 309.4 910.2 314.1 L917.2 318.9" stroke-width="3.29" stroke-opacity="0.45"/>
<path d="M886.0 310.3 Q898.5 315.0 903.2 320.5 L907.9 325.9" stroke-width="6.59" stroke-opacity="0.56"/>
<path d="M886.0 312.5 Q898.5 317.2 903.2 321.6 L907.9 325.9" stroke-width="3.29" stroke-opacity="0.45"/>
<path d="M886.0 333.8 Q904.8 336.9 911.8 340.0 L918.8 343.1" stroke-width="6.59" stroke-opacity="0.56"/>
<path d="M886.0 335.9 Q904.8 339.1 911.8 341.1 L918.8 343.1" stroke-width="3.29" stroke-opacity="0.45"/>
<path d="M886.0 340.0 Q901.6 344.7 906.3 349.4 L911.0 354.1" stroke-width="6.59" stroke-opacity="0.56"/>
<path d="M886.0 342.2 Q901.6 346.9 906.3 350.5 L911.0 354.1" stroke-width="3.29" stroke-opacity="0.45"/>
<path d="M886.0 329.1 Q900.1 332.2 904.8 336.9 L909.4 341.6" stroke-width="6.59" stroke-opacity="0.56"/>
<path d="M886.0 331.2 Q900.1 334.4 904.8 338.0 L909.4 341.6" stroke-width="3.29" stroke-opacity="0.45"/>
<path d="M886.0 351.2 L903.2 351.9" stroke-width="4.28" stroke-opacity="0.56"/>
<path d="M886.0 356.4 L901.6 357.2" stroke-width="2.97" stroke-opacity="0.45"/>
<path d="M898.2 352.5 L896.9 390.0" stroke-width="4.62" stroke-opacity="0.67"/>
<path d="M903.5 352.5 L901.6 393.1" stroke-width="3.29" stroke-opacity="0.39"/>
<path d="M886.0 385.3 L896.9 386.1" stroke-width="3.96" stroke-opacity="0.62"/>
<path d="M906.3 359.5 L943.8 358.8" stroke-width="1.32" stroke-opacity="0.50"/>
<path d="M886.0 365.0 L893.8 374.4" stroke-width="1.32" stroke-opacity="0.34"/>
<path d="M886.0 387.7 Q921.9 388.4 936.8 393.1 L951.6 397.8" stroke-width="5.93" stroke-opacity="0.50"/>
<path d="M886.0 393.1 Q932.9 396.2 943.8 397.8 L954.8 399.4" stroke-width="4.94" stroke-opacity="0.56"/>
<path d="M901.6 391.6 L948.5 400.2" stroke-width="3.29" stroke-opacity="0.45"/>
<path d="M886.0 399.4 L951.6 402.0" stroke-width="4.28" stroke-opacity="0.56"/>
<path d="M961.0 397.8 L995.4 402.0" stroke-width="1.65" stroke-opacity="0.45"/>
<path d="M495.4 402.8 Q507.9 401.2 517.2 400.6 L526.6 400.0" stroke-width="2.63" stroke-opacity="0.50"/>
<path d="M522.2 423.4 Q564.1 416.4 603.2 409.0 L642.2 401.6" stroke-width="3.96" stroke-opacity="0.56"/>
<path d="M548.5 423.4 Q595.4 415.6 618.8 410.2 L642.2 404.7" stroke-width="1.65" stroke-opacity="0.45"/>
<path d="M642.2 400.0 Q579.8 406.2 556.3 407.8 Q532.9 409.4 531.3 411.7 Q529.8 414.1 539.1 414.8 Q548.5 415.6 571.9 412.5 L595.4 409.4" stroke-width="3.62" stroke-opacity="0.50"/>
<path d="M595.4 400.0 Q548.5 404.7 535.2 405.5 Q521.9 406.2 522.7 408.4 Q523.5 410.6 537.6 409.2 L551.6 407.8" stroke-width="2.63" stroke-opacity="0.50"/>
<path d="M657.9 400.0 L595.4 407.8" stroke-width="4.94" stroke-opacity="0.45"/>
<path d="M578.2 450.9 Q611.0 435.9 648.5 425.8 L686.0 415.6" stroke-width="2.31" stroke-opacity="0.56"/>
<path d="M586.0 446.9 Q626.6 433.6 656.3 426.2 L686.0 418.8" stroke-width="5.60" stroke-opacity="0.45"/>
<path d="M592.2 446.1 Q634.4 435.9 660.2 429.7 L686.0 423.4" stroke-width="3.96" stroke-opacity="0.50"/>
<path d="M611.0 433.6 Q657.9 418.8 671.9 414.8 L686.0 410.9" stroke-width="2.63" stroke-opacity="0.50"/>
<path d="M654.8 418.8 Q670.4 412.5 678.2 410.9 L686.0 409.4" stroke-width="4.28" stroke-opacity="0.45"/>
<path d="M642.2 403.1 L686.0 412.5" stroke-width="2.63" stroke-opacity="0.56"/>
<path d="M651.6 400.0 L686.0 406.2" stroke-width="3.29" stroke-opacity="0.56"/>
<path d="M659.4 491.6 L686.0 478.1" stroke-width="1.97" stroke-opacity="0.56"/>
<path d="M679.8 468.8 Q682.9 465.6 684.4 464.8 L686.0 464.1" stroke-width="2.63" stroke-opacity="0.56"/>
<path d="M676.6 460.2 L686.0 457.8" stroke-width="3.29" stroke-opacity="0.56"/>
<path d="M686.0 415.6 Q732.9 407.8 756.3 403.9 L779.8 400.0" stroke-width="6.59" stroke-opacity="0.62"/>
<path d="M686.0 420.3 Q732.9 413.3 759.4 408.2 L786.0 403.1" stroke-width="4.94" stroke-opacity="0.50"/>
<path d="M686.0 409.4 Q726.6 403.1 739.1 401.6 L751.6 400.0" stroke-width="3.96" stroke-opacity="0.50"/>
<path d="M686.0 425.0 Q748.5 412.5 776.6 406.2 L804.8 400.0" stroke-width="2.63" stroke-opacity="0.45"/>
<path d="M873.5 400.0 Q795.4 432.8 755.5 450.8 L715.7 468.8" stroke-width="9.88" stroke-opacity="0.56"/>
<path d="M861.0 401.6 Q786.0 434.4 756.3 447.7 L726.6 460.9" stroke-width="6.59" stroke-opacity="0.67"/>
<path d="M879.8 401.6 Q804.8 434.4 773.5 448.4 L742.2 462.5" stroke-width="4.94" stroke-opacity="0.50"/>
<path d="M842.2 409.4 Q773.5 437.5 747.7 448.4 L721.9 459.4" stroke-width="3.96" stroke-opacity="0.56"/>
<path d="M886.0 406.2 Q811.0 439.1 779.8 451.6 L748.5 464.1" stroke-width="2.63" stroke-opacity="0.45"/>
<path d="M811.0 400.0 Q748.5 429.7 717.2 443.8 L686.0 457.8" stroke-width="8.23" stroke-opacity="0.39"/>
<path d="M817.2 403.1 Q751.6 434.4 721.2 449.2 L690.7 464.1" stroke-width="4.94" stroke-opacity="0.45"/>
<path d="M795.4 412.5 Q732.9 440.6 709.4 451.6 L686.0 462.5" stroke-width="3.29" stroke-opacity="0.45"/>
<path d="M782.9 428.1 Q717.2 459.4 701.6 468.8 L686.0 478.1" stroke-width="2.63" stroke-opacity="0.50"/>
<path d="M715.7 468.8 Q719.6 470.0 726.2 467.8 L732.9 465.6" stroke-width="2.31" stroke-opacity="0.56"/>
<path d="M690.7 464.1 Q695.4 465.6 706.3 462.5 L717.2 459.4" stroke-width="1.97" stroke-opacity="0.50"/>
<path d="M686.0 415.6 L748.5 425.0" stroke-width="1.97" stroke-opacity="0.56"/>
<path d="M686.0 406.2 Q720.4 417.2 736.0 421.5 L751.6 425.8" stroke-width="1.65" stroke-opacity="0.50"/>
<path d="M767.2 432.8 Q811.0 445.3 832.1 451.2 L853.2 457.0" stroke-width="1.97" stroke-opacity="0.56"/>
<path d="M770.4 435.9 Q804.8 446.9 819.6 452.3 L834.4 457.8" stroke-width="2.63" stroke-opacity="0.39"/>
<path d="M842.2 417.2 L886.0 425.0" stroke-width="2.31" stroke-opacity="0.50"/>
<path d="M845.4 420.3 L886.0 428.9" stroke-width="1.65" stroke-opacity="0.45"/>
<path d="M773.5 400.0 L795.4 406.2" stroke-width="1.65" stroke-opacity="0.45"/>
<path d="M793.8 494.7 Q842.2 467.2 864.1 454.1 L886.0 440.9" stroke-width="2.15" stroke-opacity="0.56"/>
<path d="M886.0 450.0 Q826.6 487.5 814.1 495.7 Q801.6 503.9 800.1 502.7 Q798.5 501.6 804.8 496.9 L811.0 492.2" stroke-width="2.15" stroke-opacity="0.56"/>
<path d="M845.4 489.1 Q865.7 473.4 875.8 465.8 L886.0 458.1" stroke-width="2.31" stroke-opacity="0.56"/>
<path d="M861.0 487.8 Q873.5 476.6 879.8 471.4 L886.0 466.2" stroke-width="2.63" stroke-opacity="0.50"/>
<path d="M859.4 475.0 L886.0 454.7" stroke-width="4.94" stroke-opacity="0.45"/>
<path d="M951.6 400.0 L951.3 410.9" stroke-width="4.94" stroke-opacity="0.78"/>
<path d="M955.4 400.0 L955.1 411.7" stroke-width="4.28" stroke-opacity="0.67"/>
<path d="M953.2 400.0 Q917.2 425.0 901.6 435.9 L886.0 446.9" stroke-width="7.57" stroke-opacity="0.78"/>
<path d="M948.5 404.7 Q914.1 429.7 900.1 441.4 L886.0 453.1" stroke-width="4.28" stroke-opacity="0.56"/>
<path d="M937.6 417.2 Q904.8 445.3 895.4 454.7 L886.0 464.1" stroke-width="3.29" stroke-opacity="0.50"/>
<path d="M914.1 435.3 Q971.9 446.9 1001.6 452.0 L1031.3 457.2" stroke-width="1.81" stroke-opacity="0.56"/>
<path d="M920.4 438.3 Q948.5 444.5 957.9 445.7 L967.2 446.9" stroke-width="1.65" stroke-opacity="0.39"/>
<path d="M956.3 404.7 L1015.7 408.8" stroke-width="1.65" stroke-opacity="0.45"/>
<path d="M964.1 400.3 L1015.7 403.4" stroke-width="1.32" stroke-opacity="0.39"/>
<path d="M954.8 406.2 L989.1 410.3" stroke-width="1.65" stroke-opacity="0.39"/>
<path d="M886.0 425.0 L929.8 431.2" stroke-width="1.97" stroke-opacity="0.45"/>
<path d="M886.0 428.1 L904.8 429.7" stroke-width="1.65" stroke-opacity="0.39"/>
<path d="M903.2 424.4 L937.6 406.2" stroke-width="1.65" stroke-opacity="0.50"/>
<path d="M886.0 403.1 Q948.5 410.9 957.9 412.1 L967.2 413.3" stroke-width="2.31" stroke-opacity="0.39"/>
<path d="M886.0 407.8 Q932.9 406.2 942.2 403.9 L951.6 401.6" stroke-width="3.96" stroke-opacity="0.39"/>
<path d="M886.0 400.0 L951.6 403.1" stroke-width="4.94" stroke-opacity="0.45"/>
</g></svg></div>
<div class="a" style="left:1091.5px;top:68.8px;width:154px;height:134.7px;border:1px solid #5b6b80;border-left-color:#46566a"></div>
<div class="a" style="left:1093px;top:253px;width:72px;height:11.6px;background:#2b2b2b;border:1px solid #282828;border-radius:2px"></div>
<div class="t d" style="left:1096px;top:254px">34.3%</div>
<svg style="left:1156.2px;top:257px" width="6" height="4" viewBox="0 0 6 4" fill="#c8c8c8"><path d="M0.4 0.5 h5 l-2.5 2.6z"/></svg>
<div class="a" style="left:1167.4px;top:257.8px;width:96.6px;height:1.2px;background:#262626"></div>
<div class="a" style="left:1167.4px;top:257.6px;width:28px;height:1.6px;background:#54789c"></div>
<div class="a" style="left:1193.4px;top:254.4px;width:5px;height:8px;background:#585858;border-radius:1px"></div>
<svg style="left:1266.5px;top:253.5px" width="12" height="10" viewBox="0 0 12 10" fill="none" stroke="#dcdcdc" stroke-width="1"><rect x="0.8" y="0.8" width="10" height="6.4"/><rect x="3" y="2.6" width="5.6" height="2.8" fill="#dcdcdc" stroke="none"/><path d="M5.8 7.2 V9 M3.4 9.2 H8.2"/></svg>
<div class="a" style="left:1094.6px;top:267.6px;width:13.4px;height:13.4px;border-radius:50%;background:#1d1d1d"></div>
<svg style="left:1096.6px;top:271.3px" width="10" height="6" viewBox="0 0 10 6" fill="none" stroke="#e0e0e0" stroke-width="0.9"><path d="M1 3 H9 M2.6 1.4 L1 3 L2.6 4.6 M7.4 1.4 L9 3 L7.4 4.6"/></svg>
<div class="a" style="left:1111.5px;top:268px;width:43px;height:13px;background:#232323"></div>
<div class="t" style="left:1113.6px;top:269.6px;color:#e0e0e0">0.00°</div>
<div class="a" style="left:1154.5px;top:268px;width:7px;height:13px;background:#2b2b2b"></div>
<svg style="left:1154.5px;top:268px" width="7" height="13" viewBox="0 0 7 13" fill="#bdbdbd"><path d="M1.4 5 L3.5 2.8 L5.6 5 Z M1.4 8 L3.5 10.2 L5.6 8 Z"/></svg>
<svg style="left:1209px;top:269.5px" width="10" height="10" viewBox="0 0 10 10" fill="none" stroke="#dcdcdc" stroke-width="1"><path d="M5 0.4 V9.6"/><rect x="1" y="2.4" width="3" height="5.2"/><rect x="6" y="2.4" width="3" height="5.2" fill="#dcdcdc"/></svg>
<div class="a" style="left:1264.5px;top:268px;width:13.5px;height:13px;background:#2a2a2a;border-radius:1px"></div>
<svg style="left:1266px;top:269.5px" width="10" height="10" viewBox="0 0 12 12" fill="#e0e0e0" stroke="#e0e0e0"><path d="M6.6 0.8 L11.2 5.4 L9.6 5.8 L7.8 7.6 L7.6 10 L2 4.4 L4.4 4.2 L6.2 2.4 Z" stroke="none"/><path d="M4.6 7.4 L0.8 11.2" stroke-width="1.2"/></svg>
<div class="a" style="left:1182px;top:284.8px;width:10px;height:1px;background:repeating-linear-gradient(90deg,#666 0 1px,transparent 1px 2px)"></div>
<div class="a" style="left:1093.0px;top:288.0px;width:37.0px;height:15.0px;background:#353535;border:1px solid #3d3d3d;border-bottom:none;border-radius:2px 2px 0 0"></div>
<div class="t d" style="left:1093.0px;top:291.0px;width:37.0px;text-align:center">Layers</div>
<div class="a" style="left:1131.0px;top:288.0px;width:72.0px;height:15.0px;background:#2f2f2f;border:1px solid #3d3d3d;border-bottom:none;border-radius:2px 2px 0 0"></div>
<div class="t d" style="left:1131.0px;top:291.0px;width:72.0px;text-align:center">Comics Manager</div>
<svg style="left:1093.0px;top:303.0px" width="11" height="11" viewBox="0 0 11 11" fill="none" stroke="#dcdcdc" stroke-width="1"><circle cx="5.5" cy="5.5" r="4.7"/><rect x="3.2" y="5.2" width="4.6" height="3.2" fill="#dcdcdc" stroke="none"/><path d="M4 5.2 V4.2 A1.5 1.5 0 0 1 7 4.2 V5.2" stroke-width="0.9"/></svg><div class="t d" style="left:1107.5px;top:303.5px">Layers</div><svg style="left:1256.0px;top:303.5px" width="10" height="9" viewBox="0 0 10 9" fill="none" stroke="#dcdcdc" stroke-width="1.1"><path d="M3.4 3 V0.8 H9.2 V5 H6.4"/><rect x="0.7" y="3.2" width="5.6" height="4.8" fill="#323232"/></svg><svg style="left:1270.3px;top:304.0px" width="8" height="8" viewBox="0 0 8 8" fill="none" stroke="#dcdcdc" stroke-width="1.2" stroke-linecap="round"><path d="M1 1 L7 7 M7 1 L1 7"/></svg>
<div class="a" style="left:1093px;top:315px;width:165.5px;height:17.5px;background:#2d2d2d;border:1px solid #292929;border-radius:2px"></div>
<div class="t d" style="left:1096px;top:319.2px">Normal</div>
<svg style="left:1250.2px;top:322.4px" width="6" height="4" viewBox="0 0 6 4" fill="#c8c8c8"><path d="M0.4 0.5 h5 l-2.5 2.6z"/></svg>
<svg style="left:1264.5px;top:318px" width="14" height="13" viewBox="0 0 14 13" fill="none" stroke="#dcdcdc" stroke-width="1.1" stroke-linejoin="round"><path d="M1 1 H10 L6.6 5.4 V10 L4.4 8.6 V5.4 Z"/><path d="M10.6 10.6 h2.6 l-1.3 1.6z" fill="#c8c8c8" stroke="none"/></svg>
<div class="a" style="left:1093px;top:335px;width:157.8px;height:16.7px;background:#54789c"></div>
<div class="t d" style="left:1093px;top:339px;width:157.8px;text-align:center;white-space:pre;color:#f0f0f0">Opacity:  100%</div>
<div class="a" style="left:1251px;top:335px;width:8px;height:16.7px;background:#2a2a2a"></div>
<svg style="left:1251px;top:335px" width="8" height="17" viewBox="0 0 8 17" fill="#bdbdbd"><path d="M1.8 6.4 L4 4 L6.2 6.4 Z M1.8 10.8 L4 13.2 L6.2 10.8 Z"/></svg>
<svg style="left:1265.5px;top:339px" width="12" height="12" viewBox="0 0 12 12" stroke="#dcdcdc" stroke-width="1.2"><path d="M0.6 1.6 H8.4 M0.6 4.4 H8.4 M0.6 7.2 H8.4"/><path d="M8.6 9.4 h2.6 l-1.3 1.6z" fill="#c8c8c8" stroke="none"/></svg>
<div class="a" style="left:1092px;top:354.5px;width:188px;height:245.5px;background:#1e1e1e"></div>
<div class="a" style="left:1120.2px;top:370.6px;width:159.8px;height:16.3px;background:#54789c"></div>
<svg style="left:1094.2px;top:358.2px" width="11" height="9" viewBox="0 0 11 9"><path d="M0.6 4 C2.6 0.6 8.4 0.6 10.4 4 C8.4 7 2.6 7 0.6 4 Z" fill="#e6e6e6"/><circle cx="5.5" cy="3.8" r="2" fill="#1e1e1e"/><circle cx="4.9" cy="3.2" r="0.7" fill="#e6e6e6"/><path d="M1.4 6.6 C3.6 8.6 7.4 8.6 9.6 6.6" stroke="#9a9a9a" stroke-width="0.8" fill="none"/></svg>
<div class="t d" style="left:1153.7px;top:357.9px;color:#e0e0e0">draft</div>
<svg style="left:1246px;top:357.7px" width="34" height="10" viewBox="0 0 34 10" fill="none"><rect x="0.8" y="4" width="6" height="5" fill="#565656"/><path d="M2 4 V2.6 A1.8 1.8 0 0 1 5.6 2.6 V4" stroke="#565656" stroke-width="1"/><text x="10.4" y="8.6" font-size="10" font-family="DejaVu Sans,Liberation Sans,sans-serif" fill="#5c5c5c">α</text><rect x="22.4" y="1" width="9" height="8" fill="url(#lck0)"/></svg>
<svg style="left:1094.2px;top:374.6px" width="11" height="9" viewBox="0 0 11 9"><path d="M0.6 4 C2.6 0.6 8.4 0.6 10.4 4 C8.4 7 2.6 7 0.6 4 Z" fill="#e6e6e6"/><circle cx="5.5" cy="3.8" r="2" fill="#1e1e1e"/><circle cx="4.9" cy="3.2" r="0.7" fill="#e6e6e6"/><path d="M1.4 6.6 C3.6 8.6 7.4 8.6 9.6 6.6" stroke="#9a9a9a" stroke-width="0.8" fill="none"/></svg>
<div class="t d" style="left:1162.0px;top:374.3px;font-weight:bold;color:#fff">1</div>
<svg style="left:1246px;top:374.1px" width="34" height="10" viewBox="0 0 34 10" fill="none"><rect x="0.8" y="4" width="6" height="5" fill="#7f9cb8"/><path d="M2 4 V2.6 A1.8 1.8 0 0 1 5.6 2.6 V4" stroke="#7f9cb8" stroke-width="1"/><text x="10.4" y="8.6" font-size="10" font-family="DejaVu Sans,Liberation Sans,sans-serif" fill="#8aa3bd">α</text><rect x="22.4" y="1" width="9" height="8" fill="url(#lck1)"/></svg>
<svg style="left:1094.2px;top:390.8px" width="11" height="9" viewBox="0 0 11 9"><path d="M0.6 4 C2.6 0.6 8.4 0.6 10.4 4 C8.4 7 2.6 7 0.6 4 Z" fill="#e6e6e6"/><circle cx="5.5" cy="3.8" r="2" fill="#1e1e1e"/><circle cx="4.9" cy="3.2" r="0.7" fill="#e6e6e6"/><path d="M1.4 6.6 C3.6 8.6 7.4 8.6 9.6 6.6" stroke="#9a9a9a" stroke-width="0.8" fill="none"/></svg>
<div class="t d" style="left:1153.7px;top:390.5px;color:#e0e0e0">Background</div>
<svg style="left:1246px;top:390.3px" width="34" height="10" viewBox="0 0 34 10" fill="none"><rect x="0.8" y="4" width="6" height="5" fill="#f0f0f0"/><path d="M2 4 V2.6 A1.8 1.8 0 0 1 5.6 2.6 V4" stroke="#f0f0f0" stroke-width="1"/><text x="10.4" y="8.6" font-size="10" font-family="DejaVu Sans,Liberation Sans,sans-serif" fill="#5c5c5c">α</text><rect x="22.4" y="1" width="9" height="8" fill="url(#lck0)"/></svg>
<svg width="0" height="0"><defs><pattern id="lck0" width="4" height="4" patternUnits="userSpaceOnUse"><rect width="4" height="4" fill="#3c3c3c"/><rect width="2" height="2" fill="#606060"/><rect x="2" y="2" width="2" height="2" fill="#606060"/></pattern><pattern id="lck1" width="4" height="4" patternUnits="userSpaceOnUse"><rect width="4" height="4" fill="#6a8cae"/><rect width="2" height="2" fill="#8fb0d0"/><rect x="2" y="2" width="2" height="2" fill="#8fb0d0"/></pattern></defs></svg>
<svg style="left:1109.5px;top:375.6px" width="8" height="7" viewBox="0 0 8 7" fill="none" stroke="#e6e6e6" stroke-width="1.1"><path d="M0.8 3.8 L2.8 6 L7.2 0.8"/></svg>
<div class="a" style="left:1122px;top:358px;width:13.2px;height:9.4px;background:#f4f4f4"></div>
<svg style="left:1122px;top:358px" width="13.2" height="9.4" viewBox="0 0 13.2 9.4" stroke="#555" stroke-width="0.6" fill="none"><path d="M1.6 2.6 H9 V6.4 H1.6 Z M3.4 2.6 V6.4 M5.4 3 A1.6 1.6 0 1 0 5.41 3 M7.4 2 V6.6 M2 7.4 L8 6.6 M9 3 L11 2.6"/></svg>
<div class="a" style="left:1129.8px;top:374.6px;width:13px;height:9px;background:#f4f4f4"></div>
<svg style="left:1129.8px;top:374.6px" width="13" height="9" viewBox="0 0 13.2 9.4" stroke="#555" stroke-width="0.6" fill="none"><path d="M1.6 2.6 H9 V6.4 H1.6 Z M3.4 2.6 V6.4 M5.4 3 A1.6 1.6 0 1 0 5.41 3 M7.4 2 V6.6 M2 7.4 L8 6.6 M9 3 L11 2.6"/></svg>
<div class="a" style="left:1122.6px;top:378px;width:4.4px;height:5.6px;border-left:1px solid #3d5a78;border-bottom:1px solid #3d5a78"></div>
<div class="a" style="left:1122px;top:390.6px;width:13.2px;height:9.4px;background:#f1e6dc"></div>
<svg style="left:1137.6px;top:355.4px" width="9" height="14" viewBox="0 0 9 14" fill="none" stroke="#dcdcdc" stroke-width="0.9"><path d="M1.4 1.2 H3.4 L4.2 2 H7.4 V6.4 H1.4 Z M1.4 2.8 H7.4"/><path d="M1.6 9.6 L4.4 12.2 L7.2 9.6" stroke-width="1"/></svg>
<svg style="left:1145.6px;top:372px" width="8" height="8" viewBox="0 0 8 8" fill="none" stroke="#e6e6e6" stroke-width="0.9"><path d="M1 1 H7 V4.6 L4.6 7 H1.8 M1 1 L2.6 4.4"/></svg>
<svg style="left:1138px;top:388.4px" width="8" height="8" viewBox="0 0 8 8" fill="none" stroke="#dcdcdc" stroke-width="0.9"><path d="M1 1 H7 V4.6 L4.6 7 H1.8 M1 1 L2.6 4.4"/></svg>
<div class="a" style="left:1092px;top:600px;width:188px;height:19px;background:#323232"></div>
<svg style="left:1080px;top:600px" width="200" height="19" viewBox="1080 600 200 19" fill="none" stroke="#dcdcdc" stroke-width="1.3"><path d="M1101 603.4 V614.4 M1095.4 609 H1106.6"/><rect x="1122.6" y="606.4" width="6.6" height="6.6"/><path d="M1125.4 606 V603.6 H1132.2 V610.2 H1129.6"/><g fill="#bdbdbd" stroke="none"><path d="M1111.6 607.6 h4.4 l-2.2 2.4z M1139.6 607.6 h4.4 l-2.2 2.4z"/></g><path d="M1265.8 605.8 H1274.6 M1268.6 605.4 V604 H1271.8 V605.4" stroke-width="1.1"/><path d="M1266.8 607.2 H1273.6 V614.6 H1266.8 Z" fill="#dcdcdc" stroke="none"/></svg>

<!--status-->
<div class="t" style="left:394.6px;top:624.6px;white-space:pre;color:#cfcfcf;font-size:7.9px">RGB/Alpha (8-bit integer/channel)  sRGB-elle-V2-srgbtrc.icc</div>
<div class="t" style="left:176px;top:624.6px;color:#cfcfcf">Size</div>
<div class="t" style="left:958px;top:624.6px;color:#d4d4d4;font-size:7.9px">3,508 <u>x</u> 2,480 (78.8 MiB)</div>
<div class="a" style="left:1063.6px;top:622.6px;width:12.8px;height:12.8px;border-radius:50%;background:#1f1f1f"></div>
<svg style="left:1065.2px;top:626.2px" width="10" height="6" viewBox="0 0 10 6" fill="none" stroke="#d8d8d8" stroke-width="0.9"><path d="M1 3 H9 M2.6 1.4 L1 3 L2.6 4.6 M7.4 1.4 L9 3 L7.4 4.6"/></svg>
<div class="t" style="left:1083px;top:624.6px;color:#d4d4d4;font-size:7.9px">0.00°</div>
<div class="a" style="left:1222px;top:628.6px;width:40px;height:1px;background:#262626"></div>
<div class="a" style="left:1230px;top:625px;width:5px;height:8px;background:#505050;border-radius:1px"></div>
<svg style="left:1266.5px;top:624px" width="12" height="10" viewBox="0 0 12 10" fill="none" stroke="#dcdcdc" stroke-width="1"><rect x="0.8" y="0.8" width="10" height="6.4"/><rect x="3" y="2.6" width="5.6" height="2.8" fill="#dcdcdc" stroke="none"/><path d="M5.8 7.2 V9 M3.4 9.2 H8.2"/></svg>


</div>
<div class="a" style="left:0;top:0;width:1280px;height:720px;font-family:'Liberation Serif','DejaVu Serif',serif;color:#fff;-webkit-text-stroke:0.45px #fff"><span class="a" style="left:242.0px;top:659.3px;font-size:47.5px;line-height:47.5px;">0</span><span class="a" style="left:263.2px;top:659.3px;font-size:47.5px;line-height:47.5px;transform:scaleX(0.86);">1</span><span class="a" style="left:291.0px;top:659.3px;font-size:47.5px;line-height:47.5px;-webkit-text-stroke:0;transform:translateY(3.6px) rotate(9.5deg) scale(1.42);transform-origin:50% 23.8px;">/</span><span class="a" style="left:309.6px;top:659.3px;font-size:47.5px;line-height:47.5px;transform:scaleX(0.86);">1</span><span class="a" style="left:328.8px;top:659.3px;font-size:47.5px;line-height:47.5px;">6</span><span class="a" style="left:359.7px;top:659.3px;font-size:47.5px;line-height:47.5px;-webkit-text-stroke:0;transform:translateY(3.6px) rotate(9.5deg) scale(1.42);transform-origin:50% 23.8px;">/</span><span class="a" style="left:381.2px;top:659.3px;font-size:47.5px;line-height:47.5px;">2</span><span class="a" style="left:405.8px;top:659.3px;font-size:47.5px;line-height:47.5px;">0</span><span class="a" style="left:430.2px;top:659.3px;font-size:47.5px;line-height:47.5px;">2</span><span class="a" style="left:454.1px;top:659.3px;font-size:47.5px;line-height:47.5px;">6</span> <span class="a" style="left:491.4px;top:659.3px;font-size:47.5px;line-height:47.5px;">a</span><span class="a" style="left:514.3px;top:659.3px;font-size:47.5px;line-height:47.5px;">t</span> <span class="a" style="left:537.0px;top:659.3px;font-size:47.5px;line-height:47.5px;transform:scaleX(0.86);">1</span><span class="a" style="left:552.3px;top:659.3px;font-size:47.5px;line-height:47.5px;transform:scaleX(0.86);">1</span><span class="a" style="left:570.9px;top:659.3px;font-size:47.5px;line-height:47.5px;">:</span><span class="a" style="left:578.8px;top:659.3px;font-size:47.5px;line-height:47.5px;transform:scaleX(0.86);">1</span><span class="a" style="left:597.8px;top:659.3px;font-size:47.5px;line-height:47.5px;">3</span><span class="a" style="left:621.8px;top:659.3px;font-size:47.5px;line-height:47.5px;">:</span><span class="a" style="left:634.8px;top:659.3px;font-size:47.5px;line-height:47.5px;">0</span><span class="a" style="left:655.5px;top:659.3px;font-size:47.5px;line-height:47.5px;">7</span> <span class="a" style="left:688.4px;top:659.9px;font-size:46.8px;line-height:46.8px;transform:scaleX(0.9);">A</span><span class="a" style="left:718.3px;top:659.9px;font-size:46.8px;line-height:46.8px;transform:scaleX(0.9);">M</span></div>
<div class="a" style="left:810.6px;top:639.8px;font-family:'Liberation Serif',serif;font-size:39.2px;line-height:39.2px;color:#fff;white-space:nowrap;-webkit-text-stroke:0.25px #fff">sorry for the scuff</div>
<div class="a" style="left:810.6px;top:673.6px;font-family:'Liberation Serif',serif;font-size:39.2px;line-height:39.2px;color:#fff;white-space:nowrap;-webkit-text-stroke:0.25px #fff">I have trash internet...</div>
<svg style="left:0;top:430px" width="210" height="290" viewBox="0 430 210 290">
<defs>
<linearGradient id="b1neck" gradientUnits="userSpaceOnUse" x1="0" y1="548" x2="0" y2="588"><stop offset="0" stop-color="#ba967c"/><stop offset="0.5" stop-color="#c6a48a"/><stop offset="1" stop-color="#efe2d6"/></linearGradient>
</defs>
<g stroke="#1a1212" stroke-width="1" stroke-linejoin="round" stroke-linecap="round">
<!-- vest back -->
<path d="M58 578 L100 585 L153 596 L161 640 L162 720 L62 720 L61 684 L52 640 L48 600 Z" fill="#b5665e"/>
<!-- left sleeve (viewer left) -->
<path d="M58 578 C44 580 34 586 31 592 C34 622 44 652 60 672 C66 690 78 704 95 710 C104 700 112 686 118 671 C110 660 104 650 98 640 C92 628 88 622 84 612 C78 600 70 588 58 578 Z" fill="#f6f2ec"/>
<!-- right sleeve -->
<path d="M152 588 C160 600 172 630 188 668 C186 676 180 682 174 684 L150 682 C156 668 158 656 154 648 C150 628 148 610 146 598 Z" fill="#f6f2ec"/>
<!-- lapels / collar -->
<path d="M84 596 L100 588 L118 600 L108 612 Z" fill="#b5665e"/>
<path d="M122 604 L130 600 L137 646 L131 640 Z" fill="#4a4444"/>
<!-- horizontal forearm -->
<path d="M116 650 C134 646 152 648 166 654 C170 662 169 672 164 678 C148 680 132 676 118 672 Z" fill="#eadfd0"/>
<!-- vertical forearm + hand -->
<path d="M88 634 C96 618 108 604 116 592 C118 580 124 570 132 564 L150 558 C158 560 160 566 158 572 C160 580 158 588 152 594 C146 600 140 604 134 606 C126 616 120 634 116 652 C114 664 108 668 100 668 C92 664 86 650 88 634 Z" fill="#efe4d6"/>
<!-- tucked hand -->
<path d="M72 628 C76 624 84 624 88 628 L84 644 C78 646 72 640 72 628 Z" fill="#eadfd0"/>
</g>
<!-- sleeve fold lines -->
<g fill="none" stroke="#1a1212" stroke-width="0.8" stroke-linecap="round">
<path d="M52 600 C60 604 68 610 74 618 M44 612 C54 616 62 622 68 630 M62 640 C68 650 72 660 72 670 M76 654 C82 664 84 676 82 688 M92 676 C98 684 100 694 98 702 M160 624 C166 632 172 642 176 654 M156 640 C162 650 166 660 168 672"/>
<path d="M137.8 691 v0.1 M138.2 716 v0.1" stroke-width="4" stroke="#5a3030"/>
<path d="M130.5 678 L131.5 720" stroke-width="0.9"/>
</g>
<!-- head -->
<path d="M73 452 C86 451 100 458 109 469 C118 482 123 500 127 520 C131 540 133 552 131 562 L124 566 L120 580 L112 586 L106 580 L100 590 L92 582 L84 590 L76 580 L68 584 L62 574 L56 572 L57 562 C52 552 46 540 42 530 C34 514 30 498 33 488 C36 472 52 455 73 452 Z" fill="url(#b1neck)" stroke="#1a1212" stroke-width="1" stroke-linejoin="round"/>
<path d="M57 564 L62 574 L68 584 L76 580 L84 590 L92 582 L100 590 L106 580 L112 586 L120 580 L124 566" fill="none" stroke="#efe2d6" stroke-width="1.6"/>
<!-- left eye -->
<path d="M52 494 C58 488 70 488 76 492 C78 500 72 508 62 509 C56 508 52 502 52 494 Z" fill="#ecd68a" stroke="#1a1212" stroke-width="1.2"/>
<ellipse cx="64" cy="498" rx="5.6" ry="5" fill="#5a4a3a"/>
<circle cx="62.6" cy="496.4" r="1.6" fill="#8a7a5a"/>
<path d="M47 492 C56 488 68 486 78 490 M66 486 C72 482 76 478 78 472" fill="none" stroke="#1a1212" stroke-width="1.6" stroke-linecap="round"/>
<!-- right eye -->
<path d="M92 470 C96 464 104 466 108 474 C111 482 108 488 102 488 C96 486 92 478 92 470 Z" fill="#ecd68a" stroke="#1a1212" stroke-width="1.2"/>
<ellipse cx="99.6" cy="476.6" rx="4.6" ry="5.6" fill="#5a4a3a" transform="rotate(-20 99.6 476.6)"/>
<path d="M90 470 C94 462 102 462 108 468" fill="none" stroke="#1a1212" stroke-width="1.6" stroke-linecap="round"/>
<!-- beak -->
<path d="M87 506 C88 498 96 494 104 498 C108 506 110 514 109 521 C100 518 92 514 87 506 Z" fill="#f4f0ea" stroke="#1a1212" stroke-width="1.2" stroke-linejoin="round"/>
<path d="M92 508 C96 504 100 504 104 506" fill="none" stroke="#1a1212" stroke-width="0.9"/>
<!-- pen -->
<path d="M110 541 C112 539 115 540 118 542 L138 556 L158 570 L162 584 L150 580 L132 562 L112 546 C110 544 109 542 110 541 Z" fill="#3c3232" stroke="#1a1212" stroke-width="0.8"/>
<!-- fingers over pen -->
<path d="M126 566 C134 560 146 556 154 558 C160 562 160 568 154 572 C146 572 136 574 130 578 Z" fill="#efe4d6" stroke="#1a1212" stroke-width="0.9"/>
<path d="M128 580 C136 576 148 574 156 576 M128 590 C136 586 146 584 152 586" fill="none" stroke="#1a1212" stroke-width="0.8"/>
</svg>

<svg style="left:1130px;top:555px" width="120" height="165" viewBox="1130 555 120 165">
<g stroke="#0c0808" stroke-width="2" stroke-linejoin="round" stroke-linecap="round">
<!-- pants -->
<path d="M1167.5 668 L1227.5 664 L1228.5 700 L1220.5 702 L1216 684 C1206 681 1192 682 1184 685 L1178.5 703 L1170.5 703 Z" fill="#5879a1" stroke-width="1.4"/>
<!-- shoes -->
<path d="M1169 702 L1179 701 L1178 708 L1168 708.6 Z M1219 701 L1229 700 L1229 706.6 L1218.6 707.6 Z" fill="#3a2828" stroke-width="1"/>
<!-- sleeves -->
<path d="M1164 636 C1158 642 1156 654 1158 666 L1166 668 L1168 640 Z" fill="#f6f2ec" stroke-width="1.4"/>
<path d="M1216 622 C1226 626 1232 640 1234.5 652 L1218 658 Z" fill="#f6f2ec" stroke-width="1.4"/>
<path d="M1218 656 L1234 650 C1236 656 1234 664 1228 666 L1222 664 Z" fill="#ead6c6" stroke-width="1.4"/>
<!-- shirt centre -->
<path d="M1176 628 L1198 626 L1192 650 L1180 650 Z" fill="#f6f2ec" stroke="none"/>
<!-- vest -->
<path d="M1166.5 632 C1172 630 1178 634 1182 640 L1188.5 664 C1182 670 1172 672 1165 670 C1163 658 1163.5 644 1166.5 632 Z" fill="#b7696a" stroke-width="1.6"/>
<path d="M1196 630 C1202 622 1210 618 1217 619 C1222 632 1224 650 1222.5 664 C1212 670 1198 670 1189 664 C1190 652 1192 640 1196 630 Z" fill="#b7696a" stroke-width="1.6"/>
<!-- tie -->
<path d="M1183.6 634 L1188.6 633 L1191 655 L1186.6 659 L1182.6 654 Z" fill="#5c5254" stroke-width="1"/>
<circle cx="1193.6" cy="658" r="1" fill="#7a3a3a" stroke-width="0.6"/><circle cx="1194" cy="664" r="1" fill="#7a3a3a" stroke-width="0.6"/>
<!-- head -->
<path d="M1185 560.2 C1204 559.6 1220 568 1222.4 586 C1223.4 598 1222.6 610 1219.6 617 C1214 621 1206 622 1200 626 C1194 630 1186 632 1178 630 C1172 628 1166 624 1160 620 C1152 618 1146 614 1146 606 C1146 598 1147 590 1149 584 C1153 570 1166 561 1185 560.2 Z" fill="#b8957c" stroke-width="2.2"/>
</g>
<!-- feather fringe -->
<path d="M1157 621 L1162 626 L1166 624 L1170 630 L1175 628 L1180 634 L1186 630 L1192 632 L1196 626 L1202 626 L1206 621 L1212 621 L1216 617" fill="none" stroke="#f0e6dc" stroke-width="2.6" stroke-linejoin="round" stroke-linecap="round"/>
<circle cx="1158.4" cy="597.2" r="4.3" fill="#0a0606"/>
<circle cx="1200.2" cy="595.8" r="4.3" fill="#0a0606"/>
<path d="M1174.6 604 C1178 601 1184 601 1187.6 603.4 L1178.6 615.4 Z" fill="#f4ede6" stroke="#0c0808" stroke-width="1.5" stroke-linejoin="round"/>
</svg>


</body>
</html>
